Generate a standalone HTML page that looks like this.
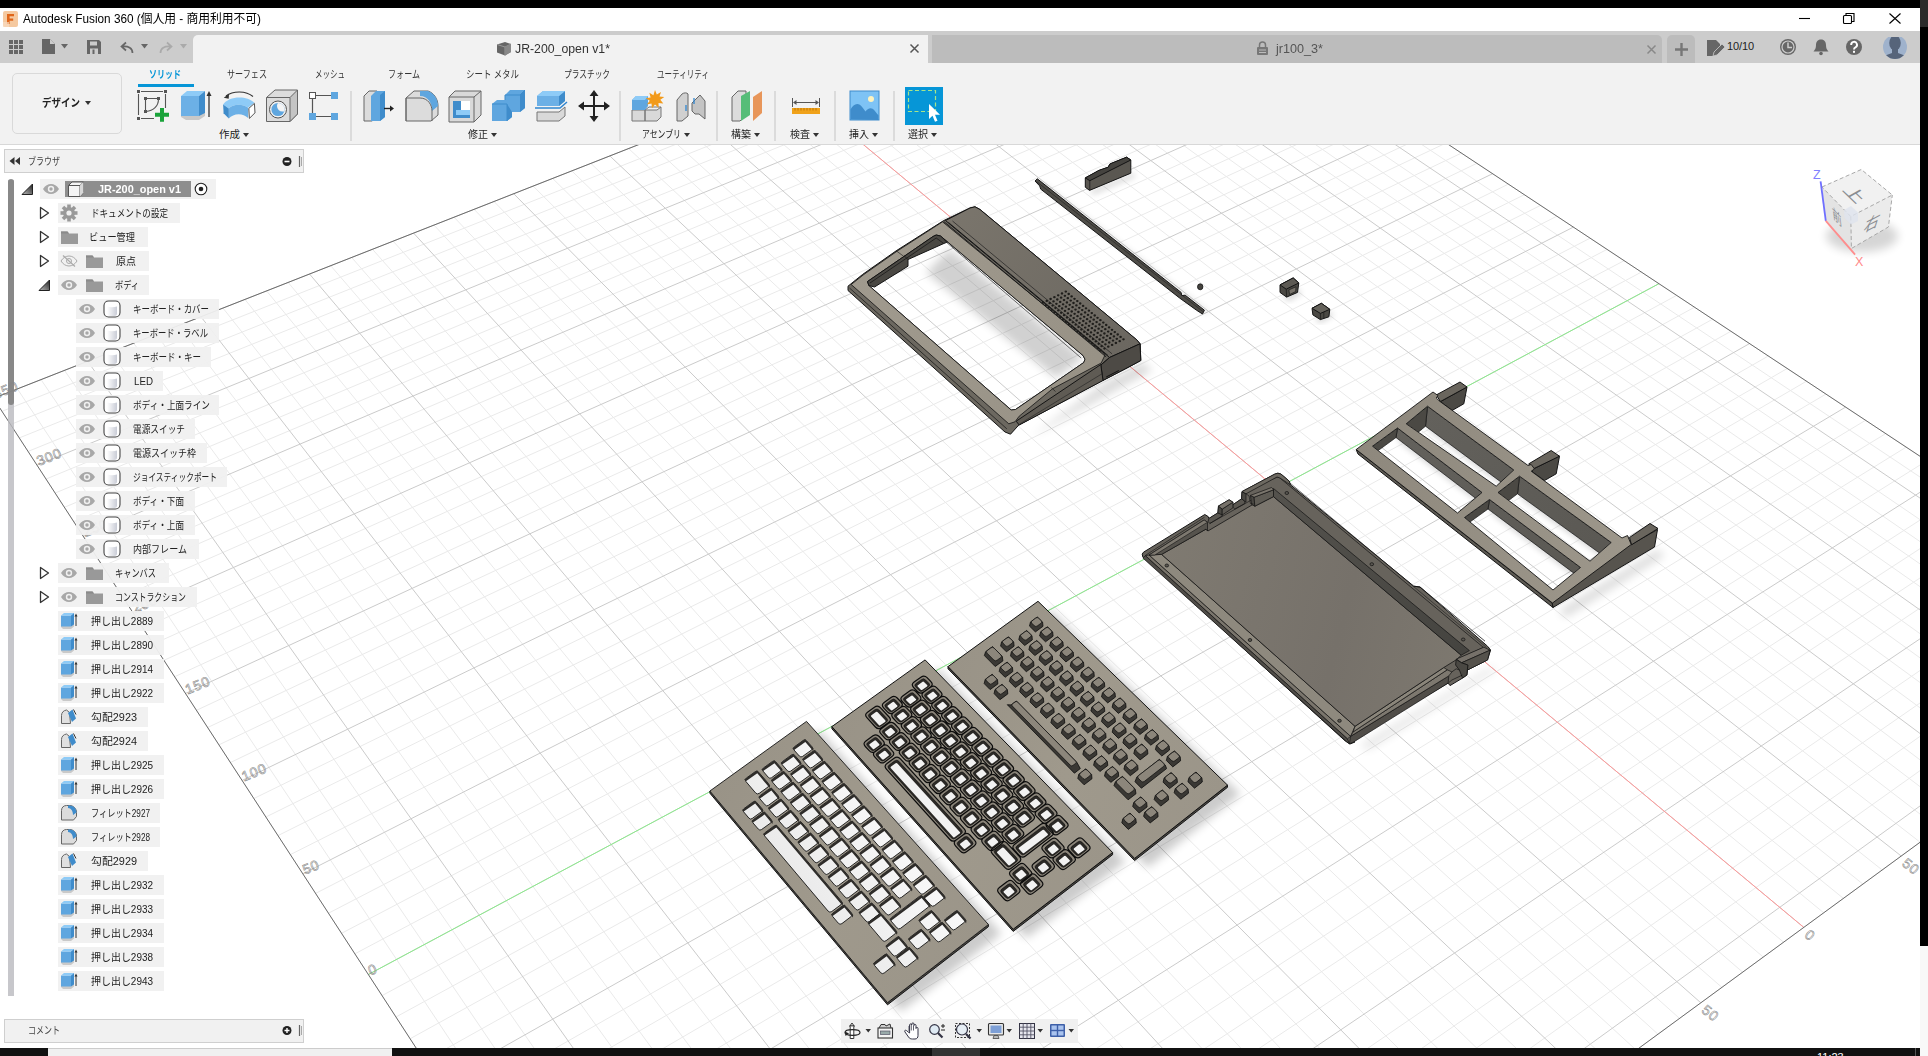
<!DOCTYPE html>
<html lang="ja"><head><meta charset="utf-8"><title>Autodesk Fusion 360</title>
<style>
*{box-sizing:border-box;margin:0;padding:0}
html,body{width:1928px;height:1056px;overflow:hidden;background:#000}
body{font-family:"Liberation Sans","Noto Sans CJK JP",sans-serif;font-size:12px;color:#222;position:relative}
.abs{position:absolute}
#win{position:absolute;left:0;top:8px;width:1920px;height:1040px;background:#fff}
#title{position:absolute;left:0;top:8px;width:1920px;height:23px;background:#fff}
#title .t{position:absolute;left:23px;top:4px;font-size:12.5px;color:#000;white-space:nowrap;letter-spacing:-0.1px}
#tabbar{position:absolute;left:0;top:31px;width:1920px;height:32px;background:#cccccc}
#toolbar{position:absolute;left:0;top:63px;width:1920px;height:82px;background:#f2f2f2;border-bottom:1px solid #d8d8d8}
.tab1{position:absolute;left:193px;top:4px;width:735px;height:28px;background:#f2f2f2;border-radius:5px 0 0 0}
.tab2{position:absolute;left:932px;top:4px;width:730px;height:28px;background:#bcbcbc;border-radius:0}
.tablabel{position:absolute;top:7px;font-size:12.5px;white-space:nowrap}
.rt{position:absolute;top:65px;font-size:10.5px;color:#333;white-space:nowrap;transform-origin:0 0}
.grp{position:absolute;top:128px;font-size:10.5px;color:#222;white-space:nowrap}
.row{position:absolute;height:20px;background:rgba(240,240,240,.93);font-size:10.5px;color:#222;white-space:nowrap}
.row span{position:absolute;top:3px}
</style></head><body>
<div id="win"></div>
<svg class="abs" style="left:0;top:145px" width="1920" height="903" viewBox="0 145 1920 903">
<defs>
<filter id="blur3" x="-20%" y="-20%" width="140%" height="140%"><feGaussianBlur stdDeviation="3"/></filter>
<filter id="blur5" x="-20%" y="-20%" width="140%" height="140%"><feGaussianBlur stdDeviation="5"/></filter>
</defs>
<path d="M810.8 1654.7L2197 639.4M769.1 1590.5L2148.9 607.6M748.8 1559.3L2125.4 592.1M728.8 1528.7L2102.2 576.7M709.3 1498.6L2079.3 561.6M671.2 1440.1L2034.3 531.9M652.7 1411.6L2012.3 517.3M634.5 1383.7L1990.5 502.9M616.7 1356.2L1969 488.7M581.9 1302.7L1926.8 460.8M564.9 1276.7L1906.2 447.1M548.3 1251.1L1885.7 433.6M531.9 1225.9L1865.5 420.3M499.9 1176.8L1825.9 394.1M484.4 1152.8L1806.5 381.2M469 1129.3L1787.2 368.5M454 1106.1L1768.3 356M424.5 1060.8L1730.9 331.3M410.2 1038.7L1712.6 319.2M396 1017L1694.5 307.2M382.1 995.6L1676.6 295.4M354.9 953.8L1641.4 272.1M341.6 933.3L1624.1 260.7M328.5 913.2L1607 249.4M315.6 893.4L1590.1 238.2M290.4 854.6L1556.9 216.2M278 835.6L1540.5 205.4M265.9 817L1524.4 194.7M253.9 798.5L1508.4 184.1M230.5 762.5L1476.9 163.3M219 744.8L1461.4 153.1M207.7 727.5L1446.1 143M196.5 710.3L1431 133M174.7 676.7L1401.2 113.3M164 660.3L1386.5 103.6M153.4 644L1372 94M143 628L1357.6 84.5M122.6 596.6L1329.3 65.8M112.6 581.2L1315.4 56.6M102.7 566.1L1301.6 47.4M92.9 551.1L1288 38.4M73.8 521.7L1261.1 20.6M64.4 507.3L1247.8 11.9M55.2 493L1234.7 3.2M46.1 479L1221.8 -5.4M28.1 451.4L1196.2 -22.3M19.3 437.9L1183.6 -30.6M10.6 424.5L1171.1 -38.9M2 411.3L1158.7 -47M810.8 1654.7L-6.5 398.3M843 1631.2L17.4 388.9M874.7 1607.9L41 379.6M906 1585L64.5 370.4M967.2 1540.1L110.7 352.2M997.3 1518.2L133.6 343.2M1026.9 1496.4L156.2 334.3M1056.1 1475L178.7 325.5M1113.5 1433L223 308.1M1141.6 1412.4L244.9 299.4M1169.3 1392.1L266.6 290.9M1196.7 1372.1L288.1 282.4M1250.5 1332.7L330.7 265.7M1276.9 1313.4L351.7 257.5M1302.9 1294.3L372.5 249.3M1328.6 1275.4L393.1 241.1M1379.1 1238.4L434 225.1M1403.9 1220.3L454.1 217.2M1428.4 1202.3L474.1 209.3M1452.6 1184.6L494 201.5M1500.2 1149.8L533.2 186.1M1523.5 1132.7L552.6 178.4M1546.6 1115.8L571.8 170.9M1569.4 1099.1L590.9 163.4M1614.2 1066.3L628.6 148.5M1636.2 1050.1L647.2 141.2M1658 1034.2L665.7 133.9M1679.5 1018.4L684.1 126.7M1721.9 987.4L720.4 112.5M1742.7 972.2L738.3 105.4M1763.3 957.1L756.1 98.4M1783.6 942.2L773.8 91.4M1823.7 912.8L808.7 77.7M1843.4 898.4L826 70.9M1862.9 884.1L843.2 64.2M1882.2 870L860.2 57.5M1920.1 842.2L893.9 44.2M1938.8 828.5L910.5 37.7M1957.3 815L927 31.2M1975.5 801.6L943.5 24.7M2011.5 775.2L975.9 12M2029.3 762.2L992 5.6M2046.8 749.4L1007.9 -0.6M2064.2 736.7L1023.8 -6.9M2098.4 711.6L1055.1 -19.2M2115.2 699.3L1070.6 -25.3M2131.9 687.1L1086 -31.3M2148.4 675L1101.3 -37.3M2180.9 651.1L1131.5 -49.2M2197 639.4L1146.5 -55.1" stroke="#eaeaea" stroke-width="1" fill="none"/>
<path d="M789.8 1622.3L2172.8 623.4M690.1 1469.1L2056.6 546.6M599.1 1329.3L1947.8 474.7M515.8 1201.1L1845.6 407.1M439.1 1083.3L1749.5 343.6M368.4 974.5L1658.9 283.7M302.9 873.8L1573.4 227.1M242.1 780.4L1492.6 173.7M185.5 693.4L1416 123.1M132.7 612.2L1343.4 75.1M83.3 536.3L1274.5 29.5M37 465.1L1208.9 -13.9M-6.5 398.3L1146.5 -55.1M936.8 1562.4L87.7 361.3M1085 1453.9L200.9 316.7M1223.8 1352.2L309.5 274M1354 1256.8L413.6 233.1M1476.5 1167.1L513.7 193.7M1591.9 1082.6L609.8 155.9M1700.8 1002.8L702.3 119.6M1803.8 927.4L791.3 84.6M1901.2 856L877.1 50.8M1993.6 788.3L959.8 18.3M2081.4 724.1L1039.5 -13M2164.8 663L1116.4 -43.3" stroke="#cbcbcb" stroke-width="1" fill="none"/>
<path d="M1803.8 927.4L791.3 84.6" stroke="#f99" stroke-width="1"/>
<path d="M368.4 974.5L1658.9 283.7" stroke="#8cec8c" stroke-width="1"/>
<polygon points="810.8,1654.7 -6.5,398.3 1146.5,-55.1 2197,639.4" fill="none" stroke="#6c6c6c" stroke-width="1"/>
<text x="370.4" y="975.5" font-size="14" fill="none" stroke="#858585" stroke-width=".55" letter-spacing=".8" font-family="Liberation Sans,sans-serif" transform="rotate(-22 370.4 975.5)">0</text>
<text x="304.9" y="874.8" font-size="14" fill="none" stroke="#858585" stroke-width=".55" letter-spacing=".8" font-family="Liberation Sans,sans-serif" transform="rotate(-22 304.9 874.8)">50</text>
<text x="244.1" y="781.4" font-size="14" fill="none" stroke="#858585" stroke-width=".55" letter-spacing=".8" font-family="Liberation Sans,sans-serif" transform="rotate(-22 244.1 781.4)">100</text>
<text x="187.5" y="694.4" font-size="14" fill="none" stroke="#858585" stroke-width=".55" letter-spacing=".8" font-family="Liberation Sans,sans-serif" transform="rotate(-22 187.5 694.4)">150</text>
<text x="134.7" y="613.2" font-size="14" fill="none" stroke="#858585" stroke-width=".55" letter-spacing=".8" font-family="Liberation Sans,sans-serif" transform="rotate(-22 134.7 613.2)">200</text>
<text x="85.3" y="537.3" font-size="14" fill="none" stroke="#858585" stroke-width=".55" letter-spacing=".8" font-family="Liberation Sans,sans-serif" transform="rotate(-22 85.3 537.3)">250</text>
<text x="39" y="466.1" font-size="14" fill="none" stroke="#858585" stroke-width=".55" letter-spacing=".8" font-family="Liberation Sans,sans-serif" transform="rotate(-22 39 466.1)">300</text>
<text x="-4.5" y="399.3" font-size="14" fill="none" stroke="#858585" stroke-width=".55" letter-spacing=".8" font-family="Liberation Sans,sans-serif" transform="rotate(-22 -4.5 399.3)">350</text>
<text x="1700.8" y="1011.8" font-size="14" fill="none" stroke="#858585" stroke-width=".55" letter-spacing=".8" font-family="Liberation Sans,sans-serif" transform="rotate(38 1700.8 1011.8)">50</text>
<text x="1803.8" y="936.4" font-size="14" fill="none" stroke="#858585" stroke-width=".55" letter-spacing=".8" font-family="Liberation Sans,sans-serif" transform="rotate(38 1803.8 936.4)">0</text>
<text x="1901.2" y="865" font-size="14" fill="none" stroke="#858585" stroke-width=".55" letter-spacing=".8" font-family="Liberation Sans,sans-serif" transform="rotate(38 1901.2 865)">50</text>
<defs>
<linearGradient id="gFrame" gradientUnits="userSpaceOnUse" x1="850" y1="290" x2="1100" y2="350"><stop offset="0" stop-color="#a09a8e"/><stop offset="1" stop-color="#989286"/></linearGradient>
<linearGradient id="gBack" gradientUnits="userSpaceOnUse" x1="950" y1="215" x2="1135" y2="350"><stop offset="0" stop-color="#7a756c"/><stop offset="1" stop-color="#6b6760"/></linearGradient>
<linearGradient id="gIF" gradientUnits="userSpaceOnUse" x1="1360" y1="450" x2="1640" y2="520"><stop offset="0" stop-color="#8e887d"/><stop offset="1" stop-color="#9d978b"/></linearGradient>
<linearGradient id="gWall" gradientUnits="userSpaceOnUse" x1="1400" y1="400" x2="1620" y2="560"><stop offset="0" stop-color="#64625d"/><stop offset="1" stop-color="#5a5853"/></linearGradient>
<linearGradient id="gBWall" gradientUnits="userSpaceOnUse" x1="1275" y1="490" x2="1465" y2="650"><stop offset="0" stop-color="#54524d"/><stop offset="1" stop-color="#454440"/></linearGradient>
<linearGradient id="gFloor" gradientUnits="userSpaceOnUse" x1="1160" y1="560" x2="1470" y2="640"><stop offset="0" stop-color="#7f7a71"/><stop offset=".6" stop-color="#76716a"/><stop offset="1" stop-color="#7d786f"/></linearGradient>
</defs><polygon points="949.5,248.8 1083.8,358 1056.2,378 926.2,272.5" fill="#000" opacity=".18" filter="url(#blur5)" clip-path="url(#cpWin)"/>
<polygon points="1105,382.5 1142.5,362.5 1152.5,370 1030,437.5" fill="#000" opacity=".15" filter="url(#blur5)"/>
<clipPath id="cpWin"><polygon points="867.5,281.5 933,236.5 936.2,235 940.5,236 1083,355.5 1085,359.2 1083.8,362.5 1015.5,409.5 1011.2,410 868.8,285.5"/></clipPath>
<path d="M848 286.2L862.5 274.5L896.2 250.8L943.8 220.5L970 208L975 206.8L980 209.5L1136.2 339.5L1140.2 343.8L1140.8 360.5L1128.8 367L1102.5 380.5L1018.8 425L1010.5 434.2L1005 432L848 290.5ZM867.5 281.5L933 236.5L936.2 235L940.5 236L1083 355.5L1085 359.2L1083.8 362.5L1015.5 409.5L1011.2 410L868.8 285.5Z" fill="#6c6860" fill-rule="evenodd" stroke="#141414" stroke-width="1" stroke-linejoin="round"/>
<path d="M851.2 284.5L863.8 274.5L897 251.2L942.5 221.8L1105 355L1101.2 363L1052.5 388.8L1019.2 416.2L1015 421.8L1008.8 423.8ZM867.5 281.5L933 236.5L936.2 235L940.5 236L1083 355.5L1085 359.2L1083.8 362.5L1015.5 409.5L1011.2 410L868.8 285.5Z" fill="url(#gFrame)" fill-rule="evenodd" stroke="#141414" stroke-width="0.8" stroke-linejoin="round"/>
<polygon points="867.5,281.5 933,236.5 936.2,235 940.5,236 947.5,242 943.8,243.5 908,259.5 908,266.2 874.5,287 868.8,285.5" fill="#4a4843" stroke="#141414" stroke-width="1.0" stroke-linejoin="round" />
<polyline points="870,283 936.2,238 943.8,243.5" fill="none" stroke="#141414" stroke-width="0.7" stroke-linejoin="round" />
<polyline points="903.8,255.5 908,259.5" fill="none" stroke="#141414" stroke-width="0.7" stroke-linejoin="round" />
<polyline points="896.2,250.8 903,255.8" fill="none" stroke="#141414" stroke-width="0.6" stroke-linejoin="round" />
<polyline points="1051.2,387.5 1055.5,391.5" fill="none" stroke="#141414" stroke-width="0.6" stroke-linejoin="round" />
<polyline points="943.8,240 1081.2,358" fill="none" stroke="#2a2a2a" stroke-width="0.7" stroke-linejoin="round" />
<polyline points="849.5,288 1006.8,428.8" fill="none" stroke="#141414" stroke-width="0.7" stroke-linejoin="round" />
<polygon points="945.5,220.5 970,208 975,206.8 980,209.5 1137,340 1140,343.8 1109.5,357.5" fill="url(#gBack)" stroke="#141414" stroke-width="1.0" stroke-linejoin="round" />
<polyline points="948.5,222.5 1108,355.5" fill="none" stroke="#1a1a1a" stroke-width="0.9" stroke-linejoin="round" />
<polyline points="952.5,221 1112,353.8" fill="none" stroke="#2c2b29" stroke-width="0.8" stroke-linejoin="round" />
<polyline points="943.8,221.5 1106.2,357" fill="none" stroke="#1a1a1a" stroke-width="0.9" stroke-linejoin="round" />
<polygon points="1109.5,357.5 1140,343.8 1140.8,360.5 1128.8,367 1103,380.5 1100.8,365" fill="#4d4a45" stroke="#141414" stroke-width="1.0" stroke-linejoin="round" />
<polyline points="1100.8,365 1109.5,357.5" fill="none" stroke="#141414" stroke-width="0.7" stroke-linejoin="round" />
<polygon points="1016.2,421.2 1100.8,364.5 1103,380.5 1019.2,425" fill="#5f5b54" stroke="#141414" stroke-width="1.0" stroke-linejoin="round" />
<polyline points="1020,423.8 1102,373.8" fill="none" stroke="#222" stroke-width="0.6" stroke-linejoin="round" />
<polyline points="1106.2,377 1118.8,370.5" fill="none" stroke="#111" stroke-width="1.0" stroke-linejoin="round" />
<path d="M1064.5 291.6a1.3 1.15 0 1 0 2.6 0a1.3 1.15 0 1 0 -2.6 0M1060.7 293.5a1.3 1.15 0 1 0 2.6 0a1.3 1.15 0 1 0 -2.6 0M1056.9 295.3a1.3 1.15 0 1 0 2.6 0a1.3 1.15 0 1 0 -2.6 0M1053.1 297.2a1.3 1.15 0 1 0 2.6 0a1.3 1.15 0 1 0 -2.6 0M1049.3 299a1.3 1.15 0 1 0 2.6 0a1.3 1.15 0 1 0 -2.6 0M1045.5 300.9a1.3 1.15 0 1 0 2.6 0a1.3 1.15 0 1 0 -2.6 0M1041.7 302.7a1.3 1.15 0 1 0 2.6 0a1.3 1.15 0 1 0 -2.6 0M1067.4 294a1.3 1.15 0 1 0 2.6 0a1.3 1.15 0 1 0 -2.6 0M1063.6 295.8a1.3 1.15 0 1 0 2.6 0a1.3 1.15 0 1 0 -2.6 0M1059.8 297.7a1.3 1.15 0 1 0 2.6 0a1.3 1.15 0 1 0 -2.6 0M1056 299.5a1.3 1.15 0 1 0 2.6 0a1.3 1.15 0 1 0 -2.6 0M1052.2 301.4a1.3 1.15 0 1 0 2.6 0a1.3 1.15 0 1 0 -2.6 0M1048.4 303.2a1.3 1.15 0 1 0 2.6 0a1.3 1.15 0 1 0 -2.6 0M1044.6 305.1a1.3 1.15 0 1 0 2.6 0a1.3 1.15 0 1 0 -2.6 0M1070.3 296.4a1.3 1.15 0 1 0 2.6 0a1.3 1.15 0 1 0 -2.6 0M1066.5 298.2a1.3 1.15 0 1 0 2.6 0a1.3 1.15 0 1 0 -2.6 0M1062.7 300.1a1.3 1.15 0 1 0 2.6 0a1.3 1.15 0 1 0 -2.6 0M1058.9 301.9a1.3 1.15 0 1 0 2.6 0a1.3 1.15 0 1 0 -2.6 0M1055.1 303.8a1.3 1.15 0 1 0 2.6 0a1.3 1.15 0 1 0 -2.6 0M1051.3 305.6a1.3 1.15 0 1 0 2.6 0a1.3 1.15 0 1 0 -2.6 0M1047.5 307.5a1.3 1.15 0 1 0 2.6 0a1.3 1.15 0 1 0 -2.6 0M1073.2 298.8a1.3 1.15 0 1 0 2.6 0a1.3 1.15 0 1 0 -2.6 0M1069.4 300.6a1.3 1.15 0 1 0 2.6 0a1.3 1.15 0 1 0 -2.6 0M1065.6 302.5a1.3 1.15 0 1 0 2.6 0a1.3 1.15 0 1 0 -2.6 0M1061.8 304.3a1.3 1.15 0 1 0 2.6 0a1.3 1.15 0 1 0 -2.6 0M1058 306.2a1.3 1.15 0 1 0 2.6 0a1.3 1.15 0 1 0 -2.6 0M1054.2 308a1.3 1.15 0 1 0 2.6 0a1.3 1.15 0 1 0 -2.6 0M1050.4 309.9a1.3 1.15 0 1 0 2.6 0a1.3 1.15 0 1 0 -2.6 0M1076 301.1a1.3 1.15 0 1 0 2.6 0a1.3 1.15 0 1 0 -2.6 0M1072.2 303a1.3 1.15 0 1 0 2.6 0a1.3 1.15 0 1 0 -2.6 0M1068.4 304.8a1.3 1.15 0 1 0 2.6 0a1.3 1.15 0 1 0 -2.6 0M1064.6 306.7a1.3 1.15 0 1 0 2.6 0a1.3 1.15 0 1 0 -2.6 0M1060.8 308.5a1.3 1.15 0 1 0 2.6 0a1.3 1.15 0 1 0 -2.6 0M1057 310.4a1.3 1.15 0 1 0 2.6 0a1.3 1.15 0 1 0 -2.6 0M1053.2 312.2a1.3 1.15 0 1 0 2.6 0a1.3 1.15 0 1 0 -2.6 0M1078.9 303.5a1.3 1.15 0 1 0 2.6 0a1.3 1.15 0 1 0 -2.6 0M1075.1 305.4a1.3 1.15 0 1 0 2.6 0a1.3 1.15 0 1 0 -2.6 0M1071.3 307.2a1.3 1.15 0 1 0 2.6 0a1.3 1.15 0 1 0 -2.6 0M1067.5 309.1a1.3 1.15 0 1 0 2.6 0a1.3 1.15 0 1 0 -2.6 0M1063.7 310.9a1.3 1.15 0 1 0 2.6 0a1.3 1.15 0 1 0 -2.6 0M1059.9 312.8a1.3 1.15 0 1 0 2.6 0a1.3 1.15 0 1 0 -2.6 0M1056.1 314.6a1.3 1.15 0 1 0 2.6 0a1.3 1.15 0 1 0 -2.6 0M1081.8 305.9a1.3 1.15 0 1 0 2.6 0a1.3 1.15 0 1 0 -2.6 0M1078 307.8a1.3 1.15 0 1 0 2.6 0a1.3 1.15 0 1 0 -2.6 0M1074.2 309.6a1.3 1.15 0 1 0 2.6 0a1.3 1.15 0 1 0 -2.6 0M1070.4 311.5a1.3 1.15 0 1 0 2.6 0a1.3 1.15 0 1 0 -2.6 0M1066.6 313.3a1.3 1.15 0 1 0 2.6 0a1.3 1.15 0 1 0 -2.6 0M1062.8 315.2a1.3 1.15 0 1 0 2.6 0a1.3 1.15 0 1 0 -2.6 0M1059 317a1.3 1.15 0 1 0 2.6 0a1.3 1.15 0 1 0 -2.6 0M1084.7 308.3a1.3 1.15 0 1 0 2.6 0a1.3 1.15 0 1 0 -2.6 0M1080.9 310.1a1.3 1.15 0 1 0 2.6 0a1.3 1.15 0 1 0 -2.6 0M1077.1 312a1.3 1.15 0 1 0 2.6 0a1.3 1.15 0 1 0 -2.6 0M1073.3 313.8a1.3 1.15 0 1 0 2.6 0a1.3 1.15 0 1 0 -2.6 0M1069.5 315.7a1.3 1.15 0 1 0 2.6 0a1.3 1.15 0 1 0 -2.6 0M1065.7 317.5a1.3 1.15 0 1 0 2.6 0a1.3 1.15 0 1 0 -2.6 0M1061.9 319.4a1.3 1.15 0 1 0 2.6 0a1.3 1.15 0 1 0 -2.6 0M1087.6 310.7a1.3 1.15 0 1 0 2.6 0a1.3 1.15 0 1 0 -2.6 0M1083.8 312.5a1.3 1.15 0 1 0 2.6 0a1.3 1.15 0 1 0 -2.6 0M1080 314.4a1.3 1.15 0 1 0 2.6 0a1.3 1.15 0 1 0 -2.6 0M1076.2 316.2a1.3 1.15 0 1 0 2.6 0a1.3 1.15 0 1 0 -2.6 0M1072.4 318.1a1.3 1.15 0 1 0 2.6 0a1.3 1.15 0 1 0 -2.6 0M1068.6 319.9a1.3 1.15 0 1 0 2.6 0a1.3 1.15 0 1 0 -2.6 0M1064.8 321.8a1.3 1.15 0 1 0 2.6 0a1.3 1.15 0 1 0 -2.6 0M1090.5 313.1a1.3 1.15 0 1 0 2.6 0a1.3 1.15 0 1 0 -2.6 0M1086.7 314.9a1.3 1.15 0 1 0 2.6 0a1.3 1.15 0 1 0 -2.6 0M1082.9 316.8a1.3 1.15 0 1 0 2.6 0a1.3 1.15 0 1 0 -2.6 0M1079.1 318.6a1.3 1.15 0 1 0 2.6 0a1.3 1.15 0 1 0 -2.6 0M1075.3 320.5a1.3 1.15 0 1 0 2.6 0a1.3 1.15 0 1 0 -2.6 0M1071.5 322.3a1.3 1.15 0 1 0 2.6 0a1.3 1.15 0 1 0 -2.6 0M1067.7 324.2a1.3 1.15 0 1 0 2.6 0a1.3 1.15 0 1 0 -2.6 0M1093.4 315.5a1.3 1.15 0 1 0 2.6 0a1.3 1.15 0 1 0 -2.6 0M1089.6 317.3a1.3 1.15 0 1 0 2.6 0a1.3 1.15 0 1 0 -2.6 0M1085.8 319.2a1.3 1.15 0 1 0 2.6 0a1.3 1.15 0 1 0 -2.6 0M1082 321a1.3 1.15 0 1 0 2.6 0a1.3 1.15 0 1 0 -2.6 0M1078.2 322.9a1.3 1.15 0 1 0 2.6 0a1.3 1.15 0 1 0 -2.6 0M1074.4 324.7a1.3 1.15 0 1 0 2.6 0a1.3 1.15 0 1 0 -2.6 0M1070.6 326.6a1.3 1.15 0 1 0 2.6 0a1.3 1.15 0 1 0 -2.6 0M1096.2 317.8a1.3 1.15 0 1 0 2.6 0a1.3 1.15 0 1 0 -2.6 0M1092.4 319.7a1.3 1.15 0 1 0 2.6 0a1.3 1.15 0 1 0 -2.6 0M1088.6 321.5a1.3 1.15 0 1 0 2.6 0a1.3 1.15 0 1 0 -2.6 0M1084.8 323.4a1.3 1.15 0 1 0 2.6 0a1.3 1.15 0 1 0 -2.6 0M1081 325.2a1.3 1.15 0 1 0 2.6 0a1.3 1.15 0 1 0 -2.6 0M1077.2 327.1a1.3 1.15 0 1 0 2.6 0a1.3 1.15 0 1 0 -2.6 0M1073.4 328.9a1.3 1.15 0 1 0 2.6 0a1.3 1.15 0 1 0 -2.6 0M1099.1 320.2a1.3 1.15 0 1 0 2.6 0a1.3 1.15 0 1 0 -2.6 0M1095.3 322.1a1.3 1.15 0 1 0 2.6 0a1.3 1.15 0 1 0 -2.6 0M1091.5 323.9a1.3 1.15 0 1 0 2.6 0a1.3 1.15 0 1 0 -2.6 0M1087.7 325.8a1.3 1.15 0 1 0 2.6 0a1.3 1.15 0 1 0 -2.6 0M1083.9 327.6a1.3 1.15 0 1 0 2.6 0a1.3 1.15 0 1 0 -2.6 0M1080.1 329.5a1.3 1.15 0 1 0 2.6 0a1.3 1.15 0 1 0 -2.6 0M1076.3 331.3a1.3 1.15 0 1 0 2.6 0a1.3 1.15 0 1 0 -2.6 0M1102 322.6a1.3 1.15 0 1 0 2.6 0a1.3 1.15 0 1 0 -2.6 0M1098.2 324.5a1.3 1.15 0 1 0 2.6 0a1.3 1.15 0 1 0 -2.6 0M1094.4 326.3a1.3 1.15 0 1 0 2.6 0a1.3 1.15 0 1 0 -2.6 0M1090.6 328.2a1.3 1.15 0 1 0 2.6 0a1.3 1.15 0 1 0 -2.6 0M1086.8 330a1.3 1.15 0 1 0 2.6 0a1.3 1.15 0 1 0 -2.6 0M1083 331.9a1.3 1.15 0 1 0 2.6 0a1.3 1.15 0 1 0 -2.6 0M1079.2 333.7a1.3 1.15 0 1 0 2.6 0a1.3 1.15 0 1 0 -2.6 0M1104.9 325a1.3 1.15 0 1 0 2.6 0a1.3 1.15 0 1 0 -2.6 0M1101.1 326.8a1.3 1.15 0 1 0 2.6 0a1.3 1.15 0 1 0 -2.6 0M1097.3 328.7a1.3 1.15 0 1 0 2.6 0a1.3 1.15 0 1 0 -2.6 0M1093.5 330.5a1.3 1.15 0 1 0 2.6 0a1.3 1.15 0 1 0 -2.6 0M1089.7 332.4a1.3 1.15 0 1 0 2.6 0a1.3 1.15 0 1 0 -2.6 0M1085.9 334.2a1.3 1.15 0 1 0 2.6 0a1.3 1.15 0 1 0 -2.6 0M1082.1 336.1a1.3 1.15 0 1 0 2.6 0a1.3 1.15 0 1 0 -2.6 0M1107.8 327.4a1.3 1.15 0 1 0 2.6 0a1.3 1.15 0 1 0 -2.6 0M1104 329.2a1.3 1.15 0 1 0 2.6 0a1.3 1.15 0 1 0 -2.6 0M1100.2 331.1a1.3 1.15 0 1 0 2.6 0a1.3 1.15 0 1 0 -2.6 0M1096.4 332.9a1.3 1.15 0 1 0 2.6 0a1.3 1.15 0 1 0 -2.6 0M1092.6 334.8a1.3 1.15 0 1 0 2.6 0a1.3 1.15 0 1 0 -2.6 0M1088.8 336.6a1.3 1.15 0 1 0 2.6 0a1.3 1.15 0 1 0 -2.6 0M1085 338.5a1.3 1.15 0 1 0 2.6 0a1.3 1.15 0 1 0 -2.6 0M1110.7 329.8a1.3 1.15 0 1 0 2.6 0a1.3 1.15 0 1 0 -2.6 0M1106.9 331.6a1.3 1.15 0 1 0 2.6 0a1.3 1.15 0 1 0 -2.6 0M1103.1 333.5a1.3 1.15 0 1 0 2.6 0a1.3 1.15 0 1 0 -2.6 0M1099.3 335.3a1.3 1.15 0 1 0 2.6 0a1.3 1.15 0 1 0 -2.6 0M1095.5 337.2a1.3 1.15 0 1 0 2.6 0a1.3 1.15 0 1 0 -2.6 0M1091.7 339a1.3 1.15 0 1 0 2.6 0a1.3 1.15 0 1 0 -2.6 0M1087.9 340.9a1.3 1.15 0 1 0 2.6 0a1.3 1.15 0 1 0 -2.6 0M1113.5 332.1a1.3 1.15 0 1 0 2.6 0a1.3 1.15 0 1 0 -2.6 0M1109.7 334a1.3 1.15 0 1 0 2.6 0a1.3 1.15 0 1 0 -2.6 0M1105.9 335.8a1.3 1.15 0 1 0 2.6 0a1.3 1.15 0 1 0 -2.6 0M1102.1 337.7a1.3 1.15 0 1 0 2.6 0a1.3 1.15 0 1 0 -2.6 0M1098.3 339.5a1.3 1.15 0 1 0 2.6 0a1.3 1.15 0 1 0 -2.6 0M1094.5 341.4a1.3 1.15 0 1 0 2.6 0a1.3 1.15 0 1 0 -2.6 0M1090.7 343.2a1.3 1.15 0 1 0 2.6 0a1.3 1.15 0 1 0 -2.6 0M1116.4 334.5a1.3 1.15 0 1 0 2.6 0a1.3 1.15 0 1 0 -2.6 0M1112.6 336.4a1.3 1.15 0 1 0 2.6 0a1.3 1.15 0 1 0 -2.6 0M1108.8 338.2a1.3 1.15 0 1 0 2.6 0a1.3 1.15 0 1 0 -2.6 0M1105 340.1a1.3 1.15 0 1 0 2.6 0a1.3 1.15 0 1 0 -2.6 0M1101.2 341.9a1.3 1.15 0 1 0 2.6 0a1.3 1.15 0 1 0 -2.6 0M1097.4 343.8a1.3 1.15 0 1 0 2.6 0a1.3 1.15 0 1 0 -2.6 0M1093.6 345.6a1.3 1.15 0 1 0 2.6 0a1.3 1.15 0 1 0 -2.6 0M1119.3 336.9a1.3 1.15 0 1 0 2.6 0a1.3 1.15 0 1 0 -2.6 0M1115.5 338.8a1.3 1.15 0 1 0 2.6 0a1.3 1.15 0 1 0 -2.6 0M1111.7 340.6a1.3 1.15 0 1 0 2.6 0a1.3 1.15 0 1 0 -2.6 0M1107.9 342.5a1.3 1.15 0 1 0 2.6 0a1.3 1.15 0 1 0 -2.6 0M1104.1 344.3a1.3 1.15 0 1 0 2.6 0a1.3 1.15 0 1 0 -2.6 0M1100.3 346.2a1.3 1.15 0 1 0 2.6 0a1.3 1.15 0 1 0 -2.6 0M1096.5 348a1.3 1.15 0 1 0 2.6 0a1.3 1.15 0 1 0 -2.6 0M1122.2 339.3a1.3 1.15 0 1 0 2.6 0a1.3 1.15 0 1 0 -2.6 0M1118.4 341.2a1.3 1.15 0 1 0 2.6 0a1.3 1.15 0 1 0 -2.6 0M1114.6 343a1.3 1.15 0 1 0 2.6 0a1.3 1.15 0 1 0 -2.6 0M1110.8 344.9a1.3 1.15 0 1 0 2.6 0a1.3 1.15 0 1 0 -2.6 0M1107 346.7a1.3 1.15 0 1 0 2.6 0a1.3 1.15 0 1 0 -2.6 0M1103.2 348.6a1.3 1.15 0 1 0 2.6 0a1.3 1.15 0 1 0 -2.6 0M1099.4 350.4a1.3 1.15 0 1 0 2.6 0a1.3 1.15 0 1 0 -2.6 0" fill="#1f1e1b"/><polygon points="1038.8,185.4 1205.9,314 1209.6,312.1 1042.5,182.6" fill="#000" opacity=".12" filter="url(#blur3)"/>
<polygon points="1035,181 1037.3,178.8 1181.1,292.4 1181.8,295.6 1185.2,295.2 1204.4,310.2 1202.5,314 1196.5,310.2 1179.6,298 1040.7,189.1 1039.7,185.9" fill="#4f4d48" stroke="#141414" stroke-width="1.0" stroke-linejoin="round" />
<polyline points="1036.5,181.6 1203.1,311.7" fill="none" stroke="#222" stroke-width="0.6" stroke-linejoin="round" />
<polygon points="1089.5,191 1132.7,173.2 1136.4,176 1093.2,194.2" fill="#000" opacity=".18" filter="url(#blur3)"/>
<polygon points="1085.3,177.9 1098.9,170.7 1108.2,167.2 1109.7,164.2 1126.6,157.2 1130.8,160 1130.8,173.2 1089.5,190.4 1085.3,187.2" fill="#5a5751" stroke="#141414" stroke-width="1.0" stroke-linejoin="round" />
<polygon points="1085.3,177.9 1098.9,170.3 1108.2,167.2 1110.1,163.8 1126.6,157.2 1130.8,160 1089.8,180.7" fill="#45433f" stroke="#141414" stroke-width="1.0" stroke-linejoin="round" />
<polyline points="1089.8,180.7 1089.8,190.1" fill="none" stroke="#141414" stroke-width="0.7" stroke-linejoin="round" />
<ellipse cx="1200.2" cy="286.8" rx="2.7" ry="3" fill="#45433f" stroke="#141414" stroke-width=".8"/>
<polygon points="1282.9,297.1 1297.9,289.6 1301.6,293.3 1288.5,300.8" fill="#000" opacity=".2" filter="url(#blur3)"/>
<polygon points="1280,284.9 1293.2,277.9 1298.8,283 1297.5,292.4 1286.6,297.1 1280,292.4" fill="#4a4843" stroke="#141414" stroke-width="1.0" stroke-linejoin="round" />
<polygon points="1280,284.9 1293.2,277.9 1298.8,283 1286.2,289.2" fill="#5d5a54" stroke="#141414" stroke-width="1.0" stroke-linejoin="round" />
<polygon points="1288.9,289.9 1296,286.8 1295.6,291.5 1289.6,294.5" fill="#77726a" stroke="#111" stroke-width="0.6" stroke-linejoin="round" />
<polyline points="1286.2,289.2 1286.6,297.1" fill="none" stroke="#141414" stroke-width="0.7" stroke-linejoin="round" />
<polygon points="1314.8,318.7 1329.8,312.1 1333.6,314.9 1320.4,322.4" fill="#000" opacity=".2" filter="url(#blur3)"/>
<polygon points="1312,308.3 1321.4,303.3 1329.8,309.3 1328.9,316.8 1320.4,319.6 1312.9,314.9" fill="#4a4843" stroke="#141414" stroke-width="1.0" stroke-linejoin="round" />
<polygon points="1312,308.3 1321.4,303.3 1329.8,309.3 1320.4,313.4" fill="#65625b" stroke="#141414" stroke-width="1.0" stroke-linejoin="round" />
<polyline points="1320.4,313.4 1320.4,319.6" fill="none" stroke="#141414" stroke-width="0.7" stroke-linejoin="round" />
<polyline points="1323.8,312.1 1323.8,318.1" fill="none" stroke="#141414" stroke-width="0.6" stroke-linejoin="round" /><polygon points="1560,610 1657.5,550 1665,555 1565,617.5" fill="#000" opacity=".15" filter="url(#blur5)"/>
<polygon points="1440.5,401.5 1467,387 1463.8,403.8 1452,410.5 1439,400.5" fill="#4b4944" stroke="#141414" stroke-width="1.0" stroke-linejoin="round" />
<polygon points="1436.2,395 1460,382 1467,387 1440.5,401.5" fill="#6a665e" stroke="#141414" stroke-width="1.0" stroke-linejoin="round" />
<polygon points="1532,469.5 1559.5,456.2 1556.2,473.8 1544.5,480.5 1532.5,472" fill="#4b4944" stroke="#141414" stroke-width="1.0" stroke-linejoin="round" />
<polygon points="1528.8,463.8 1551.2,450.5 1559.5,456.2 1532,469.5" fill="#6a665e" stroke="#141414" stroke-width="1.0" stroke-linejoin="round" />
<polygon points="1552,603 1627.5,537 1631.2,544.5 1657.5,529.5 1654.5,547 1553,607.5" fill="#57544e" stroke="#141414" stroke-width="1.0" stroke-linejoin="round" />
<polygon points="1629.5,537.5 1650,523.5 1658,528.5 1631.5,544.8" fill="#6a665e" stroke="#141414" stroke-width="1.0" stroke-linejoin="round" />
<polygon points="1356.2,449.5 1552,603 1553,607.5 1358,454" fill="#5d5a53" stroke="#141414" stroke-width="1.0" stroke-linejoin="round" />
<clipPath id="cpH0"><polygon points="1406.2,423.8 1427.5,406.2 1513.8,470 1496.2,486.2"/></clipPath>
<g clip-path="url(#cpH0)">
<polygon points="1427.5,406.2 1513.8,470 1515.8,495 1429.5,431.2" fill="#000" opacity=".18" filter="url(#blur3)"/>
<polygon points="1427.5,406.2 1513.8,470 1511.8,490 1425.5,426.2" fill="url(#gWall)" stroke="#141414" stroke-width=".7"/>
<polygon points="1406.2,423.8 1427.5,406.2 1425.5,426.2 1404.2,443.8" fill="#4b4944" stroke="#141414" stroke-width=".7"/>
</g>
<clipPath id="cpH1"><polygon points="1372.5,446.2 1397.5,428 1482,492.5 1457.5,513"/></clipPath>
<g clip-path="url(#cpH1)">
<polygon points="1397.5,428 1482,492.5 1484.5,507 1400,442.5" fill="#000" opacity=".18" filter="url(#blur3)"/>
<polygon points="1397.5,428 1482,492.5 1480.5,502 1396,437.5" fill="url(#gWall)" stroke="#141414" stroke-width=".7"/>
<polygon points="1372.5,446.2 1397.5,428 1396,437.5 1371,455.8" fill="#4b4944" stroke="#141414" stroke-width=".7"/>
</g>
<clipPath id="cpH2"><polygon points="1498,492.5 1519.5,476.2 1611.2,542.5 1590,561.2"/></clipPath>
<g clip-path="url(#cpH2)">
<polygon points="1519.5,476.2 1611.2,542.5 1613.2,565 1521.5,498.8" fill="#000" opacity=".18" filter="url(#blur3)"/>
<polygon points="1519.5,476.2 1611.2,542.5 1609.2,560 1517.5,493.8" fill="url(#gWall)" stroke="#141414" stroke-width=".7"/>
<polygon points="1498,492.5 1519.5,476.2 1517.5,493.8 1496,510" fill="#4b4944" stroke="#141414" stroke-width=".7"/>
</g>
<clipPath id="cpH3"><polygon points="1464.5,517.5 1489.5,499.5 1580.5,567.5 1553,590"/></clipPath>
<g clip-path="url(#cpH3)">
<polygon points="1489.5,499.5 1580.5,567.5 1583,582 1492,514" fill="#000" opacity=".18" filter="url(#blur3)"/>
<polygon points="1489.5,499.5 1580.5,567.5 1579,577 1488,509" fill="url(#gWall)" stroke="#141414" stroke-width=".7"/>
<polygon points="1464.5,517.5 1489.5,499.5 1488,509 1463,527" fill="#4b4944" stroke="#141414" stroke-width=".7"/>
</g>
<path d="M1356.2 449.5L1433 392L1438 395.5L1436.2 398L1440 401.5L1528 465.5L1531.2 464.5L1534.5 469L1531.2 471.2L1622 538L1627.5 535.5L1631.2 544.5L1552.5 603ZM1406.2 423.8L1427.5 406.2L1513.8 470L1496.2 486.2ZM1372.5 446.2L1397.5 428L1482 492.5L1457.5 513ZM1498 492.5L1519.5 476.2L1611.2 542.5L1590 561.2ZM1464.5 517.5L1489.5 499.5L1580.5 567.5L1553 590Z" fill="url(#gIF)" fill-rule="evenodd" stroke="#141414" stroke-width=".9" stroke-linejoin="round"/><polygon points="1360,745 1490,667.5 1497.5,668.8 1367.5,750" fill="#000" opacity=".1" filter="url(#blur5)"/>
<polygon points="1142.2,554.1 1143.5,552.2 1204.8,514.5 1208.2,516.6 1208.8,518.5 1217.9,512.9 1218.5,506 1229.1,499.8 1232.9,502.2 1232.9,504.8 1241.6,498.8 1242,491.6 1274.8,474.1 1277.9,473.2 1281,474.1 1289.1,481 1290.4,484.8 1413.8,586.2 1420,587 1487.5,646.2 1490.6,650 1487.5,660 1467.5,670 1466.9,675 1462.5,678.1 1450,685.6 1448.1,683.1 1352.5,740 1355,742 1350,744 1345.5,741.2 1142.9,557.2" fill="#67635c" stroke="#141414" stroke-width="1" stroke-linejoin="round" />
<polygon points="1142.9,558.1 1145.4,555.6 1347.5,738.8 1349.4,743.8 1346.5,741.5" fill="#504d48" stroke="#141414" stroke-width="0.7" stroke-linejoin="round" />
<polygon points="1145.4,555.6 1149.1,555 1350.6,736.3 1347.5,738.8" fill="#7a756c" stroke="#141414" stroke-width="0.7" stroke-linejoin="round" />
<polygon points="1149.1,555 1161.6,554.4 1355,726.3 1350.6,736.3" fill="#8e897e" stroke="#141414" stroke-width="0.7" stroke-linejoin="round" />
<polygon points="1350.6,736.3 1448.8,675.9 1448.1,683.1 1353.8,741.9 1349.4,743.8" fill="#504d48" stroke="#141414" stroke-width="0.7" stroke-linejoin="round" />
<polygon points="1353.1,731.9 1447.2,669.8 1451.9,671.9 1448.8,675.9 1350.6,736.3" fill="#7d786f" stroke="#141414" stroke-width="0.7" stroke-linejoin="round" />
<polygon points="1355,726.3 1443.8,667.5 1447.2,669.8 1353.1,731.9" fill="#8a857a" stroke="#141414" stroke-width="0.7" stroke-linejoin="round" />
<polygon points="1161.6,554.4 1206,529.1 1207.9,531 1253.5,504.1 1254.8,506.2 1273.5,496.6 1461.2,655.2 1456.9,659.4 1443.8,667.5 1355,726.3" fill="url(#gFloor)" stroke="#141414" stroke-width="0.8" stroke-linejoin="round" />
<polygon points="1273.5,488.5 1273.5,496.6 1461.2,655.2 1469.4,650.6" fill="url(#gBWall)" stroke="#141414" stroke-width="0.7" stroke-linejoin="round" />
<polyline points="1242,492.9 1277,477 1279.8,477.9 1483.5,647.5 1457.5,659" fill="none" stroke="#141414" stroke-width="0.7" stroke-linejoin="round" />
<polyline points="1281.6,476 1486.5,647.5" fill="none" stroke="#222" stroke-width="0.6" stroke-linejoin="round" />
<polygon points="1456.5,659 1483.8,647.2 1490,650.2 1461.5,662.8" fill="#76716a" stroke="#141414" stroke-width="0.7" stroke-linejoin="round" />
<polygon points="1461.5,662.8 1490,650.2 1487.5,660 1467.5,670 1467.8,665" fill="#55524c" stroke="#141414" stroke-width="0.7" stroke-linejoin="round" />
<polygon points="1456.2,659.4 1461.5,662.8 1467.8,665 1466.9,675 1462.5,678.1 1459.4,670 1455.6,665" fill="#4a4843" stroke="#141414" stroke-width="0.8" stroke-linejoin="round" />
<polyline points="1451.9,671.9 1456.2,668.8 1459.4,670" fill="none" stroke="#141414" stroke-width="0.7" stroke-linejoin="round" />
<polyline points="1448.8,682.5 1451.9,680 1462.5,675" fill="none" stroke="#141414" stroke-width="0.7" stroke-linejoin="round" />
<polygon points="1149.1,555 1204.1,520 1207.5,522.2 1207.5,531 1206,529.1 1161.6,554.4" fill="#56534d" stroke="#141414" stroke-width="0.7" stroke-linejoin="round" />
<polygon points="1149.1,555 1204.1,520 1207.5,522.2 1154.8,555" fill="#7d786f" stroke="#141414" stroke-width="0.6" stroke-linejoin="round" />
<polyline points="1145.4,555.4 1204.5,517.2" fill="none" stroke="#141414" stroke-width="0.6" stroke-linejoin="round" />
<polygon points="1208.8,518.5 1217.9,512.9 1222.2,514.1 1222.2,516 1209.8,523.5 1208.2,521.6" fill="#5a5751" stroke="#141414" stroke-width="0.7" stroke-linejoin="round" />
<polygon points="1232.9,504.8 1241.6,498.8 1244.8,501 1244.8,503.5 1234.8,509.1 1232.9,507.2" fill="#5a5751" stroke="#141414" stroke-width="0.7" stroke-linejoin="round" />
<polyline points="1209.8,523.5 1253.5,498.8" fill="none" stroke="#141414" stroke-width="0.6" stroke-linejoin="round" />
<polygon points="1217.9,512.9 1218.5,506 1222.2,509.1 1222.2,515" fill="#4a4843" stroke="#141414" stroke-width="0.7" stroke-linejoin="round" />
<polygon points="1222.2,509.1 1232.9,502.2 1232.9,507.9 1222.2,515" fill="#5d5a54" stroke="#141414" stroke-width="0.7" stroke-linejoin="round" />
<polygon points="1218.5,506 1229.1,499.8 1232.9,502.2 1222.2,509.1" fill="#77726a" stroke="#141414" stroke-width="0.7" stroke-linejoin="round" />
<polygon points="1241.6,498.8 1242,491.6 1246,493.8 1246,502.2" fill="#4a4843" stroke="#141414" stroke-width="0.7" stroke-linejoin="round" />
<polygon points="1242,491.6 1274.8,474.1 1277.9,473.2 1281,474.1 1289.1,481 1290.4,484.8 1279.8,477.9 1277,477 1246,493.8" fill="#6d6961" stroke="#141414" stroke-width="0.7" stroke-linejoin="round" />
<polygon points="1250.4,495.4 1254.1,497.2 1254.8,506.2 1251.6,504.5" fill="#4a4843" stroke="#141414" stroke-width="0.7" stroke-linejoin="round" />
<polygon points="1254.1,497.2 1273.5,489.8 1273.5,496.6 1254.8,506.2" fill="#5f5c55" stroke="#141414" stroke-width="0.7" stroke-linejoin="round" />
<polygon points="1250.4,495.4 1271.6,487.5 1273.5,489.8 1254.1,497.2" fill="#7a756c" stroke="#141414" stroke-width="0.7" stroke-linejoin="round" />
<polyline points="1246,493.8 1249.1,496 1250.4,503.5 1253.5,504.1" fill="none" stroke="#141414" stroke-width="0.6" stroke-linejoin="round" />
<polyline points="1413.8,586.2 1420,587 1485,641.2" fill="none" stroke="#141414" stroke-width="0.8" stroke-linejoin="round" />
<ellipse cx="1166.8" cy="565.5" rx="1.8" ry="1.5" fill="#5a5751" stroke="#111" stroke-width=".7"/>
<ellipse cx="1250" cy="640" rx="1.8" ry="1.5" fill="#5a5751" stroke="#111" stroke-width=".7"/>
<ellipse cx="1371.8" cy="564.2" rx="1.8" ry="1.5" fill="#5a5751" stroke="#111" stroke-width=".7"/>
<ellipse cx="1463.2" cy="639.5" rx="1.8" ry="1.5" fill="#5a5751" stroke="#111" stroke-width=".7"/>
<ellipse cx="1286.8" cy="493" rx="1.8" ry="1.5" fill="#5a5751" stroke="#111" stroke-width=".7"/>
<ellipse cx="1339.5" cy="720.8" rx="1.8" ry="1.5" fill="#5a5751" stroke="#111" stroke-width=".7"/><defs><linearGradient id="gPlate0" gradientUnits="userSpaceOnUse" x1="709.9" y1="791" x2="988.4" y2="924.5"><stop offset="0" stop-color="#999387"/><stop offset=".5" stop-color="#9f998c"/><stop offset="1" stop-color="#9b9589"/></linearGradient><linearGradient id="gPlate1" gradientUnits="userSpaceOnUse" x1="831.9" y1="726.6" x2="1112.6" y2="852.5"><stop offset="0" stop-color="#999387"/><stop offset=".5" stop-color="#9f998c"/><stop offset="1" stop-color="#9b9589"/></linearGradient><linearGradient id="gPlate2" gradientUnits="userSpaceOnUse" x1="948" y1="666.6" x2="1227.5" y2="785.1"><stop offset="0" stop-color="#999387"/><stop offset=".5" stop-color="#9f998c"/><stop offset="1" stop-color="#9b9589"/></linearGradient><linearGradient id="gHole" gradientUnits="userSpaceOnUse" x1="760" y1="900" x2="900" y2="800"><stop offset="0" stop-color="#e6e6e6"/><stop offset="1" stop-color="#fafafa"/></linearGradient></defs><polygon points="1051,610.3 1240.5,794.1 1147.6,867.4 961,675.6" fill="#000" opacity=".2" filter="url(#blur5)"/>
<polygon points="948,666.6 1134.6,858.4 1227.5,785.1 1227.5,787.3 1134.6,860.6 948,668.8" fill="#4b4843" stroke="#141414" stroke-width="1.0" stroke-linejoin="round" />
<polygon points="1038,601.3 1227.5,785.1 1134.6,858.4 948,666.6" fill="url(#gPlate2)" stroke="#141414" stroke-width="1.0" stroke-linejoin="round" />
<path d="M1037.3 617L1042.6 622.1L1043 626.3L1035.4 631.9L1029.5 626.1L1030.5 621.9ZM1047.4 626.8L1052.7 632L1053.1 636.2L1045.5 641.8L1039.6 636L1040.6 631.8ZM1057.6 636.7L1062.9 642L1063.3 646.2L1055.7 651.8L1049.7 646L1050.7 641.8ZM1067.8 646.7L1073.2 652L1073.6 656.2L1065.9 661.9L1059.9 656L1060.9 651.8ZM1026.7 630.5L1032 635.7L1032.3 639.9L1024.7 645.5L1018.8 639.7L1019.8 635.5ZM1078.1 656.8L1083.5 662.1L1083.9 666.3L1076.2 672L1070.2 666.1L1071.2 661.9ZM1036.8 640.5L1042.1 645.7L1042.5 649.9L1034.8 655.6L1028.9 649.7L1029.9 645.5ZM1088.5 666.9L1093.9 672.3L1094.3 676.5L1086.7 682.2L1080.6 676.3L1081.6 672.1ZM1046.9 650.5L1052.3 655.8L1052.6 660L1045 665.6L1039 659.8L1040 655.6ZM1008.5 636.8L1013.7 642L1014.1 646.2L1006.4 651.8L1000.6 646L1001.6 641.8ZM1098.9 677.2L1104.4 682.6L1104.8 686.8L1097.1 692.5L1091 686.5L1092 682.3ZM1057.1 660.6L1062.5 665.9L1062.9 670.1L1055.2 675.8L1049.2 669.9L1050.2 665.7ZM1018.4 646.6L1023.6 651.9L1024 656.1L1016.3 661.7L1010.5 655.9L1011.4 651.7ZM1109.5 687.5L1115 692.9L1115.4 697.1L1107.7 702.9L1101.5 696.9L1102.5 692.7ZM1067.4 670.7L1072.9 676.1L1073.3 680.3L1065.6 686L1059.5 680.1L1060.5 675.9ZM1028.3 656.5L1033.6 661.8L1034 666L1026.3 671.7L1020.4 665.8L1021.4 661.6ZM1120.1 697.8L1125.7 703.3L1126.1 707.5L1118.4 713.4L1112.1 707.3L1113.1 703.1ZM1077.8 681L1083.3 686.4L1083.7 690.6L1076 696.4L1069.9 690.3L1070.9 686.2ZM1038.3 666.5L1043.7 671.8L1044.1 676L1036.4 681.7L1030.4 675.8L1031.4 671.6ZM992.6 646.6L1002.3 656.4L1002.9 660.9L995.2 666.5L984.4 655.6L985.6 651.7ZM1130.8 708.3L1136.4 713.8L1136.8 718L1129.1 723.9L1122.8 717.8L1123.8 713.6ZM1088.3 691.3L1093.8 696.7L1094.2 700.9L1086.5 706.8L1080.3 700.7L1081.3 696.5ZM1048.4 676.5L1053.8 681.9L1054.2 686.1L1046.5 691.9L1040.5 685.9L1041.5 681.7ZM1007.2 662.1L1012.5 667.4L1012.8 671.6L1005.1 677.3L999.2 671.4L1000.2 667.2ZM1141.5 718.8L1147.2 724.4L1147.6 728.6L1139.9 734.5L1133.6 728.3L1134.6 724.1ZM1098.8 701.7L1104.4 707.2L1104.8 711.4L1097 717.2L1090.9 711.1L1091.9 706.9ZM1058.6 686.7L1064.1 692.1L1064.4 696.3L1056.7 702.1L1050.7 696L1051.6 691.9ZM1017.4 672.2L1022.7 677.5L1023.1 681.7L1015.3 687.5L1009.4 681.5L1010.4 677.3ZM1152.4 729.5L1158.1 735L1158.5 739.3L1150.8 745.2L1144.4 739L1145.4 734.8ZM1109.4 712.2L1115 717.7L1115.4 721.9L1107.7 727.8L1101.5 721.6L1102.5 717.4ZM1068.9 696.9L1074.3 702.3L1074.7 706.5L1067 712.4L1060.9 706.3L1061.9 702.1ZM1027.6 682.3L1033 687.7L1033.4 691.9L1025.6 697.7L1019.7 691.7L1020.6 687.5ZM1163.3 740.1L1169.1 745.8L1169.5 750L1161.8 756L1155.4 749.7L1156.4 745.5ZM1120.1 722.7L1125.8 728.3L1126.2 732.5L1118.4 738.4L1112.2 732.2L1113.2 728ZM1079.2 707.1L1084.7 712.6L1085.1 716.8L1077.3 722.7L1071.2 716.6L1072.2 712.4ZM1038 692.6L1043.4 698L1043.8 702.2L1036 708L1030 701.9L1031 697.8ZM1174.4 750.9L1180.2 756.6L1180.6 760.8L1172.8 766.9L1166.4 760.5L1167.4 756.3ZM992.2 674.3L997.5 679.6L997.9 683.9L990.1 689.6L984.2 683.6L985.2 679.4ZM1130.9 733.3L1136.6 738.9L1137 743.2L1129.2 749.1L1122.9 742.9L1123.9 738.7ZM1089.6 717.5L1095.1 723L1095.5 727.2L1087.8 733.1L1081.6 727L1082.6 722.8ZM1048.4 702.9L1053.8 708.3L1054.2 712.5L1046.4 718.4L1040.4 712.3L1041.4 708.1ZM1002.1 684.3L1007.4 689.7L1007.8 693.9L999.9 699.7L994.1 693.6L995 689.5ZM1141.8 744L1147.5 749.7L1147.9 753.9L1140.1 759.9L1133.8 753.6L1134.8 749.4ZM1100.1 727.9L1105.7 733.5L1106.1 737.7L1098.3 743.6L1092 737.4L1093 733.2ZM1058.9 713.3L1064.4 718.8L1064.8 723L1057 728.9L1050.9 722.7L1051.9 718.5ZM1196 772L1201.9 777.8L1202.3 782L1194.5 788.2L1187.9 781.7L1189 777.5ZM1110.6 738.4L1116.3 744L1116.7 748.3L1108.9 754.2L1102.6 748L1103.6 743.8ZM1069.5 723.7L1075 729.3L1075.4 733.5L1067.6 739.4L1061.4 733.2L1062.4 729ZM1121.3 749L1127 754.7L1127.4 758.9L1119.5 764.9L1113.2 758.6L1114.2 754.4ZM1171.1 772.5L1177 778.3L1177.4 782.5L1169.6 788.6L1163.1 782.2L1164.1 778ZM1080.1 734.3L1085.7 739.9L1086.1 744.1L1078.3 750L1072.1 743.8L1073.1 739.6ZM1159.5 759.3L1165.3 765.1L1166.6 768.6L1141.4 788.2L1135 781.7L1136.9 776.9ZM1132 759.7L1137.7 765.4L1138.1 769.6L1130.3 775.7L1123.9 769.3L1124.9 765.1ZM1182.2 783.1L1188.1 789L1188.5 793.2L1180.7 799.3L1174.2 792.8L1175.2 788.7ZM1090.9 744.9L1096.5 750.5L1096.9 754.7L1089 760.7L1082.8 754.5L1083.8 750.3ZM1016.4 701L1076.9 762.4L1080.3 768.6L1074.4 773.2L1007.3 704.7L1011.1 704.9ZM1101.7 755.6L1107.3 761.3L1107.8 765.5L1099.9 771.5L1093.6 765.2L1094.6 761ZM1112.6 766.4L1118.3 772.1L1118.7 776.3L1110.8 782.4L1104.5 776L1105.5 771.8ZM1162.3 789.9L1168.2 795.7L1168.6 799.9L1160.7 806.1L1154.2 799.6L1155.3 795.4ZM1122.5 776.3L1135.2 789.1L1136 793.7L1128.1 799.8L1114 785.6L1115.4 781.8ZM1085.9 768.8L1091.6 774.5L1092 778.7L1084.1 784.8L1077.8 778.4L1078.8 774.2ZM1140.9 796.8L1146.7 802.6L1147.1 806.9L1139.2 813L1132.7 806.5L1133.8 802.3ZM1151.8 806.6L1157.7 812.5L1158.1 816.7L1150.2 822.9L1143.6 816.4L1144.7 812.2ZM1130 813L1135.8 818.9L1136.3 823.1L1128.3 829.4L1121.8 822.8L1122.9 818.6Z" fill="#3a3834" stroke="#0c0c0c" stroke-width="0.8" stroke-linejoin="round"/>
<path d="M1035.8 618Q1037.3 617 1038.6 618.2L1041.3 620.8Q1042.6 622.1 1041.1 623.2L1037.2 626Q1035.8 627.1 1034.4 625.8L1031.8 623.2Q1030.5 621.9 1032 620.9ZM1045.9 627.9Q1047.4 626.8 1048.7 628.1L1051.4 630.7Q1052.7 632 1051.2 633.1L1047.4 635.9Q1045.9 637 1044.5 635.7L1041.9 633.1Q1040.6 631.8 1042.1 630.7ZM1056 637.8Q1057.6 636.7 1058.9 638L1061.6 640.7Q1062.9 642 1061.4 643.1L1057.5 645.9Q1056 647 1054.7 645.7L1052 643.1Q1050.7 641.8 1052.2 640.7ZM1066.3 647.8Q1067.8 646.7 1069.1 648L1071.8 650.7Q1073.2 652 1071.7 653.1L1067.8 656Q1066.3 657.1 1064.9 655.8L1062.3 653.1Q1060.9 651.8 1062.4 650.7ZM1025.2 631.6Q1026.7 630.5 1028 631.8L1030.6 634.4Q1032 635.7 1030.5 636.8L1026.6 639.7Q1025.1 640.8 1023.8 639.5L1021.1 636.9Q1019.8 635.5 1021.3 634.5ZM1076.6 657.9Q1078.1 656.8 1079.4 658.1L1082.2 660.8Q1083.5 662.1 1082 663.2L1078.2 666.1Q1076.6 667.2 1075.3 665.9L1072.6 663.2Q1071.2 661.9 1072.7 660.8ZM1035.3 641.6Q1036.8 640.5 1038.1 641.8L1040.7 644.4Q1042.1 645.7 1040.6 646.8L1036.7 649.7Q1035.2 650.8 1033.8 649.5L1031.2 646.8Q1029.9 645.5 1031.4 644.4ZM1086.9 668.1Q1088.5 666.9 1089.8 668.3L1092.6 671Q1093.9 672.3 1092.4 673.4L1088.6 676.3Q1087 677.5 1085.7 676.1L1082.9 673.4Q1081.6 672.1 1083.1 670.9ZM1045.4 651.6Q1046.9 650.5 1048.2 651.8L1050.9 654.4Q1052.3 655.8 1050.8 656.9L1046.9 659.7Q1045.4 660.9 1044 659.5L1041.3 656.9Q1040 655.6 1041.5 654.4ZM1007 637.9Q1008.5 636.8 1009.8 638.1L1012.4 640.7Q1013.7 642 1012.2 643.1L1008.3 645.9Q1006.8 647 1005.5 645.7L1002.9 643.1Q1001.6 641.8 1003.1 640.7ZM1097.4 678.3Q1098.9 677.2 1100.3 678.5L1103.1 681.2Q1104.4 682.6 1102.9 683.7L1099.1 686.6Q1097.5 687.8 1096.1 686.4L1093.4 683.7Q1092 682.3 1093.6 681.2ZM1055.6 661.7Q1057.1 660.6 1058.5 661.9L1061.2 664.6Q1062.5 665.9 1061 667L1057.1 669.9Q1055.6 671 1054.3 669.7L1051.6 667Q1050.2 665.7 1051.7 664.6ZM1016.9 647.7Q1018.4 646.6 1019.7 647.9L1022.3 650.5Q1023.6 651.9 1022.1 653L1018.2 655.8Q1016.7 656.9 1015.4 655.6L1012.8 653Q1011.4 651.7 1012.9 650.6ZM1107.9 688.6Q1109.5 687.5 1110.8 688.8L1113.6 691.5Q1115 692.9 1113.5 694.1L1109.6 697Q1108.1 698.1 1106.7 696.8L1103.9 694Q1102.5 692.7 1104.1 691.5ZM1065.9 671.9Q1067.4 670.7 1068.8 672.1L1071.5 674.7Q1072.9 676.1 1071.3 677.2L1067.5 680.1Q1065.9 681.3 1064.6 679.9L1061.9 677.2Q1060.5 675.9 1062.1 674.7ZM1026.8 657.6Q1028.3 656.5 1029.6 657.8L1032.3 660.5Q1033.6 661.8 1032.1 662.9L1028.2 665.8Q1026.7 666.9 1025.4 665.6L1022.7 662.9Q1021.4 661.6 1022.9 660.5ZM1118.5 699Q1120.1 697.8 1121.5 699.2L1124.3 702Q1125.7 703.3 1124.1 704.5L1120.3 707.4Q1118.7 708.6 1117.3 707.2L1114.5 704.5Q1113.1 703.1 1114.7 701.9ZM1076.3 682.1Q1077.8 681 1079.2 682.3L1081.9 685Q1083.3 686.4 1081.8 687.5L1077.9 690.4Q1076.4 691.6 1075 690.2L1072.3 687.5Q1070.9 686.2 1072.4 685ZM1036.8 667.6Q1038.3 666.5 1039.7 667.8L1042.4 670.5Q1043.7 671.8 1042.2 672.9L1038.3 675.8Q1036.7 677 1035.4 675.6L1032.7 672.9Q1031.4 671.6 1032.9 670.5ZM990.8 647.9Q992.6 646.6 994.1 648.1L1000.8 654.9Q1002.3 656.4 1000.6 657.7L997.1 660.2Q995.3 661.5 993.8 660L987.1 653.2Q985.6 651.7 987.4 650.4ZM1129.2 709.5Q1130.8 708.3 1132.2 709.7L1135 712.4Q1136.4 713.8 1134.8 715L1131 717.9Q1129.5 719.1 1128 717.7L1125.2 715Q1123.8 713.6 1125.4 712.4ZM1086.7 692.4Q1088.3 691.3 1089.7 692.6L1092.4 695.4Q1093.8 696.7 1092.3 697.9L1088.4 700.8Q1086.8 702 1085.5 700.6L1082.7 697.9Q1081.3 696.5 1082.9 695.3ZM1046.9 677.7Q1048.4 676.5 1049.8 677.9L1052.5 680.6Q1053.8 681.9 1052.3 683L1048.4 685.9Q1046.9 687.1 1045.5 685.7L1042.8 683Q1041.5 681.7 1043 680.6ZM1005.7 663.2Q1007.2 662.1 1008.5 663.4L1011.1 666.1Q1012.5 667.4 1010.9 668.5L1007 671.4Q1005.5 672.5 1004.2 671.2L1001.5 668.5Q1000.2 667.2 1001.7 666.1ZM1140 720Q1141.5 718.8 1143 720.2L1145.8 723Q1147.2 724.4 1145.6 725.6L1141.8 728.5Q1140.3 729.7 1138.8 728.3L1136 725.5Q1134.6 724.1 1136.2 722.9ZM1097.3 702.9Q1098.8 701.7 1100.2 703.1L1103 705.8Q1104.4 707.2 1102.8 708.3L1099 711.3Q1097.4 712.4 1096 711.1L1093.2 708.3Q1091.9 706.9 1093.4 705.8ZM1057.1 687.8Q1058.6 686.7 1060 688L1062.7 690.7Q1064.1 692.1 1062.5 693.2L1058.6 696.1Q1057.1 697.3 1055.7 695.9L1053 693.2Q1051.6 691.9 1053.2 690.7ZM1015.8 673.3Q1017.4 672.2 1018.7 673.5L1021.4 676.2Q1022.7 677.5 1021.2 678.6L1017.2 681.5Q1015.7 682.7 1014.4 681.3L1011.7 678.6Q1010.4 677.3 1011.9 676.2ZM1150.8 730.7Q1152.4 729.5 1153.8 730.9L1156.7 733.7Q1158.1 735 1156.5 736.3L1152.7 739.2Q1151.2 740.4 1149.7 739L1146.9 736.2Q1145.4 734.8 1147 733.6ZM1107.9 713.3Q1109.4 712.2 1110.8 713.5L1113.6 716.3Q1115 717.7 1113.5 718.9L1109.6 721.8Q1108.1 723 1106.7 721.6L1103.9 718.8Q1102.5 717.4 1104 716.2ZM1067.3 698Q1068.9 696.9 1070.2 698.2L1073 700.9Q1074.3 702.3 1072.8 703.5L1068.9 706.4Q1067.4 707.6 1066 706.2L1063.2 703.5Q1061.9 702.1 1063.4 700.9ZM1026.1 683.4Q1027.6 682.3 1029 683.7L1031.7 686.4Q1033 687.7 1031.5 688.8L1027.5 691.8Q1026 692.9 1024.7 691.6L1022 688.8Q1020.6 687.5 1022.2 686.4ZM1161.7 741.4Q1163.3 740.1 1164.8 741.6L1167.7 744.4Q1169.1 745.8 1167.5 747L1163.7 750Q1162.1 751.2 1160.7 749.8L1157.8 746.9Q1156.4 745.5 1158 744.3ZM1118.6 723.9Q1120.1 722.7 1121.5 724.1L1124.4 726.9Q1125.8 728.3 1124.2 729.5L1120.4 732.4Q1118.8 733.6 1117.4 732.2L1114.6 729.4Q1113.2 728 1114.7 726.8ZM1077.6 708.3Q1079.2 707.1 1080.6 708.5L1083.3 711.3Q1084.7 712.6 1083.2 713.8L1079.3 716.7Q1077.7 717.9 1076.3 716.5L1073.6 713.8Q1072.2 712.4 1073.7 711.2ZM1036.4 693.7Q1038 692.6 1039.3 693.9L1042 696.6Q1043.4 698 1041.8 699.1L1037.9 702.1Q1036.4 703.2 1035 701.8L1032.3 699.1Q1031 697.8 1032.5 696.6ZM1172.8 752.2Q1174.4 750.9 1175.8 752.3L1178.7 755.2Q1180.2 756.6 1178.6 757.9L1174.8 760.8Q1173.2 762 1171.7 760.6L1168.8 757.8Q1167.4 756.3 1169 755.1ZM990.7 675.4Q992.2 674.3 993.5 675.6L996.2 678.3Q997.5 679.6 996 680.8L992 683.7Q990.5 684.8 989.2 683.5L986.5 680.8Q985.2 679.4 986.7 678.3ZM1129.3 734.5Q1130.9 733.3 1132.3 734.7L1135.2 737.5Q1136.6 738.9 1135 740.2L1131.2 743.1Q1129.6 744.3 1128.2 742.9L1125.3 740.1Q1123.9 738.7 1125.5 737.5ZM1088 718.7Q1089.6 717.5 1091 718.9L1093.8 721.6Q1095.1 723 1093.6 724.2L1089.7 727.1Q1088.1 728.3 1086.7 726.9L1084 724.2Q1082.6 722.8 1084.1 721.6ZM1046.8 704Q1048.4 702.9 1049.8 704.2L1052.5 707Q1053.8 708.3 1052.3 709.5L1048.4 712.4Q1046.8 713.6 1045.5 712.2L1042.7 709.5Q1041.4 708.1 1042.9 706.9ZM1000.5 685.4Q1002.1 684.3 1003.4 685.6L1006 688.3Q1007.4 689.7 1005.8 690.8L1001.9 693.7Q1000.3 694.9 999 693.5L996.4 690.8Q995 689.5 996.6 688.3ZM1140.2 745.3Q1141.8 744 1143.2 745.5L1146.1 748.3Q1147.5 749.7 1145.9 750.9L1142.1 753.9Q1140.5 755.1 1139.1 753.7L1136.2 750.9Q1134.8 749.4 1136.4 748.2ZM1098.5 729.1Q1100.1 727.9 1101.5 729.3L1104.3 732.1Q1105.7 733.5 1104.1 734.7L1100.2 737.6Q1098.6 738.8 1097.2 737.4L1094.4 734.6Q1093 733.2 1094.6 732ZM1057.3 714.4Q1058.9 713.3 1060.3 714.6L1063 717.4Q1064.4 718.8 1062.8 719.9L1058.9 722.9Q1057.3 724.1 1056 722.7L1053.2 719.9Q1051.9 718.5 1053.4 717.4ZM1194.3 773.3Q1196 772 1197.4 773.5L1200.4 776.4Q1201.9 777.8 1200.3 779.1L1196.5 782Q1194.9 783.3 1193.4 781.9L1190.4 779Q1189 777.5 1190.6 776.3ZM1109 739.6Q1110.6 738.4 1112 739.8L1114.9 742.6Q1116.3 744 1114.7 745.3L1110.8 748.2Q1109.2 749.4 1107.8 748L1105 745.2Q1103.6 743.8 1105.2 742.6ZM1067.9 724.9Q1069.5 723.7 1070.9 725.1L1073.6 727.9Q1075 729.3 1073.4 730.5L1069.5 733.4Q1068 734.6 1066.6 733.2L1063.8 730.4Q1062.4 729 1064 727.8ZM1119.7 750.2Q1121.3 749 1122.7 750.4L1125.5 753.3Q1127 754.7 1125.4 755.9L1121.5 758.9Q1119.9 760.1 1118.5 758.7L1115.6 755.8Q1114.2 754.4 1115.8 753.2ZM1169.5 773.8Q1171.1 772.5 1172.6 774L1175.5 776.9Q1177 778.3 1175.4 779.6L1171.6 782.5Q1169.9 783.8 1168.5 782.3L1165.6 779.5Q1164.1 778 1165.7 776.7ZM1078.6 735.5Q1080.1 734.3 1081.5 735.7L1084.3 738.5Q1085.7 739.9 1084.1 741.1L1080.2 744Q1078.6 745.2 1077.2 743.8L1074.5 741Q1073.1 739.6 1074.6 738.4ZM1157.9 760.6Q1159.5 759.3 1161 760.8L1163.9 763.6Q1165.3 765.1 1163.7 766.3L1144.3 781.4Q1142.7 782.6 1141.2 781.2L1138.3 778.3Q1136.9 776.9 1138.5 775.6ZM1130.4 760.9Q1132 759.7 1133.4 761.1L1136.3 764Q1137.7 765.4 1136.1 766.6L1132.3 769.6Q1130.7 770.8 1129.2 769.4L1126.4 766.5Q1124.9 765.1 1126.5 763.9ZM1180.6 784.4Q1182.2 783.1 1183.7 784.6L1186.7 787.5Q1188.1 789 1186.5 790.2L1182.7 793.2Q1181.1 794.5 1179.6 793L1176.7 790.1Q1175.2 788.7 1176.8 787.4ZM1089.3 746.1Q1090.9 744.9 1092.3 746.3L1095.1 749.1Q1096.5 750.5 1094.9 751.7L1091 754.7Q1089.4 755.9 1088 754.5L1085.2 751.7Q1083.8 750.3 1085.4 749.1ZM1015.1 701.9Q1016.4 701 1017.6 702.1L1075.7 761.2Q1076.9 762.4 1075.6 763.4L1072.9 765.4Q1071.6 766.4 1070.4 765.3L1012.3 706Q1011.1 704.9 1012.4 703.9ZM1100.1 756.8Q1101.7 755.6 1103.1 757L1105.9 759.9Q1107.3 761.3 1105.8 762.5L1101.9 765.5Q1100.3 766.7 1098.8 765.3L1096 762.4Q1094.6 761 1096.2 759.8ZM1111 767.6Q1112.6 766.4 1114 767.8L1116.9 770.7Q1118.3 772.1 1116.7 773.3L1112.8 776.3Q1111.2 777.6 1109.8 776.1L1106.9 773.3Q1105.5 771.8 1107.1 770.6ZM1160.7 791.2Q1162.3 789.9 1163.8 791.4L1166.7 794.3Q1168.2 795.7 1166.6 797L1162.7 800Q1161.1 801.3 1159.6 799.8L1156.7 796.9Q1155.3 795.4 1156.9 794.2ZM1120.7 777.7Q1122.5 776.3 1124.1 777.9L1133.6 787.5Q1135.2 789.1 1133.4 790.5L1129.8 793.2Q1128.1 794.6 1126.5 793L1117 783.4Q1115.4 781.8 1117.2 780.5ZM1084.3 770Q1085.9 768.8 1087.3 770.2L1090.2 773.1Q1091.6 774.5 1090 775.7L1086 778.7Q1084.5 780 1083 778.5L1080.2 775.7Q1078.8 774.2 1080.4 773ZM1139.3 798.1Q1140.9 796.8 1142.3 798.3L1145.2 801.2Q1146.7 802.6 1145.1 803.9L1141.2 806.9Q1139.6 808.2 1138.1 806.7L1135.2 803.8Q1133.8 802.3 1135.4 801.1ZM1150.2 807.9Q1151.8 806.6 1153.3 808.1L1156.2 811Q1157.7 812.5 1156 813.8L1152.2 816.8Q1150.5 818.1 1149.1 816.6L1146.1 813.7Q1144.7 812.2 1146.3 810.9ZM1128.4 814.3Q1130 813 1131.5 814.5L1134.4 817.4Q1135.8 818.9 1134.2 820.2L1130.3 823.3Q1128.7 824.5 1127.2 823L1124.3 820.1Q1122.9 818.6 1124.5 817.3Z" fill="#8c867b" stroke="#0c0c0c" stroke-width="0.7"/><polygon points="938.1,668.9 1125.6,861.5 1026.2,938.2 844.9,735.6" fill="#000" opacity=".2" filter="url(#blur5)"/>
<polygon points="831.9,726.6 1013.2,929.2 1112.6,852.5 1112.6,854.7 1013.2,931.4 831.9,728.8" fill="#4b4843" stroke="#141414" stroke-width="1.0" stroke-linejoin="round" />
<polygon points="925.1,659.9 1112.6,852.5 1013.2,929.2 831.9,726.6" fill="url(#gPlate1)" stroke="#141414" stroke-width="1.0" stroke-linejoin="round" />
<path d="M920.9 677.2Q924.2 674.8 927.1 677.7L930.9 681.7Q933.8 684.7 930.4 687.1L923.6 692Q920.2 694.5 917.4 691.5L913.6 687.5Q910.7 684.5 914.1 682ZM930.5 687.3Q933.9 684.8 936.8 687.8L940.7 691.8Q943.6 694.8 940.2 697.3L933.4 702.2Q930 704.7 927.1 701.7L923.3 697.6Q920.4 694.6 923.8 692.1ZM940.3 697.4Q943.7 695 946.7 698L950.6 702.1Q953.5 705.1 950.1 707.6L943.3 712.6Q939.9 715 937 712L933 707.9Q930.1 704.8 933.5 702.4ZM950.2 707.7Q953.6 705.2 956.6 708.3L960.6 712.5Q963.5 715.5 960.1 718L953.2 723Q949.8 725.5 946.9 722.5L942.9 718.2Q940 715.2 943.4 712.7ZM960.3 718.1Q963.7 715.6 966.6 718.6L970.7 722.9Q973.7 726 970.3 728.5L963.3 733.6Q959.9 736.1 957 733L952.8 728.7Q950 725.6 953.3 723.1ZM970.4 728.6Q973.8 726.1 976.7 729.1L981 733.5Q983.9 736.6 980.5 739L973.5 744.2Q970.1 746.7 967.2 743.7L962.9 739.2Q960 736.2 963.4 733.7ZM980.6 739.2Q984 736.7 986.9 739.7L991.3 744.2Q994.2 747.3 990.8 749.8L983.7 755Q980.4 757.5 977.5 754.5L973.1 749.9Q970.2 746.9 973.6 744.4ZM991 749.9Q994.3 747.4 997.3 750.4L1001.7 755.1Q1004.6 758.1 1001.3 760.6L994.1 765.9Q990.7 768.4 987.8 765.4L983.4 760.7Q980.5 757.6 983.9 755.1ZM1001.4 760.7Q1004.8 758.2 1007.7 761.2L1012.3 766Q1015.2 769 1011.8 771.5L1004.6 776.9Q1001.2 779.4 998.3 776.4L993.8 771.6Q990.9 768.5 994.2 766ZM1012 771.7Q1015.3 769.2 1018.3 772.2L1023 777Q1025.9 780.1 1022.5 782.6L1015.2 788Q1011.9 790.6 1009 787.5L1004.3 782.6Q1001.4 779.6 1004.7 777ZM1022.6 782.7Q1026 780.2 1028.9 783.2L1033.7 788.2Q1036.7 791.2 1033.3 793.8L1026 799.3Q1022.6 801.8 1019.7 798.8L1014.9 793.7Q1012 790.7 1015.4 788.2ZM1033.4 793.9Q1036.8 791.4 1039.7 794.4L1044.6 799.5Q1047.6 802.5 1044.2 805.1L1036.8 810.7Q1033.4 813.2 1030.5 810.1L1025.6 805Q1022.7 801.9 1026.1 799.4ZM1044.3 805.2Q1047.7 802.7 1050.6 805.7L1055.7 810.9Q1058.6 813.9 1055.2 816.5L1047.8 822.1Q1044.4 824.7 1041.5 821.6L1036.5 816.4Q1033.6 813.3 1036.9 810.8ZM1055.4 816.6Q1058.7 814.1 1061.6 817.1L1066.8 822.5Q1069.7 825.5 1066.4 828L1058.8 833.8Q1055.5 836.3 1052.6 833.3L1047.4 827.9Q1044.5 824.8 1047.9 822.3ZM1077.1 839.1Q1080.4 836.6 1083.3 839.6L1088.7 845.2Q1091.7 848.2 1088.3 850.8L1080.7 856.7Q1077.3 859.2 1074.4 856.2L1069.1 850.5Q1066.2 847.5 1069.5 844.9ZM909.6 691Q912.9 688.6 915.8 691.6L919.6 695.6Q922.5 698.7 919.1 701.1L912.2 706.1Q908.9 708.5 906 705.5L902.2 701.4Q899.3 698.4 902.7 696ZM919.2 701.2Q922.6 698.8 925.5 701.8L929.4 705.9Q932.3 708.9 928.9 711.4L922 716.4Q918.6 718.9 915.7 715.8L911.9 711.7Q909 708.6 912.4 706.2ZM929 711.5Q932.4 709.1 935.3 712.1L939.3 716.3Q942.2 719.3 938.8 721.8L931.8 726.8Q928.4 729.3 925.6 726.3L921.6 722.1Q918.7 719 922.1 716.5ZM938.9 721.9Q942.3 719.4 945.2 722.5L949.3 726.8Q952.2 729.8 948.8 732.3L941.8 737.4Q938.4 739.9 935.5 736.8L931.4 732.5Q928.6 729.5 932 727ZM948.9 732.4Q952.3 729.9 955.2 733L959.4 737.4Q962.3 740.4 958.9 742.9L951.8 748.1Q948.4 750.6 945.6 747.5L941.4 743.1Q938.5 740 941.9 737.5ZM959 743Q962.4 740.5 965.3 743.6L969.6 748.1Q972.5 751.1 969.1 753.6L962 758.9Q958.6 761.4 955.7 758.3L951.4 753.8Q948.6 750.7 951.9 748.2ZM969.2 753.7Q972.6 751.3 975.5 754.3L979.9 758.9Q982.8 761.9 979.4 764.4L972.2 769.8Q968.9 772.3 966 769.2L961.6 764.6Q958.7 761.5 962.1 759ZM979.6 764.6Q982.9 762.1 985.8 765.1L990.3 769.8Q993.2 772.9 989.9 775.4L982.6 780.8Q979.2 783.3 976.4 780.2L971.9 775.5Q969 772.4 972.4 769.9ZM990 775.5Q993.4 773 996.3 776.1L1000.9 780.9Q1003.8 783.9 1000.4 786.5L993.1 791.9Q989.7 794.4 986.8 791.4L982.2 786.5Q979.4 783.4 982.7 780.9ZM1000.5 786.6Q1003.9 784.1 1006.8 787.1L1011.5 792.1Q1014.4 795.1 1011.1 797.6L1003.7 803.2Q1000.3 805.7 997.4 802.6L992.7 797.6Q989.9 794.6 993.2 792.1ZM1011.2 797.8Q1014.5 795.3 1017.4 798.3L1022.3 803.4Q1025.2 806.4 1021.8 809L1014.4 814.6Q1011 817.1 1008.2 814L1003.3 808.9Q1000.5 805.8 1003.8 803.3ZM1022 809.1Q1025.3 806.6 1028.2 809.6L1033.2 814.8Q1036.1 817.9 1032.7 820.4L1025.2 826.1Q1021.9 828.6 1019 825.5L1014 820.3Q1011.2 817.2 1014.5 814.7ZM1051.3 839.3Q1054.6 836.8 1057.5 839.8L1062.8 845.4Q1065.7 848.4 1062.4 851L1054.7 856.8Q1051.4 859.4 1048.5 856.3L1043.2 850.7Q1040.3 847.7 1043.7 845.1ZM1062.4 850.7Q1065.8 848.1 1068.7 851.2L1074.1 856.8Q1077 859.9 1073.6 862.4L1065.9 868.4Q1062.6 870.9 1059.7 867.9L1054.3 862.2Q1051.4 859.1 1054.8 856.6ZM891 697.4Q894.4 695 897.2 698L901 702Q903.9 705.1 900.5 707.5L893.6 712.5Q890.2 714.9 887.4 711.9L883.6 707.8Q880.8 704.8 884.1 702.4ZM900.5 707.5Q903.9 705 906.7 708.1L910.6 712.2Q913.4 715.2 910 717.7L903.1 722.7Q899.7 725.2 896.8 722.1L893 718Q890.2 714.9 893.6 712.5ZM910 717.7Q913.4 715.2 916.3 718.3L920.2 722.4Q923.1 725.5 919.7 728L912.7 733Q909.3 735.5 906.4 732.4L902.5 728.2Q899.7 725.2 903.1 722.7ZM919.7 727.9Q923.1 725.5 926 728.5L930 732.8Q932.8 735.9 929.5 738.3L922.4 743.5Q919 746 916.2 742.9L912.1 738.6Q909.3 735.5 912.7 733ZM929.4 738.3Q932.8 735.8 935.7 738.9L939.8 743.3Q942.7 746.3 939.3 748.8L932.2 754Q928.8 756.5 926 753.4L921.9 749Q919 745.9 922.4 743.5ZM939.3 748.8Q942.7 746.3 945.6 749.4L949.8 753.9Q952.7 756.9 949.3 759.4L942.1 764.7Q938.7 767.2 935.9 764.1L931.7 759.6Q928.8 756.5 932.2 754ZM949.3 759.4Q952.6 756.9 955.5 760L959.8 764.6Q962.7 767.6 959.3 770.1L952.1 775.5Q948.7 778 945.9 774.9L941.6 770.2Q938.7 767.2 942.1 764.7ZM959.3 770.1Q962.7 767.6 965.6 770.7L970 775.4Q972.9 778.5 969.5 781L962.2 786.4Q958.9 788.9 956 785.8L951.6 781Q948.7 778 952.1 775.5ZM969.5 780.9Q972.9 778.4 975.8 781.5L980.3 786.3Q983.2 789.4 979.8 791.9L972.5 797.4Q969.1 799.9 966.2 796.8L961.7 791.9Q958.8 788.8 962.2 786.3ZM979.8 791.9Q983.2 789.4 986 792.4L990.7 797.4Q993.6 800.4 990.2 802.9L982.8 808.5Q979.4 811 976.6 807.9L971.9 802.9Q969.1 799.9 972.4 797.3ZM990.2 802.9Q993.5 800.4 996.4 803.5L1001.2 808.5Q1004.1 811.6 1000.7 814.1L993.2 819.7Q989.9 822.3 987 819.2L982.3 814.1Q979.4 811 982.8 808.5ZM1000.7 814.1Q1004 811.6 1006.9 814.6L1011.8 819.8Q1014.7 822.9 1011.3 825.4L1003.8 831.1Q1000.4 833.6 997.6 830.5L992.7 825.3Q989.8 822.2 993.2 819.7ZM1011.3 825.4Q1014.6 822.9 1017.5 825.9L1022.5 831.2Q1025.4 834.3 1022 836.8L1014.4 842.6Q1011.1 845.1 1008.2 842L1003.3 836.7Q1000.4 833.6 1003.8 831.1ZM1041.6 857.6Q1044.9 855 1047.8 858.1L1053.1 863.7Q1056 866.8 1052.6 869.4L1044.9 875.3Q1041.5 877.9 1038.7 874.8L1033.4 869.1Q1030.5 866 1033.8 863.5ZM874.4 707.2Q877.8 704.8 880.6 707.9L889.1 717Q892 720.1 888.6 722.6L881.6 727.6Q878.2 730.1 875.4 727L866.9 717.7Q864.1 714.6 867.5 712.2ZM888.5 723.3Q891.9 720.9 894.8 724L898.6 728.1Q901.5 731.2 898.1 733.6L891.1 738.7Q887.7 741.2 884.8 738.1L881 733.9Q878.1 730.8 881.6 728.4ZM898.3 733.7Q901.7 731.2 904.6 734.3L908.5 738.6Q911.4 741.7 908 744.1L900.9 749.3Q897.5 751.8 894.6 748.7L890.7 744.4Q887.9 741.3 891.3 738.8ZM908.2 744.2Q911.6 741.7 914.4 744.8L918.5 749.2Q921.3 752.3 917.9 754.7L910.8 760Q907.4 762.4 904.6 759.3L900.5 754.9Q897.7 751.8 901.1 749.4ZM918.2 754.8Q921.6 752.3 924.4 755.4L928.6 759.9Q931.4 763 928 765.4L920.8 770.7Q917.4 773.2 914.6 770.1L910.5 765.6Q907.6 762.5 911 760ZM928.3 765.5Q931.6 763 934.5 766.1L938.8 770.7Q941.6 773.8 938.2 776.3L931 781.6Q927.6 784.1 924.7 781L920.5 776.4Q917.7 773.3 921 770.8ZM938.5 776.3Q941.8 773.8 944.7 776.9L949.1 781.6Q951.9 784.7 948.5 787.2L941.2 792.6Q937.8 795.1 935 792L930.6 787.3Q927.8 784.2 931.2 781.7ZM948.8 787.3Q952.1 784.8 955 787.9L959.5 792.7Q962.3 795.8 959 798.3L951.6 803.8Q948.2 806.3 945.4 803.2L940.9 798.3Q938.1 795.2 941.4 792.7ZM959.2 798.3Q962.5 795.8 965.4 798.9L970 803.8Q972.8 806.9 969.5 809.4L962 815Q958.7 817.5 955.8 814.4L951.2 809.4Q948.4 806.3 951.8 803.8ZM969.7 809.5Q973.1 807 975.9 810.1L980.6 815.1Q983.5 818.2 980.1 820.7L972.6 826.4Q969.2 828.9 966.4 825.8L961.7 820.7Q958.9 817.6 962.2 815.1ZM980.3 820.8Q983.7 818.3 986.6 821.4L991.4 826.5Q994.2 829.6 990.9 832.2L983.3 837.9Q979.9 840.4 977.1 837.3L972.3 832.1Q969.5 829 972.8 826.4ZM991.1 832.2Q994.5 829.7 997.3 832.8L1002.2 838.1Q1005.1 841.2 1001.7 843.7L994.1 849.5Q990.8 852 987.9 848.9L983 843.6Q980.2 840.5 983.5 837.9ZM1000.5 842.4Q1003.9 839.9 1006.7 842.9L1019.5 856.6Q1022.3 859.7 1019 862.3L1011.2 868.2Q1007.9 870.7 1005 867.6L992.4 853.8Q989.5 850.7 992.9 848.2ZM1019.1 864.6Q1022.4 862 1025.3 865.1L1030.5 870.8Q1033.4 873.8 1030.1 876.4L1022.2 882.4Q1018.9 884.9 1016.1 881.8L1010.8 876.1Q1008 873 1011.3 870.5ZM1030 875.1Q1033.4 872.6 1036.2 875.6L1041.6 881.4Q1044.4 884.5 1041.1 887L1033.2 893.1Q1029.9 895.7 1027.1 892.6L1021.7 886.7Q1018.9 883.6 1022.2 881.1ZM873 735.8Q876.4 733.4 879.2 736.5L883 740.7Q885.9 743.8 882.5 746.2L875.4 751.4Q872 753.8 869.2 750.7L865.3 746.5Q862.5 743.4 865.9 740.9ZM882.4 746.1Q885.8 743.6 888.6 746.7L892.5 751.1Q895.4 754.2 892 756.6L884.8 761.9Q881.4 764.3 878.6 761.2L874.7 756.9Q871.9 753.7 875.3 751.3ZM894.1 758.3Q897.5 755.8 900.4 758.9L964.2 828.8Q967 831.9 963.7 834.4L956.1 840.1Q952.7 842.6 949.9 839.5L886.4 769.1Q883.6 766 887 763.5ZM963.7 834.4Q967.1 831.9 969.9 835L974.7 840.3Q977.5 843.4 974.2 845.9L966.5 851.7Q963.1 854.2 960.3 851.1L955.5 845.8Q952.7 842.6 956.1 840.1ZM1007.3 881.6Q1010.6 879 1013.4 882.1L1018.7 887.9Q1021.5 891 1018.2 893.5L1010.3 899.6Q1007 902.2 1004.1 899L998.9 893.2Q996.1 890.1 999.4 887.6ZM1040.6 824.6Q1044 822.1 1046.9 825.1L1052 830.5Q1054.9 833.6 1051.6 836.1L1025.5 856Q1022.2 858.5 1019.3 855.4L1014.2 849.9Q1011.3 846.8 1014.7 844.3Z" fill="#8a8479" stroke="#0c0c0c" stroke-width="1.2"/>
<path d="M921.7 679.4Q923.7 678 925.4 679.8L928.9 683.3Q930.6 685.1 928.6 686.6L922.8 690.8Q920.8 692.2 919 690.4L915.6 686.8Q913.9 685 915.9 683.6ZM931.4 689.5Q933.4 688.1 935.2 689.9L938.6 693.5Q940.4 695.3 938.4 696.8L932.5 701Q930.5 702.4 928.8 700.6L925.3 697Q923.6 695.2 925.6 693.7ZM941.2 699.7Q943.2 698.2 945 700.1L948.5 703.7Q950.3 705.5 948.2 707L942.4 711.3Q940.4 712.7 938.6 710.9L935.1 707.2Q933.4 705.4 935.4 703.9ZM951.1 710Q953.2 708.5 954.9 710.4L958.5 714.1Q960.3 715.9 958.2 717.4L952.4 721.7Q950.3 723.2 948.5 721.3L945 717.6Q943.2 715.8 945.3 714.2ZM961.1 720.5Q963.2 718.9 965 720.8L968.6 724.5Q970.4 726.4 968.3 727.9L962.5 732.2Q960.4 733.7 958.6 731.8L955 728.1Q953.2 726.2 955.3 724.7ZM971.2 731Q973.3 729.4 975.1 731.3L978.8 735.1Q980.6 737 978.5 738.5L972.7 742.8Q970.5 744.3 968.7 742.5L965.1 738.7Q963.3 736.8 965.4 735.2ZM981.4 741.6Q983.5 740.1 985.4 742L989 745.8Q990.9 747.7 988.7 749.2L982.9 753.5Q980.8 755.1 979 753.2L975.3 749.4Q973.5 747.4 975.6 745.9ZM991.7 752.4Q993.9 750.8 995.7 752.7L999.4 756.6Q1001.3 758.5 999.2 760.1L993.4 764.4Q991.2 766 989.4 764L985.7 760.2Q983.8 758.2 986 756.6ZM1002.2 763.2Q1004.3 761.6 1006.2 763.6L1010 767.5Q1011.8 769.4 1009.7 771L1003.9 775.3Q1001.7 777 999.8 775L996.1 771.1Q994.2 769.1 996.4 767.5ZM1012.7 774.2Q1014.9 772.6 1016.8 774.6L1020.6 778.5Q1022.5 780.5 1020.3 782.1L1014.5 786.4Q1012.3 788.1 1010.4 786.1L1006.6 782.1Q1004.8 780.2 1006.9 778.5ZM1023.4 785.3Q1025.6 783.7 1027.5 785.7L1031.3 789.6Q1033.2 791.6 1031 793.3L1025.2 797.6Q1023 799.3 1021.1 797.3L1017.3 793.3Q1015.4 791.3 1017.6 789.6ZM1034.1 796.6Q1036.4 794.9 1038.3 796.9L1042.2 800.9Q1044.1 802.9 1041.9 804.6L1036.1 809Q1033.9 810.6 1031.9 808.6L1028.1 804.6Q1026.2 802.6 1028.4 800.9ZM1045 807.9Q1047.3 806.2 1049.2 808.2L1053.1 812.3Q1055.1 814.3 1052.9 816L1047.1 820.4Q1044.8 822.1 1042.9 820.1L1039 816Q1037 813.9 1039.3 812.2ZM1056 819.4Q1058.3 817.7 1060.3 819.7L1064.2 823.8Q1066.2 825.9 1064 827.6L1058.2 832Q1055.9 833.7 1053.9 831.6L1050 827.5Q1048 825.5 1050.3 823.7ZM1077.7 842Q1080 840.2 1082.1 842.3L1086.1 846.5Q1088.1 848.6 1085.8 850.4L1080 854.8Q1077.7 856.6 1075.7 854.4L1071.7 850.2Q1069.7 848.1 1072 846.3ZM910.4 693.3Q912.4 691.9 914.1 693.7L917.6 697.3Q919.3 699.1 917.3 700.5L911.4 704.8Q909.4 706.2 907.7 704.4L904.2 700.8Q902.5 699 904.6 697.5ZM920.1 703.5Q922.1 702 923.8 703.9L927.3 707.5Q929.1 709.4 927 710.8L921.2 715.1Q919.1 716.6 917.4 714.7L913.9 711.1Q912.2 709.2 914.2 707.7ZM929.8 713.8Q931.9 712.4 933.7 714.2L937.2 717.9Q938.9 719.7 936.9 721.2L931 725.5Q929 727 927.2 725.1L923.7 721.4Q922 719.6 924 718.1ZM939.7 724.3Q941.8 722.8 943.6 724.6L947.1 728.4Q948.9 730.2 946.8 731.7L941 736Q938.9 737.5 937.1 735.7L933.6 731.9Q931.8 730 933.9 728.5ZM949.7 734.8Q951.8 733.3 953.6 735.2L957.2 738.9Q959 740.8 956.9 742.4L951 746.6Q948.9 748.2 947.1 746.3L943.6 742.5Q941.8 740.6 943.9 739.1ZM959.8 745.5Q961.9 743.9 963.7 745.8L967.4 749.6Q969.2 751.5 967 753.1L961.2 757.4Q959.1 759 957.3 757L953.7 753.2Q951.9 751.3 954 749.7ZM970 756.2Q972.1 754.6 974 756.6L977.6 760.4Q979.5 762.3 977.3 763.9L971.5 768.2Q969.3 769.8 967.5 767.9L963.9 764Q962 762.1 964.2 760.5ZM980.3 767.1Q982.5 765.5 984.3 767.4L988 771.3Q989.9 773.3 987.7 774.9L981.9 779.2Q979.7 780.8 977.9 778.9L974.2 775Q972.3 773 974.5 771.4ZM990.7 778.1Q992.9 776.5 994.8 778.4L998.5 782.4Q1000.4 784.3 998.2 786L992.4 790.3Q990.2 791.9 988.3 790L984.6 786Q982.7 784 984.9 782.4ZM1001.2 789.2Q1003.4 787.6 1005.3 789.6L1009.1 793.5Q1011 795.5 1008.8 797.2L1003 801.5Q1000.8 803.2 998.9 801.2L995.1 797.2Q993.2 795.2 995.4 793.5ZM1011.9 800.4Q1014.1 798.8 1016 800.8L1019.8 804.8Q1021.7 806.8 1019.5 808.5L1013.7 812.9Q1011.5 814.5 1009.6 812.5L1005.8 808.5Q1003.9 806.5 1006.1 804.8ZM1022.6 811.8Q1024.9 810.1 1026.8 812.1L1030.7 816.2Q1032.6 818.2 1030.4 819.9L1024.5 824.3Q1022.3 826 1020.4 824L1016.5 819.9Q1014.6 817.8 1016.8 816.2ZM1051.9 842.2Q1054.2 840.4 1056.2 842.5L1060.2 846.7Q1062.2 848.8 1059.9 850.5L1054.1 855Q1051.8 856.7 1049.8 854.6L1045.8 850.4Q1043.8 848.3 1046.1 846.6ZM1063 853.6Q1065.4 851.8 1067.4 853.9L1071.4 858.1Q1073.4 860.2 1071.1 862L1065.3 866.5Q1063 868.2 1061 866.1L1057 861.9Q1055 859.7 1057.3 858ZM891.8 699.7Q893.9 698.2 895.6 700L899 703.7Q900.7 705.5 898.7 706.9L892.8 711.2Q890.7 712.6 889 710.8L885.6 707.2Q884 705.4 886 703.9ZM901.3 709.8Q903.3 708.3 905 710.1L908.5 713.8Q910.2 715.6 908.2 717.1L902.3 721.4Q900.2 722.9 898.5 721L895.1 717.3Q893.4 715.5 895.4 714ZM910.8 720Q912.9 718.5 914.6 720.4L918.1 724.1Q919.8 725.9 917.8 727.4L911.9 731.7Q909.8 733.2 908.1 731.3L904.6 727.6Q902.9 725.7 905 724.2ZM920.5 730.3Q922.6 728.8 924.3 730.7L927.8 734.4Q929.6 736.3 927.5 737.8L921.6 742.1Q919.5 743.6 917.8 741.7L914.3 738Q912.5 736.1 914.6 734.6ZM930.2 740.7Q932.3 739.2 934.1 741.1L937.6 744.9Q939.4 746.8 937.3 748.3L931.4 752.6Q929.3 754.1 927.6 752.2L924 748.4Q922.3 746.5 924.4 745ZM940.1 751.3Q942.2 749.7 944 751.6L947.6 755.4Q949.4 757.3 947.2 758.9L941.4 763.2Q939.2 764.8 937.5 762.9L933.9 759Q932.1 757.1 934.2 755.5ZM950 761.9Q952.1 760.3 954 762.3L957.6 766.1Q959.4 768 957.3 769.6L951.4 774Q949.2 775.5 947.4 773.6L943.8 769.7Q942 767.8 944.2 766.2ZM960.1 772.6Q962.2 771 964 773L967.7 776.9Q969.5 778.9 967.4 780.4L961.5 784.8Q959.4 786.4 957.5 784.4L953.9 780.5Q952.1 778.6 954.2 777ZM970.2 783.5Q972.4 781.9 974.2 783.9L977.9 787.8Q979.8 789.8 977.6 791.4L971.7 795.8Q969.6 797.4 967.7 795.4L964 791.4Q962.2 789.5 964.4 787.8ZM980.5 794.5Q982.7 792.8 984.5 794.8L988.3 798.8Q990.2 800.8 988 802.5L982.1 806.8Q979.9 808.5 978 806.5L974.3 802.5Q972.4 800.5 974.6 798.8ZM990.9 805.6Q993.1 803.9 995 805.9L998.7 810Q1000.6 812 998.4 813.6L992.5 818Q990.3 819.7 988.5 817.7L984.7 813.6Q982.8 811.6 985 809.9ZM1001.3 816.8Q1003.6 815.1 1005.5 817.1L1009.3 821.2Q1011.2 823.3 1009 824.9L1003.1 829.4Q1000.9 831 999 829L995.2 824.9Q993.3 822.9 995.5 821.2ZM1011.9 828.1Q1014.2 826.4 1016.1 828.5L1020 832.6Q1021.9 834.7 1019.7 836.4L1013.8 840.8Q1011.6 842.5 1009.6 840.4L1005.8 836.3Q1003.9 834.2 1006.1 832.5ZM1042.2 860.4Q1044.5 858.7 1046.5 860.8L1050.4 865Q1052.4 867.2 1050.1 868.9L1044.3 873.4Q1042 875.2 1040 873.1L1036 868.8Q1034 866.7 1036.3 864.9ZM874.7 709.8Q877.2 708 879.3 710.3L886.7 718.3Q888.8 720.5 886.3 722.3L881.3 725.9Q878.8 727.7 876.7 725.5L869.3 717.5Q867.3 715.2 869.8 713.4ZM889.3 725.7Q891.4 724.2 893.1 726L896.5 729.7Q898.2 731.6 896.2 733.1L890.3 737.4Q888.2 738.9 886.5 737L883.1 733.3Q881.4 731.4 883.4 729.9ZM899.1 736.1Q901.2 734.6 902.9 736.4L906.4 740.2Q908.1 742.1 906 743.6L900.1 747.9Q898 749.4 896.3 747.5L892.8 743.8Q891.1 741.9 893.2 740.4ZM909 746.6Q911 745.1 912.8 747L916.3 750.8Q918.1 752.7 916 754.2L910 758.5Q908 760.1 906.2 758.1L902.7 754.3Q901 752.4 903.1 750.9ZM918.9 757.2Q921 755.7 922.8 757.6L926.3 761.4Q928.1 763.4 926 764.9L920.1 769.3Q918 770.8 916.2 768.9L912.7 765Q910.9 763.1 913 761.6ZM929 768Q931.1 766.4 932.9 768.4L936.5 772.2Q938.3 774.2 936.2 775.7L930.2 780.1Q928.1 781.7 926.3 779.7L922.8 775.8Q921 773.9 923.1 772.3ZM939.2 778.9Q941.3 777.3 943.1 779.2L946.8 783.1Q948.6 785.1 946.4 786.7L940.5 791.1Q938.3 792.7 936.5 790.7L932.9 786.8Q931.1 784.8 933.3 783.2ZM949.5 789.8Q951.6 788.2 953.5 790.2L957.1 794.2Q959 796.1 956.8 797.8L950.9 802.2Q948.7 803.8 946.9 801.8L943.2 797.8Q941.4 795.8 943.6 794.2ZM959.9 800.9Q962.1 799.3 963.9 801.3L967.6 805.3Q969.5 807.3 967.3 808.9L961.3 813.4Q959.2 815 957.3 813L953.6 809Q951.8 806.9 954 805.3ZM970.4 812.2Q972.6 810.5 974.5 812.5L978.2 816.6Q980.1 818.6 977.9 820.2L971.9 824.7Q969.7 826.3 967.9 824.3L964.1 820.2Q962.3 818.2 964.5 816.6ZM981 823.5Q983.2 821.8 985.1 823.9L988.9 828Q990.8 830 988.6 831.7L982.7 836.1Q980.4 837.8 978.5 835.7L974.8 831.6Q972.9 829.6 975.1 827.9ZM991.7 835Q994 833.3 995.9 835.3L999.7 839.5Q1001.6 841.5 999.4 843.2L993.5 847.7Q991.2 849.4 989.3 847.3L985.5 843.2Q983.6 841.1 985.9 839.4ZM1000.8 845.4Q1003.4 843.5 1005.6 845.9L1016.6 857.7Q1018.8 860.1 1016.2 862.1L1011 866Q1008.3 868 1006.1 865.6L995.2 853.7Q993 851.3 995.6 849.4ZM1019.7 867.4Q1022 865.7 1024 867.8L1027.9 872.1Q1029.9 874.2 1027.6 876L1021.7 880.5Q1019.4 882.2 1017.4 880.1L1013.5 875.8Q1011.5 873.7 1013.8 871.9ZM1030.6 878Q1032.9 876.2 1034.9 878.4L1038.9 882.7Q1040.9 884.8 1038.6 886.6L1032.7 891.1Q1030.3 892.9 1028.4 890.8L1024.4 886.4Q1022.4 884.3 1024.7 882.5ZM873.7 738.2Q875.8 736.7 877.5 738.5L880.9 742.3Q882.6 744.2 880.6 745.7L874.6 750Q872.5 751.5 870.8 749.6L867.4 745.8Q865.7 744 867.8 742.5ZM883.1 748.5Q885.2 747 886.9 748.9L890.4 752.7Q892.1 754.6 890 756.1L884.1 760.4Q882 761.9 880.3 760L876.8 756.2Q875.1 754.3 877.2 752.8ZM894.4 761.1Q897 759.2 899.1 761.5L961.4 829.8Q963.6 832.2 961 834.2L955.8 838.1Q953.2 840 951 837.6L888.9 768.9Q886.8 766.6 889.4 764.8ZM964.3 837.1Q966.6 835.5 968.4 837.5L972.2 841.7Q974.1 843.7 971.9 845.4L965.9 849.9Q963.6 851.6 961.8 849.5L958 845.4Q956.2 843.3 958.4 841.6ZM1007.8 884.5Q1010.1 882.7 1012.1 884.9L1016 889.2Q1018 891.3 1015.7 893.1L1009.7 897.7Q1007.4 899.4 1005.5 897.3L1001.5 892.9Q999.6 890.8 1001.9 889ZM1041.3 827.4Q1043.6 825.7 1045.5 827.7L1049.5 831.9Q1051.4 833.9 1049.2 835.7L1024.9 854.1Q1022.6 855.9 1020.7 853.8L1016.8 849.6Q1014.8 847.5 1017.1 845.8Z" fill="#2b2926" stroke="#0c0c0c" stroke-width="0.6"/>
<path d="M922.6 681.8Q923.4 681.2 924 681.9L927.1 685.1Q927.8 685.8 927 686.4L922.3 689.8Q921.5 690.4 920.8 689.7L917.7 686.4Q917.1 685.8 917.9 685.2ZM932.3 691.9Q933.1 691.3 933.8 692L936.9 695.3Q937.6 696 936.8 696.5L932 700Q931.2 700.5 930.6 699.8L927.5 696.6Q926.8 695.9 927.6 695.3ZM942.1 702.1Q942.9 701.5 943.6 702.2L946.8 705.5Q947.4 706.2 946.6 706.8L941.9 710.3Q941.1 710.8 940.4 710.1L937.3 706.8Q936.6 706.1 937.4 705.6ZM952.1 712.4Q952.9 711.8 953.5 712.6L956.7 715.9Q957.4 716.6 956.6 717.2L951.8 720.6Q951 721.2 950.3 720.5L947.2 717.2Q946.5 716.5 947.3 715.9ZM962.1 722.9Q962.9 722.3 963.6 723L966.8 726.3Q967.5 727 966.7 727.6L961.9 731.1Q961.1 731.7 960.4 731L957.2 727.7Q956.5 726.9 957.3 726.4ZM972.2 733.4Q973 732.8 973.7 733.5L977 736.9Q977.7 737.6 976.9 738.2L972 741.8Q971.2 742.4 970.5 741.6L967.3 738.2Q966.6 737.5 967.4 736.9ZM982.4 744.1Q983.3 743.4 984 744.2L987.2 747.6Q988 748.3 987.1 748.9L982.3 752.5Q981.5 753.1 980.8 752.4L977.5 748.9Q976.8 748.2 977.6 747.6ZM992.8 754.8Q993.6 754.2 994.3 754.9L997.6 758.4Q998.4 759.1 997.5 759.7L992.7 763.3Q991.9 763.9 991.2 763.2L987.9 759.7Q987.1 759 988 758.4ZM1003.2 765.7Q1004.1 765.1 1004.8 765.8L1008.1 769.3Q1008.9 770.1 1008 770.7L1003.2 774.3Q1002.4 774.9 1001.7 774.1L998.3 770.6Q997.6 769.9 998.4 769.3ZM1013.8 776.7Q1014.6 776.1 1015.4 776.8L1018.8 780.3Q1019.5 781.1 1018.6 781.7L1013.8 785.3Q1013 786 1012.2 785.2L1008.9 781.7Q1008.1 780.9 1009 780.3ZM1024.5 787.8Q1025.3 787.2 1026.1 787.9L1029.5 791.5Q1030.2 792.3 1029.4 792.9L1024.5 796.5Q1023.7 797.2 1022.9 796.4L1019.5 792.8Q1018.8 792.1 1019.6 791.4ZM1035.3 799Q1036.1 798.4 1036.9 799.2L1040.3 802.8Q1041.1 803.5 1040.2 804.2L1035.4 807.8Q1034.5 808.5 1033.8 807.7L1030.3 804.1Q1029.6 803.3 1030.4 802.7ZM1046.2 810.4Q1047 809.7 1047.8 810.5L1051.3 814.2Q1052.1 815 1051.2 815.6L1046.3 819.3Q1045.5 819.9 1044.7 819.2L1041.2 815.5Q1040.5 814.7 1041.3 814.1ZM1057.2 821.9Q1058.1 821.2 1058.8 822L1062.4 825.7Q1063.1 826.5 1062.3 827.1L1057.4 830.8Q1056.5 831.5 1055.8 830.7L1052.2 827Q1051.5 826.2 1052.4 825.6ZM1078.9 844.5Q1079.8 843.8 1080.6 844.6L1084.2 848.4Q1085 849.2 1084.1 849.9L1079.2 853.6Q1078.3 854.3 1077.6 853.5L1074 849.7Q1073.2 848.9 1074.1 848.2ZM911.3 695.7Q912.1 695.1 912.7 695.8L915.8 699.1Q916.5 699.8 915.7 700.3L910.9 703.8Q910.1 704.3 909.5 703.6L906.4 700.4Q905.7 699.7 906.5 699.1ZM921 705.9Q921.8 705.3 922.4 706L925.6 709.3Q926.2 710 925.4 710.6L920.6 714.1Q919.9 714.6 919.2 713.9L916.1 710.7Q915.4 709.9 916.2 709.4ZM930.8 716.2Q931.6 715.7 932.3 716.4L935.4 719.7Q936.1 720.4 935.3 721L930.5 724.5Q929.7 725.1 929 724.3L925.9 721Q925.2 720.3 926 719.7ZM940.7 726.7Q941.5 726.1 942.2 726.8L945.3 730.2Q946 730.9 945.2 731.5L940.4 735Q939.6 735.6 938.9 734.8L935.8 731.5Q935.1 730.8 935.9 730.2ZM950.7 737.2Q951.5 736.6 952.2 737.4L955.4 740.7Q956.1 741.5 955.3 742.1L950.5 745.6Q949.6 746.2 949 745.5L945.8 742.1Q945.1 741.4 945.9 740.8ZM960.8 747.9Q961.6 747.3 962.3 748L965.6 751.4Q966.3 752.2 965.4 752.8L960.6 756.3Q959.8 756.9 959.1 756.2L955.9 752.8Q955.2 752 956 751.4ZM971 758.7Q971.8 758.1 972.5 758.8L975.8 762.3Q976.5 763 975.7 763.6L970.9 767.2Q970 767.8 969.3 767L966.1 763.6Q965.4 762.8 966.2 762.2ZM981.3 769.6Q982.2 768.9 982.9 769.7L986.2 773.2Q986.9 773.9 986.1 774.5L981.2 778.1Q980.4 778.8 979.7 778L976.4 774.5Q975.7 773.8 976.5 773.1ZM991.8 780.6Q992.6 779.9 993.3 780.7L996.7 784.2Q997.4 785 996.6 785.6L991.7 789.2Q990.9 789.9 990.2 789.1L986.8 785.6Q986.1 784.8 986.9 784.2ZM1002.3 791.7Q1003.2 791.1 1003.9 791.8L1007.3 795.4Q1008 796.2 1007.2 796.8L1002.3 800.4Q1001.5 801.1 1000.7 800.3L997.3 796.7Q996.6 795.9 997.5 795.3ZM1013 802.9Q1013.8 802.3 1014.6 803.1L1018 806.7Q1018.7 807.4 1017.9 808.1L1013 811.7Q1012.2 812.4 1011.4 811.6L1008 808Q1007.3 807.2 1008.1 806.6ZM1023.8 814.3Q1024.6 813.7 1025.4 814.4L1028.8 818.1Q1029.6 818.9 1028.7 819.5L1023.8 823.2Q1023 823.8 1022.2 823.1L1018.8 819.4Q1018 818.6 1018.9 818ZM1053.1 844.7Q1054 844 1054.7 844.8L1058.3 848.6Q1059.1 849.4 1058.2 850.1L1053.3 853.8Q1052.4 854.5 1051.6 853.7L1048.1 849.9Q1047.3 849.1 1048.2 848.4ZM1064.3 856.1Q1065.1 855.4 1065.9 856.2L1069.5 860Q1070.3 860.8 1069.4 861.5L1064.5 865.3Q1063.6 866 1062.8 865.2L1059.2 861.4Q1058.5 860.5 1059.4 859.9ZM892.7 702.1Q893.5 701.5 894.2 702.2L897.2 705.5Q897.9 706.2 897.1 706.7L892.3 710.2Q891.5 710.7 890.8 710L887.8 706.8Q887.1 706.1 887.9 705.5ZM902.2 712.2Q903 711.6 903.6 712.3L906.7 715.6Q907.4 716.3 906.6 716.9L901.8 720.4Q901 720.9 900.3 720.2L897.3 716.9Q896.6 716.2 897.4 715.7ZM911.8 722.4Q912.6 721.8 913.2 722.5L916.3 725.9Q917 726.6 916.2 727.1L911.4 730.7Q910.6 731.2 909.9 730.5L906.8 727.2Q906.1 726.5 906.9 725.9ZM921.4 732.7Q922.2 732.1 922.9 732.9L926 736.2Q926.7 736.9 925.9 737.5L921.1 741.1Q920.3 741.6 919.6 740.9L916.5 737.5Q915.8 736.8 916.6 736.2ZM931.2 743.2Q932 742.6 932.7 743.3L935.8 746.7Q936.5 747.4 935.7 748L930.9 751.6Q930.1 752.1 929.4 751.4L926.2 748Q925.5 747.3 926.3 746.7ZM941 753.7Q941.9 753.1 942.5 753.8L945.8 757.3Q946.4 758 945.6 758.6L940.8 762.2Q940 762.8 939.3 762L936.1 758.6Q935.4 757.8 936.2 757.3ZM951 764.3Q951.8 763.7 952.5 764.5L955.8 767.9Q956.5 768.7 955.6 769.3L950.8 772.9Q950 773.5 949.3 772.7L946 769.3Q945.3 768.5 946.2 767.9ZM961.1 775.1Q961.9 774.5 962.6 775.2L965.9 778.7Q966.6 779.5 965.8 780.1L960.9 783.7Q960.1 784.3 959.4 783.6L956.1 780.1Q955.4 779.3 956.2 778.7ZM971.3 786Q972.1 785.4 972.8 786.1L976.1 789.7Q976.8 790.4 976 791L971.1 794.7Q970.3 795.3 969.6 794.5L966.3 791Q965.6 790.2 966.4 789.6ZM981.5 797Q982.4 796.3 983.1 797.1L986.5 800.7Q987.2 801.4 986.3 802.1L981.4 805.7Q980.6 806.4 979.9 805.6L976.5 802Q975.8 801.2 976.7 800.6ZM991.9 808.1Q992.8 807.4 993.5 808.2L996.9 811.8Q997.6 812.6 996.8 813.2L991.9 816.9Q991 817.6 990.3 816.8L986.9 813.2Q986.2 812.4 987 811.7ZM1002.4 819.3Q1003.3 818.7 1004 819.4L1007.5 823.1Q1008.2 823.9 1007.3 824.5L1002.4 828.2Q1001.6 828.9 1000.8 828.1L997.4 824.4Q996.7 823.6 997.5 823ZM1013.1 830.7Q1013.9 830 1014.7 830.8L1018.1 834.5Q1018.9 835.3 1018 835.9L1013.1 839.6Q1012.2 840.3 1011.5 839.5L1008 835.8Q1007.3 835 1008.2 834.4ZM1043.3 863Q1044.2 862.3 1045 863.1L1048.6 866.9Q1049.3 867.8 1048.4 868.4L1043.5 872.2Q1042.6 872.9 1041.8 872.1L1038.3 868.3Q1037.5 867.5 1038.4 866.8ZM875.9 712Q876.9 711.3 877.7 712.2L885.2 720.3Q886 721.2 885 721.9L880.5 725.1Q879.6 725.8 878.8 724.9L871.3 716.8Q870.5 715.9 871.4 715.2ZM890.2 728.1Q891 727.5 891.7 728.2L894.8 731.5Q895.4 732.3 894.6 732.8L889.8 736.4Q889 736.9 888.3 736.2L885.3 732.9Q884.6 732.2 885.4 731.6ZM900 738.5Q900.8 737.9 901.5 738.6L904.6 742Q905.2 742.7 904.5 743.3L899.6 746.9Q898.8 747.4 898.1 746.7L895 743.3Q894.4 742.6 895.2 742ZM909.9 749Q910.7 748.5 911.4 749.2L914.5 752.6Q915.2 753.3 914.4 753.9L909.5 757.5Q908.7 758 908 757.3L904.9 753.9Q904.2 753.2 905 752.6ZM919.9 759.7Q920.7 759.1 921.4 759.8L924.5 763.3Q925.2 764 924.4 764.6L919.5 768.2Q918.7 768.8 918 768L914.9 764.6Q914.2 763.9 915 763.3ZM930 770.5Q930.8 769.9 931.5 770.6L934.7 774.1Q935.4 774.8 934.6 775.4L929.7 779Q928.8 779.6 928.2 778.9L925 775.4Q924.3 774.6 925.1 774ZM940.2 781.3Q941 780.7 941.7 781.5L944.9 785Q945.6 785.7 944.8 786.3L939.9 790Q939.1 790.6 938.4 789.8L935.1 786.3Q934.5 785.6 935.3 784.9ZM950.5 792.3Q951.3 791.7 952 792.5L955.3 796Q956 796.8 955.2 797.4L950.3 801Q949.4 801.7 948.7 800.9L945.4 797.3Q944.7 796.6 945.6 796ZM960.9 803.4Q961.7 802.8 962.5 803.6L965.8 807.2Q966.5 807.9 965.6 808.6L960.7 812.2Q959.9 812.9 959.2 812.1L955.9 808.5Q955.2 807.7 956 807.1ZM971.4 814.7Q972.3 814 973 814.8L976.3 818.4Q977.1 819.2 976.2 819.8L971.3 823.5Q970.4 824.2 969.7 823.4L966.4 819.8Q965.7 819 966.5 818.3ZM982.1 826Q982.9 825.4 983.7 826.2L987 829.8Q987.8 830.6 986.9 831.3L982 835Q981.1 835.6 980.4 834.8L977 831.2Q976.3 830.4 977.2 829.7ZM992.8 837.5Q993.7 836.9 994.4 837.6L997.9 841.3Q998.6 842.1 997.7 842.8L992.8 846.5Q991.9 847.2 991.2 846.4L987.8 842.7Q987 841.9 987.9 841.2ZM1002.1 847.8Q1003.1 847.1 1004 848L1014.9 859.7Q1015.7 860.7 1014.7 861.4L1010 865Q1009 865.8 1008.2 864.9L997.3 853Q996.5 852.1 997.5 851.4ZM1020.8 870Q1021.7 869.3 1022.5 870.2L1026 874Q1026.8 874.8 1025.9 875.5L1020.9 879.3Q1020 880 1019.3 879.1L1015.7 875.3Q1015 874.5 1015.9 873.8ZM1031.8 880.6Q1032.7 879.9 1033.4 880.7L1037 884.6Q1037.8 885.4 1036.9 886.1L1031.9 889.9Q1031 890.6 1030.2 889.8L1026.7 885.9Q1025.9 885.1 1026.8 884.4ZM874.6 740.6Q875.4 740 876.1 740.7L879.1 744.1Q879.8 744.8 879 745.4L874.1 748.9Q873.3 749.5 872.7 748.8L869.6 745.4Q869 744.7 869.8 744.1ZM884 750.9Q884.8 750.4 885.5 751.1L888.6 754.5Q889.3 755.2 888.5 755.8L883.6 759.4Q882.8 759.9 882.1 759.2L879 755.8Q878.4 755.1 879.2 754.5ZM895.6 763.3Q896.6 762.6 897.4 763.5L959.8 831.9Q960.6 832.8 959.6 833.6L954.9 837.1Q953.9 837.8 953.1 836.9L890.9 768.3Q890.1 767.4 891.1 766.6ZM965.4 839.7Q966.2 839.1 967 839.8L970.3 843.5Q971.1 844.3 970.2 845L965.2 848.7Q964.4 849.4 963.6 848.6L960.3 844.9Q959.6 844.1 960.4 843.4ZM1009 887.1Q1009.9 886.4 1010.6 887.2L1014.1 891.1Q1014.9 891.9 1014 892.6L1009 896.4Q1008.1 897.1 1007.4 896.3L1003.8 892.4Q1003.1 891.6 1004 890.9ZM1042.5 829.9Q1043.3 829.3 1044.1 830.1L1047.6 833.8Q1048.4 834.5 1047.5 835.2L1024.1 853Q1023.3 853.6 1022.5 852.8L1019 849.1Q1018.3 848.3 1019.2 847.6Z" fill="#f2f2f2"/><polygon points="819.5,730.4 1001.4,933.5 900.5,1011.6 722.9,800" fill="#000" opacity=".2" filter="url(#blur5)"/>
<polygon points="709.9,791 887.5,1002.6 988.4,924.5 988.4,926.7 887.5,1004.8 709.9,793.2" fill="#4b4843" stroke="#141414" stroke-width="1.0" stroke-linejoin="round" />
<polygon points="806.5,721.4 988.4,924.5 887.5,1002.6 709.9,791" fill="url(#gHole)"/>
<path d="M806.5 721.4L988.4 924.5L887.5 1002.6L709.9 791ZM803.3 740.4Q805.1 739.1 806.6 740.8L812 746.8Q813.5 748.5 811.7 749.9L802.6 756.4Q800.8 757.7 799.3 756L794 750Q792.5 748.3 794.3 746.9ZM812.9 751.3Q814.7 749.9 816.3 751.6L821.7 757.7Q823.2 759.4 821.3 760.8L812.3 767.3Q810.5 768.7 808.9 767L803.6 760.9Q802.1 759.2 803.9 757.8ZM822.6 762.2Q824.4 760.8 826 762.6L831.4 768.7Q832.9 770.4 831.1 771.8L822 778.4Q820.2 779.7 818.7 778L813.2 771.8Q811.7 770.1 813.6 768.8ZM832.3 773.2Q834.2 771.8 835.7 773.6L841.2 779.7Q842.8 781.5 840.9 782.8L831.9 789.5Q830 790.8 828.5 789.1L823 782.9Q821.5 781.2 823.3 779.8ZM842.2 784.3Q844 782.9 845.6 784.7L851.1 790.9Q852.7 792.6 850.8 794L841.8 800.7Q839.9 802.1 838.3 800.3L832.8 794.1Q831.3 792.3 833.2 790.9ZM852.1 795.5Q854 794.1 855.5 795.8L861.1 802.1Q862.7 803.9 860.8 805.3L851.7 812Q849.8 813.4 848.3 811.6L842.7 805.3Q841.2 803.5 843.1 802.1ZM862.1 806.7Q864 805.3 865.5 807.1L871.2 813.4Q872.7 815.2 870.8 816.6L861.8 823.3Q859.9 824.8 858.3 823L852.7 816.6Q851.1 814.8 853 813.4ZM872.1 818.1Q874.1 816.7 875.6 818.5L881.3 824.8Q882.9 826.6 881 828L871.9 834.8Q870 836.2 868.4 834.4L862.8 828Q861.2 826.2 863.1 824.8ZM882.3 829.5Q884.2 828.1 885.8 829.9L891.5 836.3Q893.1 838.1 891.2 839.6L882.1 846.4Q880.2 847.8 878.6 846L872.9 839.5Q871.3 837.7 873.3 836.3ZM892.5 841.1Q894.5 839.6 896.1 841.4L901.8 847.9Q903.4 849.7 901.5 851.2L892.4 858Q890.5 859.5 888.9 857.7L883.1 851.2Q881.5 849.3 883.5 847.9ZM902.8 852.7Q904.8 851.2 906.4 853.1L912.2 859.6Q913.8 861.4 911.9 862.9L902.8 869.8Q900.9 871.2 899.2 869.4L893.5 862.8Q891.8 861 893.8 859.5ZM913.2 864.5Q915.2 863 916.8 864.8L922.7 871.4Q924.3 873.2 922.4 874.7L913.3 881.6Q911.3 883.1 909.7 881.2L903.8 874.6Q902.2 872.8 904.2 871.3ZM923.7 876.3Q925.7 874.8 927.4 876.6L933.2 883.3Q934.9 885.1 932.9 886.6L923.8 893.6Q921.8 895.1 920.2 893.2L914.3 886.5Q912.7 884.7 914.7 883.1ZM934.3 888.2Q936.3 886.7 937.9 888.6L943.9 895.2Q945.6 897.1 943.6 898.6L934.5 905.6Q932.5 907.1 930.8 905.2L924.9 898.5Q923.2 896.6 925.2 895.1ZM955 911.6Q957 910 958.7 911.9L964.8 918.7Q966.5 920.6 964.5 922.2L955.3 929.2Q953.3 930.8 951.7 928.9L945.6 922Q943.9 920.1 945.9 918.6ZM791.4 755Q793.3 753.7 794.8 755.4L800.1 761.5Q801.6 763.2 799.8 764.5L790.7 771.1Q788.9 772.4 787.4 770.7L782.1 764.6Q780.6 762.9 782.4 761.6ZM801 765.9Q802.9 764.6 804.4 766.3L809.8 772.4Q811.3 774.2 809.5 775.5L800.4 782.1Q798.5 783.5 797 781.8L791.7 775.6Q790.1 773.9 792 772.5ZM810.7 777Q812.6 775.6 814.1 777.3L819.5 783.5Q821.1 785.2 819.2 786.6L810.1 793.3Q808.3 794.6 806.7 792.9L801.3 786.7Q799.8 784.9 801.7 783.6ZM820.5 788.1Q822.3 786.7 823.9 788.4L829.4 794.7Q830.9 796.4 829 797.8L819.9 804.5Q818 805.8 816.5 804.1L811.1 797.8Q809.5 796.1 811.4 794.7ZM830.3 799.3Q832.2 797.9 833.7 799.6L839.2 805.9Q840.8 807.7 838.9 809.1L829.8 815.8Q827.9 817.2 826.4 815.4L820.9 809.1Q819.3 807.3 821.2 805.9ZM840.2 810.5Q842.1 809.1 843.6 810.9L849.2 817.2Q850.8 819 848.9 820.4L839.8 827.2Q837.9 828.6 836.3 826.8L830.8 820.4Q829.2 818.6 831.1 817.2ZM850.2 821.9Q852.1 820.5 853.7 822.3L859.3 828.6Q860.8 830.4 858.9 831.9L849.8 838.6Q847.9 840.1 846.3 838.3L840.7 831.9Q839.2 830.1 841.1 828.6ZM860.2 833.4Q862.1 831.9 863.7 833.7L869.4 840.2Q871 842 869.1 843.4L859.9 850.2Q858 851.7 856.4 849.8L850.8 843.4Q849.2 841.6 851.1 840.1ZM870.4 844.9Q872.3 843.5 873.9 845.3L879.6 851.8Q881.2 853.6 879.3 855L870.2 861.9Q868.2 863.3 866.6 861.5L860.9 855Q859.3 853.2 861.3 851.7ZM880.6 856.6Q882.5 855.1 884.2 856.9L889.9 863.5Q891.5 865.3 889.6 866.8L880.4 873.6Q878.5 875.1 876.9 873.3L871.1 866.7Q869.5 864.9 871.5 863.4ZM890.9 868.3Q892.9 866.8 894.5 868.7L900.3 875.3Q901.9 877.1 899.9 878.6L890.8 885.5Q888.8 887 887.2 885.1L881.4 878.5Q879.8 876.6 881.8 875.2ZM901.3 880.1Q903.3 878.6 904.9 880.5L910.7 887.1Q912.4 889 910.4 890.5L901.3 897.5Q899.3 899 897.7 897.1L891.8 890.4Q890.2 888.5 892.2 887ZM929.4 911.6Q931.4 910.1 933.1 912L939.1 918.8Q940.8 920.7 938.8 922.2L929.6 929.3Q927.6 930.8 925.9 928.9L920 922.1Q918.3 920.2 920.3 918.6ZM940.1 923.4Q942.1 921.8 943.8 923.7L949.8 930.6Q951.5 932.5 949.5 934.1L940.3 941.2Q938.3 942.7 936.7 940.8L930.6 933.9Q928.9 932 930.9 930.4ZM772.4 761.5Q774.3 760.2 775.8 761.9L781.1 768Q782.6 769.7 780.7 771L771.6 777.7Q769.8 779 768.3 777.3L763 771.1Q761.5 769.4 763.3 768.1ZM781.8 772.3Q783.7 771 785.2 772.7L790.5 778.8Q792 780.6 790.2 781.9L781.1 788.6Q779.2 789.9 777.7 788.2L772.4 782Q770.9 780.3 772.7 778.9ZM791.3 783.2Q793.1 781.8 794.7 783.6L800.1 789.8Q801.6 791.5 799.7 792.9L790.6 799.6Q788.7 800.9 787.2 799.2L781.8 792.9Q780.3 791.2 782.2 789.8ZM800.8 794.2Q802.7 792.8 804.2 794.6L809.7 800.8Q811.2 802.6 809.3 803.9L800.2 810.6Q798.3 812 796.8 810.3L791.3 804Q789.8 802.2 791.7 800.8ZM810.4 805.2Q812.3 803.9 813.9 805.6L819.3 811.9Q820.9 813.7 819 815.1L809.8 821.8Q808 823.2 806.4 821.4L801 815.1Q799.4 813.3 801.3 811.9ZM820.1 816.4Q822 815 823.6 816.8L829.1 823.1Q830.6 824.9 828.7 826.3L819.6 833.1Q817.7 834.5 816.1 832.7L810.6 826.3Q809.1 824.5 811 823.1ZM829.9 827.6Q831.8 826.2 833.4 828L838.9 834.4Q840.5 836.2 838.6 837.6L829.4 844.4Q827.5 845.8 825.9 844L820.4 837.6Q818.8 835.8 820.8 834.4ZM839.7 839Q841.6 837.5 843.2 839.3L848.8 845.8Q850.4 847.6 848.5 849L839.3 855.9Q837.4 857.3 835.8 855.5L830.2 849Q828.7 847.2 830.6 845.7ZM849.6 850.4Q851.6 848.9 853.2 850.8L858.8 857.2Q860.4 859.1 858.5 860.5L849.3 867.4Q847.4 868.8 845.8 867L840.1 860.5Q838.6 858.6 840.5 857.2ZM859.6 861.9Q861.6 860.4 863.2 862.3L868.9 868.8Q870.5 870.6 868.5 872.1L859.4 879Q857.4 880.5 855.8 878.6L850.1 872Q848.5 870.2 850.5 868.7ZM869.7 873.5Q871.7 872 873.3 873.9L879 880.5Q880.7 882.3 878.7 883.8L869.5 890.7Q867.5 892.2 865.9 890.3L860.2 883.7Q858.6 881.8 860.6 880.4ZM879.9 885.2Q881.8 883.7 883.5 885.5L889.3 892.2Q890.9 894.1 888.9 895.6L879.7 902.5Q877.8 904 876.1 902.1L870.4 895.5Q868.7 893.6 870.7 892.1ZM890.1 897Q892.1 895.4 893.7 897.3L899.6 904Q901.2 905.9 899.2 907.4L890 914.4Q888.1 915.9 886.4 914L880.6 907.3Q879 905.4 881 903.9ZM919.2 930.4Q921.2 928.8 922.8 930.7L928.9 937.6Q930.5 939.5 928.5 941.1L919.2 948.2Q917.3 949.7 915.6 947.8L909.6 940.9Q907.9 939 909.9 937.4ZM755.1 771.8Q757.1 770.3 758.7 772.3L768.5 783.6Q770.1 785.5 768.1 786.9L759.3 793.3Q757.2 794.8 755.6 792.9L745.9 781.5Q744.3 779.6 746.3 778.1ZM769.3 788.9Q771.2 787.6 772.7 789.3L778 795.5Q779.5 797.3 777.6 798.6L768.5 805.3Q766.6 806.7 765.1 804.9L759.8 798.7Q758.3 796.9 760.1 795.6ZM779 800Q780.9 798.6 782.4 800.4L787.8 806.7Q789.3 808.4 787.4 809.8L778.2 816.5Q776.3 817.9 774.8 816.1L769.5 809.8Q767.9 808.1 769.8 806.7ZM788.7 811.2Q790.6 809.8 792.2 811.6L797.6 817.9Q799.1 819.7 797.2 821L788 827.8Q786.1 829.2 784.6 827.4L779.2 821.1Q777.7 819.3 779.6 817.9ZM798.6 822.5Q800.5 821.1 802 822.9L807.5 829.2Q809 831 807.1 832.4L797.9 839.2Q796 840.6 794.5 838.8L789 832.4Q787.5 830.6 789.4 829.2ZM808.5 833.8Q810.4 832.4 812 834.2L817.5 840.6Q819.1 842.4 817.1 843.8L807.9 850.7Q806 852.1 804.5 850.3L799 843.8Q797.4 842 799.3 840.6ZM818.5 845.3Q820.4 843.8 822 845.7L827.6 852.1Q829.1 853.9 827.2 855.4L818 862.2Q816.1 863.6 814.5 861.8L809 855.3Q807.4 853.5 809.3 852.1ZM828.6 856.8Q830.5 855.4 832.1 857.2L837.7 863.7Q839.3 865.5 837.4 867L828.1 873.9Q826.2 875.3 824.6 873.5L819 866.9Q817.5 865.1 819.4 863.6ZM838.8 868.4Q840.7 867 842.3 868.8L848 875.4Q849.5 877.2 847.6 878.7L838.4 885.6Q836.4 887.1 834.8 885.2L829.2 878.6Q827.6 876.8 829.6 875.3ZM849 880.2Q851 878.7 852.6 880.6L858.3 887.2Q859.9 889 857.9 890.5L848.7 897.5Q846.7 898.9 845.1 897.1L839.4 890.4Q837.8 888.5 839.8 887.1ZM859.3 892Q861.3 890.5 862.9 892.4L868.7 899Q870.3 900.9 868.3 902.4L859.1 909.4Q857.1 910.9 855.5 909L849.8 902.3Q848.1 900.4 850.1 898.9ZM869.7 903.9Q871.7 902.4 873.4 904.3L879.2 911Q880.8 912.9 878.8 914.4L869.6 921.4Q867.6 922.9 865.9 921L860.2 914.3Q858.5 912.4 860.5 910.9ZM878.8 914.5Q880.8 913 882.5 914.9L895.7 930.2Q897.4 932.1 895.3 933.6L886.1 940.7Q884.1 942.3 882.4 940.3L869.3 924.9Q867.6 923 869.6 921.5ZM896.6 937.5Q898.6 935.9 900.3 937.8L906.3 944.8Q907.9 946.7 905.9 948.2L896.6 955.4Q894.6 956.9 892.9 955L887 948Q885.4 946.1 887.4 944.6ZM907.2 948.3Q909.2 946.8 910.8 948.7L916.9 955.7Q918.5 957.6 916.5 959.2L907.2 966.4Q905.2 967.9 903.5 966L897.5 958.9Q895.9 957 897.9 955.5ZM753.2 801.9Q755 800.6 756.5 802.3L761.9 808.6Q763.4 810.3 761.5 811.7L752.2 818.5Q750.4 819.8 748.9 818.1L743.6 811.8Q742.1 810 744 808.6ZM762.5 812.9Q764.4 811.5 765.9 813.3L771.3 819.6Q772.8 821.4 770.9 822.8L761.6 829.5Q759.8 830.9 758.3 829.1L752.9 822.8Q751.4 821 753.3 819.7ZM774 826Q776.1 824.5 777.7 826.4L841.4 901.1Q843 903.1 841 904.6L831.8 911.5Q829.8 913 828.1 911.1L764.7 836Q763 834 765.1 832.6ZM842.3 906Q844.2 904.5 845.9 906.4L851.6 913.1Q853.2 915 851.2 916.5L841.9 923.6Q839.9 925.1 838.3 923.2L832.6 916.4Q831 914.5 833 913ZM884.4 954.9Q886.4 953.3 888 955.3L894 962.3Q895.6 964.2 893.6 965.7L884.2 973Q882.2 974.5 880.6 972.6L874.6 965.5Q873 963.6 875 962.1ZM919.4 896.4Q921.4 894.9 923 896.7L928.9 903.5Q930.6 905.3 928.6 906.9L900.6 928.3Q898.6 929.8 897 927.9L891.1 921.1Q889.5 919.2 891.5 917.6Z" fill="url(#gPlate0)" fill-rule="evenodd" stroke="#141414" stroke-width="0.9" stroke-linejoin="round"/>
<polygon points="792.5,748.3 805.1,739.1 813.5,748.5 813.1,751.1 805.3,742.1 794.1,749.9" fill="#2e2c29"/>
<polygon points="802.1,759.2 814.7,749.9 823.2,759.4 822.8,762 814.9,752.9 803.7,760.8" fill="#2e2c29"/>
<polygon points="811.7,770.1 824.4,760.8 832.9,770.4 832.5,773 824.6,763.8 813.3,771.7" fill="#2e2c29"/>
<polygon points="821.5,781.2 834.2,771.8 842.8,781.5 842.4,784.1 834.4,774.8 823.1,782.8" fill="#2e2c29"/>
<polygon points="831.3,792.3 844,782.9 852.7,792.6 852.3,795.2 844.2,785.9 832.9,793.9" fill="#2e2c29"/>
<polygon points="841.2,803.5 854,794.1 862.7,803.9 862.3,806.5 854.2,797.1 842.8,805.1" fill="#2e2c29"/>
<polygon points="851.1,814.8 864,805.3 872.7,815.2 872.3,817.8 864.2,808.3 852.7,816.4" fill="#2e2c29"/>
<polygon points="861.2,826.2 874.1,816.7 882.9,826.6 882.5,829.2 874.3,819.7 862.8,827.8" fill="#2e2c29"/>
<polygon points="871.3,837.7 884.2,828.1 893.1,838.1 892.7,840.7 884.4,831.1 872.9,839.3" fill="#2e2c29"/>
<polygon points="881.5,849.3 894.5,839.6 903.4,849.7 903,852.3 894.7,842.6 883.1,850.9" fill="#2e2c29"/>
<polygon points="891.8,861 904.8,851.2 913.8,861.4 913.4,864 905,854.2 893.4,862.6" fill="#2e2c29"/>
<polygon points="902.2,872.8 915.2,863 924.3,873.2 923.9,875.8 915.4,866 903.8,874.4" fill="#2e2c29"/>
<polygon points="912.7,884.7 925.7,874.8 934.9,885.1 934.5,887.7 925.9,877.8 914.3,886.3" fill="#2e2c29"/>
<polygon points="923.2,896.6 936.3,886.7 945.6,897.1 945.2,899.7 936.5,889.7 924.8,898.2" fill="#2e2c29"/>
<polygon points="943.9,920.1 957,910 966.5,920.6 966.1,923.2 957.2,913 945.5,921.7" fill="#2e2c29"/>
<polygon points="780.6,762.9 793.3,753.7 801.6,763.2 801.2,765.8 793.5,756.7 782.2,764.5" fill="#2e2c29"/>
<polygon points="790.1,773.9 802.9,764.6 811.3,774.2 810.9,776.8 803.1,767.6 791.7,775.5" fill="#2e2c29"/>
<polygon points="799.8,784.9 812.6,775.6 821.1,785.2 820.7,787.8 812.8,778.6 801.4,786.5" fill="#2e2c29"/>
<polygon points="809.5,796.1 822.3,786.7 830.9,796.4 830.5,799 822.5,789.7 811.1,797.7" fill="#2e2c29"/>
<polygon points="819.3,807.3 832.2,797.9 840.8,807.7 840.4,810.3 832.4,800.9 820.9,808.9" fill="#2e2c29"/>
<polygon points="829.2,818.6 842.1,809.1 850.8,819 850.4,821.6 842.3,812.1 830.8,820.2" fill="#2e2c29"/>
<polygon points="839.2,830.1 852.1,820.5 860.8,830.4 860.4,833 852.3,823.5 840.8,831.7" fill="#2e2c29"/>
<polygon points="849.2,841.6 862.1,831.9 871,842 870.6,844.6 862.3,834.9 850.8,843.2" fill="#2e2c29"/>
<polygon points="859.3,853.2 872.3,843.5 881.2,853.6 880.8,856.2 872.5,846.5 860.9,854.8" fill="#2e2c29"/>
<polygon points="869.5,864.9 882.5,855.1 891.5,865.3 891.1,867.9 882.7,858.1 871.1,866.5" fill="#2e2c29"/>
<polygon points="879.8,876.6 892.9,866.8 901.9,877.1 901.5,879.7 893.1,869.8 881.4,878.2" fill="#2e2c29"/>
<polygon points="890.2,888.5 903.3,878.6 912.4,889 912,891.6 903.5,881.6 891.8,890.1" fill="#2e2c29"/>
<polygon points="918.3,920.2 931.4,910.1 940.8,920.7 940.4,923.3 931.6,913.1 919.9,921.8" fill="#2e2c29"/>
<polygon points="928.9,932 942.1,921.8 951.5,932.5 951.1,935.1 942.3,924.8 930.5,933.6" fill="#2e2c29"/>
<polygon points="761.5,769.4 774.3,760.2 782.6,769.7 782.2,772.3 774.5,763.2 763.1,771" fill="#2e2c29"/>
<polygon points="770.9,780.3 783.7,771 792,780.6 791.6,783.2 783.9,774 772.5,781.9" fill="#2e2c29"/>
<polygon points="780.3,791.2 793.1,781.8 801.6,791.5 801.2,794.1 793.3,784.8 781.9,792.8" fill="#2e2c29"/>
<polygon points="789.8,802.2 802.7,792.8 811.2,802.6 810.8,805.2 802.9,795.8 791.4,803.8" fill="#2e2c29"/>
<polygon points="799.4,813.3 812.3,803.9 820.9,813.7 820.5,816.3 812.5,806.9 801,814.9" fill="#2e2c29"/>
<polygon points="809.1,824.5 822,815 830.6,824.9 830.2,827.5 822.2,818 810.7,826.1" fill="#2e2c29"/>
<polygon points="818.8,835.8 831.8,826.2 840.5,836.2 840.1,838.8 832,829.2 820.4,837.4" fill="#2e2c29"/>
<polygon points="828.7,847.2 841.6,837.5 850.4,847.6 850,850.2 841.8,840.5 830.3,848.8" fill="#2e2c29"/>
<polygon points="838.6,858.6 851.6,848.9 860.4,859.1 860,861.7 851.8,851.9 840.2,860.2" fill="#2e2c29"/>
<polygon points="848.5,870.2 861.6,860.4 870.5,870.6 870.1,873.2 861.8,863.4 850.1,871.8" fill="#2e2c29"/>
<polygon points="858.6,881.8 871.7,872 880.7,882.3 880.3,884.9 871.9,875 860.2,883.4" fill="#2e2c29"/>
<polygon points="868.7,893.6 881.8,883.7 890.9,894.1 890.5,896.7 882,886.7 870.3,895.2" fill="#2e2c29"/>
<polygon points="879,905.4 892.1,895.4 901.2,905.9 900.8,908.5 892.3,898.4 880.6,907" fill="#2e2c29"/>
<polygon points="907.9,939 921.2,928.8 930.5,939.5 930.1,942.1 921.4,931.8 909.5,940.6" fill="#2e2c29"/>
<polygon points="744.3,779.6 757.1,770.3 770.1,785.5 769.7,788.1 757.3,773.3 745.9,781.2" fill="#2e2c29"/>
<polygon points="758.3,796.9 771.2,787.6 779.5,797.3 779.1,799.9 771.4,790.6 759.9,798.5" fill="#2e2c29"/>
<polygon points="767.9,808.1 780.9,798.6 789.3,808.4 788.9,811 781.1,801.6 769.5,809.7" fill="#2e2c29"/>
<polygon points="777.7,819.3 790.6,809.8 799.1,819.7 798.7,822.3 790.8,812.8 779.3,820.9" fill="#2e2c29"/>
<polygon points="787.5,830.6 800.5,821.1 809,831 808.6,833.6 800.7,824.1 789.1,832.2" fill="#2e2c29"/>
<polygon points="797.4,842 810.4,832.4 819.1,842.4 818.7,845 810.6,835.4 799,843.6" fill="#2e2c29"/>
<polygon points="807.4,853.5 820.4,843.8 829.1,853.9 828.7,856.5 820.6,846.8 809,855.1" fill="#2e2c29"/>
<polygon points="817.5,865.1 830.5,855.4 839.3,865.5 838.9,868.1 830.7,858.4 819.1,866.7" fill="#2e2c29"/>
<polygon points="827.6,876.8 840.7,867 849.5,877.2 849.1,879.8 840.9,870 829.2,878.4" fill="#2e2c29"/>
<polygon points="837.8,888.5 851,878.7 859.9,889 859.5,891.6 851.2,881.7 839.4,890.1" fill="#2e2c29"/>
<polygon points="848.1,900.4 861.3,890.5 870.3,900.9 869.9,903.5 861.5,893.5 849.7,902" fill="#2e2c29"/>
<polygon points="858.5,912.4 871.7,902.4 880.8,912.9 880.4,915.5 871.9,905.4 860.1,914" fill="#2e2c29"/>
<polygon points="867.6,923 880.8,913 897.4,932.1 897,934.7 881,916 869.2,924.6" fill="#2e2c29"/>
<polygon points="885.4,946.1 898.6,935.9 907.9,946.7 907.5,949.3 898.8,938.9 887,947.7" fill="#2e2c29"/>
<polygon points="895.9,957 909.2,946.8 918.5,957.6 918.1,960.2 909.4,949.8 897.5,958.6" fill="#2e2c29"/>
<polygon points="742.1,810 755,800.6 763.4,810.3 763,812.9 755.2,803.6 743.7,811.6" fill="#2e2c29"/>
<polygon points="751.4,821 764.4,811.5 772.8,821.4 772.4,824 764.6,814.5 753,822.6" fill="#2e2c29"/>
<polygon points="763,834 776.1,824.5 843,903.1 842.6,905.7 776.3,827.5 764.6,835.6" fill="#2e2c29"/>
<polygon points="831,914.5 844.2,904.5 853.2,915 852.8,917.6 844.4,907.5 832.6,916.1" fill="#2e2c29"/>
<polygon points="873,963.6 886.4,953.3 895.6,964.2 895.2,966.8 886.6,956.3 874.6,965.2" fill="#2e2c29"/>
<polygon points="889.5,919.2 921.4,894.9 930.6,905.3 930.2,907.9 921.6,897.9 891.1,920.8" fill="#2e2c29"/>
<g>
<ellipse cx="1862" cy="236" rx="36" ry="16" fill="#000" opacity=".16" filter="url(#blur5)"/>
<polygon points="1821.900,187 1861.300,169.500 1892.300,195 1850.800,216.500" fill="#f1f1f1"/>
<polygon points="1821.900,187 1850.800,216.500 1851.400,248.500 1826.200,221.400" fill="#e3e3e3"/>
<polygon points="1850.800,216.500 1892.300,195 1888.400,227 1851.400,248.500" fill="#ebebeb"/>
<g fill="none" stroke="#a8a8a8" stroke-width="1" stroke-dasharray="4 2.500"><path d="M1821.900 187L1861.300 169.500L1892.300 195L1850.800 216.500ZM1850.800 216.500L1851.400 248.500L1888.400 227L1892.300 195"/></g>
<polygon points="1844,210 1851,206 1858,212.500 1858,221 1851,224.500 1844.500,218" fill="#dfe3ee" opacity=".8"/>
<path d="M1820.600 181.400L1825.800 220.800" stroke="#6f6fff" stroke-width="1.800"/><path d="M1825.800 220.800L1855.100 254.700" stroke="#ff8d8d" stroke-width="1.800"/>
<text x="1813" y="179" font-size="12.500" fill="#8080ff" font-family="Liberation Sans,sans-serif">Z</text>
<text x="1855" y="266" font-size="12.500" fill="#ff8a8a" font-family="Liberation Sans,sans-serif">X</text>
<g font-family="Liberation Sans,Noto Sans CJK JP,sans-serif" fill="#8a8d92" text-anchor="middle">
<text transform="matrix(0.72 0.69 -0.68 0.38 1854 194.500)" font-size="21" y="7">上</text>
<text transform="matrix(0.8 -0.41 -0.28 0.92 1872 223)" font-size="19" y="7">右</text>
<text transform="matrix(0.5 0.51 0.1 0.8 1837 217)" font-size="19" y="7">前</text>
</g>
</g>
</svg>
<div id="title">
 <svg class="abs" style="left:3px;top:3px" width="15" height="16" viewBox="0 0 15 16"><rect x="0" y="0" width="15" height="16" rx="2" fill="#f5c9a0"/><path d="M4 13V3h7v2.3H6.6v2.2h3.6v2.2H6.6V13z" fill="#e0661a"/><rect x="0" y="11" width="6" height="5" fill="#f9dcc0" opacity=".7"/></svg>
 
 <svg class="abs" style="left:1790px;top:0" width="130" height="23" viewBox="0 0 130 23" fill="none" stroke="#000" stroke-width="1.1"><path d="M9 10.5h11"/><rect x="53.5" y="7.5" width="8" height="8" rx="1"/><path d="M56 7.5v-2h8v8h-2.5"/><path d="M99.500 5.500l11 10M110.500 5.500l-11 10"/></svg>
</div>
<div id="tabbar">
 <div class="tab1"></div><div class="tab2" style="border-radius:0 5px 0 0"></div>
 <div class="abs" style="left:1667px;top:4px;width:28px;height:28px;background:#bcbcbc;border-radius:5px 5px 0 0"></div>
 <!-- quick access icons -->
 <svg class="abs" style="left:0;top:0" width="193" height="32" viewBox="0 0 193 32">
  <g fill="#666"><rect x="9" y="9" width="4" height="4"/><rect x="14" y="9" width="4" height="4"/><rect x="19" y="9" width="4" height="4"/><rect x="9" y="14" width="4" height="4"/><rect x="14" y="14" width="4" height="4"/><rect x="19" y="14" width="4" height="4"/><rect x="9" y="19" width="4" height="4"/><rect x="14" y="19" width="4" height="4"/><rect x="19" y="19" width="4" height="4"/>
  <path d="M42 8h8l5 5v10H42z"/><path d="M50 8v5h5z" fill="#ccc"/><path d="M61 13h7l-3.500 4.500z"/>
  <path d="M87 9h12l2 2v12H87z"/><rect x="90" y="10.500" width="7" height="4" fill="#ccc"/><rect x="90" y="17.500" width="8" height="5.500" fill="#ccc"/><rect x="92.500" y="18.500" width="2" height="4.500"/>
  <path d="M141 13h7l-3.500 4.500z"/></g>
  <path d="M132.500 22c0-5-4-7-10-6.500M126 11.500l-4.500 4 4.500 4" fill="none" stroke="#666" stroke-width="1.700"/>
  <path d="M160.500 22c0-5 4-7 10-6.500M167 11.500l4.500 4-4.500 4" fill="none" stroke="#aaa" stroke-width="1.700"/>
  <path d="M180 13h7l-3.500 4.500z" fill="#aaa"/>
 </svg>
 <!-- tab 1 label -->
 <svg class="abs" style="left:496px;top:10px" width="16" height="15" viewBox="0 0 16 15"><path d="M1 3.500l8-2.500 6 2v8l-6 3.500-8-3z" fill="#666"/><path d="M1 3.500l8 2.500 6-3M9 6v8.500" stroke="#999" stroke-width="1" fill="none"/><path d="M9 6l6-3v8l-6 3.500z" fill="#888"/></svg>
 
 <svg class="abs" style="left:909px;top:12px" width="11" height="11" viewBox="0 0 11 11"><path d="M1.500 1.500l8 8M9.500 1.500l-8 8" stroke="#555" stroke-width="1.500"/></svg>
 <svg class="abs" style="left:1256px;top:10px" width="13" height="15" viewBox="0 0 13 15"><rect x="1" y="6" width="11" height="8" rx="1" fill="#777"/><path d="M3.500 6V4a3 3 0 0 1 6 0v2" fill="none" stroke="#777" stroke-width="1.500"/><path d="M3 9h7M3 11.500h7" stroke="#bcbcbc" stroke-width="1"/></svg>
 
 <svg class="abs" style="left:1646px;top:13px" width="11" height="11" viewBox="0 0 11 11"><path d="M1.500 1.500l8 8M9.500 1.500l-8 8" stroke="#888" stroke-width="1.500"/></svg>
 <svg class="abs" style="left:1674px;top:11px" width="15" height="15" viewBox="0 0 15 15"><path d="M7.500 1v13M1 7.500h13" stroke="#777" stroke-width="2.400"/></svg>
 <!-- right icons -->
 <svg class="abs" style="left:1705px;top:6px" width="215" height="26" viewBox="0 0 215 26">
  <path d="M2 3h9l4 4v5l-6 7H2z" fill="#666"/><path d="M8 19l1-4 8-8 3 3-8 8z" fill="#666" stroke="#ccc" stroke-width=".8"/>
  <circle cx="83" cy="10" r="8" fill="#666"/><circle cx="83" cy="10" r="6" fill="none" stroke="#ccc" stroke-width="1.200"/><path d="M83 5.500v5h4" stroke="#ccc" stroke-width="1.500" fill="none"/>
  <path d="M116 2.500c-3.500 0-5 2.500-5 5.500 0 4-1.500 5-2.500 6.500h15c-1-1.500-2.500-2.500-2.500-6.500 0-3-1.500-5.500-5-5.500z" fill="#666"/><circle cx="116" cy="16.500" r="1.800" fill="#666"/>
  <circle cx="149" cy="10" r="8" fill="#666"/><path d="M146.200 8a2.900 2.900 0 1 1 4.300 2.300c-1 .6-1.500 1-1.500 2.200" fill="none" stroke="#fff" stroke-width="1.900"/><rect x="148" y="13.800" width="2" height="2" fill="#fff"/>
  <circle cx="190" cy="10" r="12" fill="#9fb2cc"/><clipPath id="av"><circle cx="190" cy="10" r="12"/></clipPath><g clip-path="url(#av)" fill="#56647a"><ellipse cx="190" cy="6" rx="5.800" ry="7.500"/><path d="M187 11h6v5l8 3v5h-22v-5l8-3z"/></g>
 </svg>
 <div class="abs" style="left:1727px;top:9px;font-size:11px;color:#222;letter-spacing:-.1px">10/10</div>
</div>
<div class="abs" style="left:23px;top:12.2px;font-size:12.5px;line-height:1.16;color:#000;white-space:nowrap;transform-origin:0 0;transform:scaleX(0.941)">Autodesk Fusion 360 (個人用 - 商用利用不可)</div><div class="abs" style="left:515px;top:41.8px;font-size:12.5px;line-height:1.16;color:#333;white-space:nowrap;transform-origin:0 0;transform:scaleX(0.983)">JR-200_open v1*</div><div class="abs" style="left:1276px;top:41.8px;font-size:12.5px;line-height:1.16;color:#555;white-space:nowrap;transform-origin:0 0;transform:scaleX(1.009)">jr100_3*</div><div id="toolbar"></div>
<div class="abs" style="left:12px;top:73px;width:110px;height:61px;border:1px solid #d9d9d9;border-radius:5px;background:#f2f2f2"></div>
<svg class="abs" style="left:0;top:63px" width="1920" height="82" viewBox="0 63 1920 82">
<defs>
<linearGradient id="gb" x1="0" y1="0" x2="0" y2="1"><stop offset="0" stop-color="#7fbef0"/><stop offset="1" stop-color="#4f9ad8"/></linearGradient>
</defs>
<!-- separators -->
<g stroke="#d4d4d4" stroke-width="1.500"><path d="M351 91v50M620 91v50M717 91v50M775 91v50M835 91v50M894 91v50"/></g>
<!-- 1 sketch -->
<g fill="none" stroke="#555" stroke-width="1.100"><path d="M141 91.500h22M138.500 94v21M165.500 94v14M141 118.500h13" /><path d="M146 98.500h12M145.500 99v12M158.500 99c0 7-5 12-12.500 12.500"/></g>
<g fill="#555"><rect x="137" y="90" width="3" height="3"/><rect x="164" y="90" width="3" height="3"/><rect x="137" y="117" width="3" height="3"/><rect x="144" y="97" width="3" height="3"/><rect x="157" y="97" width="3" height="3"/><rect x="144" y="110" width="3" height="3"/></g>
<path d="M160 108h4v4.800h5v4h-5v5h-4v-5h-5v-4h5z" fill="#1aa33a"/>
<!-- 2 extrude -->
<path d="M181 117l5 3h13l6-4v-3h-24z" fill="#c8c8c8"/><path d="M181 96l6-5h18l-6 5z" fill="#8ecbf7"/><rect x="181" y="96" width="18" height="20" fill="#6cb0e6"/><path d="M199 96l6-5v22l-6 3z" fill="#3f8ccb"/>
<path d="M209 93v24" stroke="#333" stroke-width="1.300"/><path d="M206.500 96l2.500-5 2.500 5z" fill="#333"/>
<!-- 3 revolve -->
<path d="M223.100 104.600C228 96.500 246 94.500 254.400 102.800L248.100 107.800C243 103.500 233 103.500 228.800 108.400Z" fill="#8ecbf7"/>
<path d="M228.800 108.400C233 103.500 243 103.500 248.100 107.800L248.100 118C243 112.500 233 113 228.800 118.600Z" fill="#6cb0e6"/>
<path d="M223.100 104.600L228.800 108.400L228.800 118.600L223.600 113.200Z" fill="#3f8ccb"/>
<path d="M248.800 108.400L254.400 103.400L255 112.800L249.400 118.400Z" fill="#fff" stroke="#555" stroke-width="1"/>
<path d="M253 96.500C246 90.500 233 90.500 226 96" fill="none" stroke="#333" stroke-width="1.100"/><path d="M223.800 97.800l5.200-4-.3 5z" fill="#333"/>
<!-- 4 hole -->
<path d="M266.500 97.500l8.500-7.500h22.500v24l-7.500 7.500h-23.500z" fill="#dcdcdc" stroke="#666" stroke-width="1"/><path d="M290 97.500l7.500-7.500v24l-7.500 7.500z" fill="#c4c4c4" stroke="#666" stroke-width="1"/><path d="M266.500 97.500h23.500" fill="none" stroke="#666" stroke-width="1"/>
<circle cx="278" cy="109.500" r="8.500" fill="#f0f0f0" stroke="#555" stroke-width="1"/><clipPath id="hc"><circle cx="278" cy="109.500" r="6.600"/></clipPath><circle cx="278" cy="109.500" r="6.600" fill="#5fa6df"/><circle cx="282.500" cy="106" r="5.500" fill="#f4f4f4" clip-path="url(#hc)"/>
<!-- 5 pattern -->
<g stroke="#555" stroke-width="1.200" fill="none"><path d="M312 95.500h22M312 116.500h22M312.500 95v22"/></g>
<rect x="309.500" y="92.500" width="6" height="6" fill="#fff" stroke="#555"/><g fill="#5fa6df"><rect x="331" y="92" width="7" height="7"/><rect x="309" y="113" width="7" height="7"/><rect x="331" y="113" width="7" height="7"/></g>
<!-- 6 press pull -->
<path d="M364 96l5-5h8v26l-5 4h-8z" fill="#dcdcdc" stroke="#666" stroke-width="1"/><path d="M371 96l5-5h9v26l-5 4h-9z" fill="#5fa6df"/><path d="M380 95l5-4v26l-5 4z" fill="#3f8ccb"/><path d="M384 108.500h7" stroke="#222" stroke-width="1.400"/><path d="M390 105.500l4 3-4 3z" fill="#222"/>
<!-- 7 fillet -->
<path d="M406 98l8-7h14c6 2 10 8 10 15v9l-7 6h-25z" fill="#dcdcdc" stroke="#666" stroke-width="1"/><path d="M420 91h8c6 2 10 8 10 15l-6 5c0-8-4-15-12-15z" fill="#5fa6df"/><path d="M406 121V98h14c8 0 12 7 12 13v10" fill="none" stroke="#666" stroke-width="1"/>
<!-- 8 shell -->
<path d="M449 97l6-6h26v24l-7 7h-25z" fill="#d9d9d9" stroke="#666" stroke-width="1"/><path d="M449 97h25v25M474 97l7-6" fill="none" stroke="#666" stroke-width="1"/><rect x="453" y="101" width="17" height="17" fill="#fff"/><path d="M453 101h8v9h9v8h-17z" fill="#3f8ccb"/><path d="M456 110h5v0l9 0v5h-14z" fill="#8ecbf7"/>
<!-- 9 combine -->
<path d="M492 104l5-4h8v-5l5-5h15v18l-5 4h-8v5l-5 4h-15z" fill="#5fa6df"/><path d="M505 100v-5h15l5-5M492 104h15v17" fill="none" stroke="#3f8ccb" stroke-width="1"/><path d="M520 95v17l5-4V90zM507 104v17l5-4v-5" fill="#3f8ccb"/>
<!-- 10 split -->
<path d="M537 96l6-5h22v10l-6 5h-22z" fill="#6cb0e6"/><path d="M559 96l6-5v10l-6 5z" fill="#3f8ccb"/><path d="M537 96l6-5h22l-6 5z" fill="#8ecbf7"/>
<path d="M537 112h22l6-5v9l-6 5h-22z" fill="#d9d9d9" stroke="#777" stroke-width="1"/><path d="M535 108h25l7-6" fill="none" stroke="#2f86d0" stroke-width="1.500"/>
<!-- 11 move -->
<g stroke="#222" stroke-width="2" fill="none"><path d="M594 94v24M582 106h24"/></g><g fill="#222"><path d="M589.500 96l4.500-6 4.500 6zM589.500 116l4.500 6 4.500-6zM584 101.500l-6 4.500 6 4.500zM604 101.500l6 4.500-6 4.500z"/></g>
<!-- 12 new component -->
<path d="M632 110h13v11h-13zM645 110h12l4-3v10l-4 4h-12z" fill="#d9d9d9" stroke="#777" stroke-width="1"/><path d="M645 110l4-3h12" fill="none" stroke="#777"/><path d="M632 100l4-4h12v10l-3 4h-13z" fill="#5fa6df"/><path d="M632 100l4-4h12l-3 4z" fill="#8ecbf7"/>
<path d="M655 90l1.800 4.500 4.200-2.500-1.500 4.500 4.800.5-4 2.800 3 3.700-4.800-.5.200 4.800-3.700-3.300-3 3.800-.5-4.800-4.700 1 3-3.800-4-2.500 4.800-.8-1.200-4.600 4 2.500z" fill="#f29a1a"/>
<!-- 13 joint -->
<path d="M677 100l5-6c2-1.500 5-1.500 6 0v22l-6 5h-5z" fill="#d0d0d0" stroke="#666" stroke-width="1"/><path d="M692 103l8-8 5 6v18l-6-5h-4l-3-3z" fill="#c4c4c4" stroke="#666" stroke-width="1"/><path d="M686 105v6M694 98v6" stroke="#2f86d0" stroke-width="1.300"/>
<!-- 14 construct -->
<path d="M732 97l6-6h8v24l-6 6h-8z" fill="#dcdcdc" stroke="#666" stroke-width="1"/><path d="M741 96l9-5v24l-9 6z" fill="#56bd78"/><path d="M753 97l9-6v22l-9 8z" fill="#e8965a"/>
<!-- 15 inspect -->
<rect x="792" y="108" width="28" height="6" fill="#f0a21a"/><g stroke="#b36b00" stroke-width=".8"><path d="M795 108v2.500M798 108v2.500M801 108v2.500M804 108v2.500M807 108v2.500M810 108v2.500M813 108v2.500M816 108v2.500"/></g>
<g stroke="#555" stroke-width="1"><path d="M792.500 98v9M819.500 98v9M794 102.500h24"/></g><path d="M796.500 100l-3.500 2.500 3.500 2.500zM815.500 100l3.500 2.500-3.500 2.500z" fill="#555"/>
<!-- 16 insert -->
<rect x="850" y="91" width="29" height="29" fill="#7ec3f5" stroke="#3f8ccb" stroke-width="1"/><path d="M850.500 119.500v-10c3-6 8-8 12-2l3 4c2-3 6-5 9-1l4 5v4.500z" fill="#3f8ccb"/><circle cx="871" cy="99" r="3" fill="#fdf3c0"/>
<!-- 17 select -->
<rect x="905" y="87" width="38" height="38" fill="#0696d7"/><rect x="908.500" y="90.500" width="27" height="21" fill="none" stroke="#a6e58a" stroke-width="1.200" stroke-dasharray="4 2.500"/><path d="M929 104v15l3.500-3.200 2.500 6 2.500-1-2.500-6h5z" fill="#fff"/>
</svg>
<div class="abs" style="left:42px;top:96.6px;font-size:11px;line-height:1.16;color:#222;white-space:nowrap;transform-origin:0 0;transform:scaleX(0.864);font-weight:bold">デザイン</div>
<div class="abs" style="left:85px;top:101px;width:0;height:0;border:3.5px solid transparent;border-top:4.500px solid #333;border-bottom:0"></div>
<div class="abs" style="left:149px;top:67.9px;font-size:10.5px;line-height:1.16;color:#0696d7;white-space:nowrap;transform-origin:0 0;transform:scaleX(0.762);font-weight:bold">ソリッド</div>
<div class="abs" style="left:227px;top:67.9px;font-size:10.5px;line-height:1.16;color:#333;white-space:nowrap;transform-origin:0 0;transform:scaleX(0.771)">サーフェス</div>
<div class="abs" style="left:315px;top:67.9px;font-size:10.5px;line-height:1.16;color:#333;white-space:nowrap;transform-origin:0 0;transform:scaleX(0.714)">メッシュ</div>
<div class="abs" style="left:388px;top:67.9px;font-size:10.5px;line-height:1.16;color:#333;white-space:nowrap;transform-origin:0 0;transform:scaleX(0.768)">フォーム</div>
<div class="abs" style="left:466px;top:67.9px;font-size:10.5px;line-height:1.16;color:#333;white-space:nowrap;transform-origin:0 0;transform:scaleX(0.804)">シート メタル</div>
<div class="abs" style="left:564px;top:67.9px;font-size:10.5px;line-height:1.16;color:#333;white-space:nowrap;transform-origin:0 0;transform:scaleX(0.733)">プラスチック</div>
<div class="abs" style="left:657px;top:67.9px;font-size:10.5px;line-height:1.16;color:#333;white-space:nowrap;transform-origin:0 0;transform:scaleX(0.720)">ユーティリティ</div>
<div class="abs" style="left:138px;top:84px;width:56px;height:2.700px;background:#0696d7"></div>
<div class="abs" style="left:219px;top:128.4px;font-size:10.5px;line-height:1.16;color:#222;white-space:nowrap;transform-origin:0 0;transform:scaleX(1.000)">作成</div>
<div class="abs" style="left:242.5px;top:132.500px;width:0;height:0;border:3.200px solid transparent;border-top:4.500px solid #333;border-bottom:0"></div>
<div class="abs" style="left:468px;top:128.4px;font-size:10.5px;line-height:1.16;color:#222;white-space:nowrap;transform-origin:0 0;transform:scaleX(0.952)">修正</div>
<div class="abs" style="left:490.5px;top:132.500px;width:0;height:0;border:3.200px solid transparent;border-top:4.500px solid #333;border-bottom:0"></div>
<div class="abs" style="left:642px;top:128.4px;font-size:10.5px;line-height:1.16;color:#222;white-space:nowrap;transform-origin:0 0;transform:scaleX(0.750)">アセンブリ</div>
<div class="abs" style="left:683.5px;top:132.500px;width:0;height:0;border:3.200px solid transparent;border-top:4.500px solid #333;border-bottom:0"></div>
<div class="abs" style="left:731px;top:128.4px;font-size:10.5px;line-height:1.16;color:#222;white-space:nowrap;transform-origin:0 0;transform:scaleX(0.952)">構築</div>
<div class="abs" style="left:753.5px;top:132.500px;width:0;height:0;border:3.200px solid transparent;border-top:4.500px solid #333;border-bottom:0"></div>
<div class="abs" style="left:790px;top:128.4px;font-size:10.5px;line-height:1.16;color:#222;white-space:nowrap;transform-origin:0 0;transform:scaleX(0.952)">検査</div>
<div class="abs" style="left:812.5px;top:132.500px;width:0;height:0;border:3.200px solid transparent;border-top:4.500px solid #333;border-bottom:0"></div>
<div class="abs" style="left:849px;top:128.4px;font-size:10.5px;line-height:1.16;color:#222;white-space:nowrap;transform-origin:0 0;transform:scaleX(0.952)">挿入</div>
<div class="abs" style="left:871.5px;top:132.500px;width:0;height:0;border:3.200px solid transparent;border-top:4.500px solid #333;border-bottom:0"></div>
<div class="abs" style="left:908px;top:128.4px;font-size:10.5px;line-height:1.16;color:#222;white-space:nowrap;transform-origin:0 0;transform:scaleX(0.952)">選択</div>
<div class="abs" style="left:930.5px;top:132.500px;width:0;height:0;border:3.200px solid transparent;border-top:4.500px solid #333;border-bottom:0"></div>
<div class="abs" style="left:4px;top:149px;width:300px;height:24px;background:#f1f1f1;border:1px solid #cfcfcf"></div>
<svg class="abs" style="left:9px;top:156px" width="12" height="10" viewBox="0 0 12 10"><path d="M5.500 1v8l-5-4zM11 1v8l-5-4z" fill="#333"/></svg>
<div class="abs" style="left:28px;top:154.9px;font-size:10.5px;line-height:1.16;color:#444;white-space:nowrap;transform-origin:0 0;transform:scaleX(0.762)">ブラウザ</div>
<svg class="abs" style="left:282px;top:156px" width="22" height="11" viewBox="0 0 22 11"><circle cx="5" cy="5.500" r="4.500" fill="#222"/><rect x="2.500" y="4.700" width="5" height="1.600" fill="#fff"/><path d="M17.500 0v11" stroke="#666" stroke-width="1.200"/><path d="M19.500 1v9" stroke="#aaa" stroke-width="1"/></svg>
<div class="abs" style="left:8px;top:180px;width:6px;height:816px;background:rgba(185,185,190,.8)"></div>
<div class="abs" style="left:8px;top:179px;width:6px;height:226px;background:rgba(125,125,125,.85);border-radius:3px"></div>
<div class="abs" style="left:40px;top:179px;width:176px;height:20px;background:rgba(240,240,240,.94)"></div>
<svg class="abs" style="left:20.5px;top:182.5px" width="13" height="13" viewBox="0 0 13 13"><defs><linearGradient id="ad1" x1="1" y1="0" x2="0" y2="1"><stop offset="0" stop-color="#222"/><stop offset="1" stop-color="#bbb"/></linearGradient></defs><path d="M11.500 1v10.500h-10.500z" fill="url(#ad1)" stroke="#222" stroke-width="1" stroke-linejoin="round"/></svg>
<svg class="abs" style="left:42px;top:183px" width="18" height="12" viewBox="0 0 18 12"><path d="M1 6c2-3.300 5-5 8-5s6 1.700 8 5c-2 3.300-5 5-8 5s-6-1.700-8-5z" fill="#a8a8a8"/><circle cx="9" cy="6" r="3.200" fill="#f0f0f0"/><circle cx="9" cy="6" r="1.700" fill="#a8a8a8"/></svg>
<div class="abs" style="left:65px;top:181px;width:126px;height:16px;background:#8e8e8e"></div>
<svg class="abs" style="left:67px;top:180px" width="18" height="18" viewBox="0 0 18 18"><path d="M1.500 5.500l3.500-3.500h11.500v10.500l-3.500 4h-11.500z" fill="#f4f4f4" stroke="#555" stroke-width="1"/><path d="M1.500 5.500h11.500v11M13 5.500l3.500-3.500" fill="none" stroke="#555" stroke-width="1"/><path d="M13 5.500l3.500-3.500v10.500l-3.500 4z" fill="#d8d8d8"/></svg>
<div class="abs" style="left:98px;top:182.9px;font-size:10.5px;line-height:1.16;color:#fff;white-space:nowrap;transform-origin:0 0;transform:scaleX(1.038);font-weight:bold">JR-200_open v1</div>
<svg class="abs" style="left:194px;top:182px" width="14" height="14" viewBox="0 0 14 14"><circle cx="7" cy="7" r="5.800" fill="#fff" stroke="#222" stroke-width="1.100"/><circle cx="7" cy="7" r="2.300" fill="#222"/></svg>
<div class="abs" style="left:58px;top:203px;width:122px;height:20px;background:rgba(240,240,240,.94)"></div>
<svg class="abs" style="left:39px;top:206px" width="11" height="14" viewBox="0 0 11 14"><path d="M1.500 1.500l8 5.500-8 5.500z" fill="#fff" stroke="#333" stroke-width="1.300" stroke-linejoin="round"/></svg>
<svg class="abs" style="left:60px;top:204px" width="18" height="18" viewBox="-9 -9 18 18"><g fill="#999"><circle r="6"/><rect x="-1.800" y="-8.500" width="3.600" height="17" transform="rotate(0)"/><rect x="-1.800" y="-8.500" width="3.600" height="17" transform="rotate(45)"/><rect x="-1.800" y="-8.500" width="3.600" height="17" transform="rotate(90)"/><rect x="-1.800" y="-8.500" width="3.600" height="17" transform="rotate(135)"/></g><circle r="2.600" fill="#f0f0f0"/></svg>
<div class="abs" style="left:91px;top:206.9px;font-size:10.5px;line-height:1.16;color:#222;white-space:nowrap;transform-origin:0 0;transform:scaleX(0.815)">ドキュメントの設定</div>
<div class="abs" style="left:58px;top:227px;width:90px;height:20px;background:rgba(240,240,240,.94)"></div>
<svg class="abs" style="left:39px;top:230px" width="11" height="14" viewBox="0 0 11 14"><path d="M1.500 1.500l8 5.500-8 5.500z" fill="#fff" stroke="#333" stroke-width="1.300" stroke-linejoin="round"/></svg>
<svg class="abs" style="left:60.5px;top:230px" width="17" height="14" viewBox="0 0 17 14"><path d="M0 1.500h6.500l1.500 2h9v10.500h-17z" fill="#999"/><path d="M0 1.500h6.500l1.500 2h-8z" fill="#8a8a8a"/></svg>
<div class="abs" style="left:89px;top:230.9px;font-size:10.5px;line-height:1.16;color:#222;white-space:nowrap;transform-origin:0 0;transform:scaleX(0.876)">ビュー管理</div>
<div class="abs" style="left:58px;top:251px;width:91px;height:20px;background:rgba(240,240,240,.94)"></div>
<svg class="abs" style="left:39px;top:254px" width="11" height="14" viewBox="0 0 11 14"><path d="M1.500 1.500l8 5.500-8 5.500z" fill="#fff" stroke="#333" stroke-width="1.300" stroke-linejoin="round"/></svg>
<svg class="abs" style="left:60px;top:255px" width="18" height="12" viewBox="0 0 18 12"><path d="M1 6c2-3.300 5-5 8-5s6 1.700 8 5c-2 3.300-5 5-8 5s-6-1.700-8-5z" fill="none" stroke="#aaa" stroke-width="1"/><circle cx="9" cy="6" r="2.500" fill="none" stroke="#aaa"/><path d="M3 .500l12 11" stroke="#aaa" stroke-width="1.200"/></svg>
<svg class="abs" style="left:85.5px;top:254px" width="17" height="14" viewBox="0 0 17 14"><path d="M0 1.500h6.500l1.500 2h9v10.500h-17z" fill="#999"/><path d="M0 1.500h6.500l1.500 2h-8z" fill="#8a8a8a"/></svg>
<div class="abs" style="left:116px;top:254.9px;font-size:10.5px;line-height:1.16;color:#222;white-space:nowrap;transform-origin:0 0;transform:scaleX(0.952)">原点</div>
<div class="abs" style="left:58px;top:275px;width:91px;height:20px;background:rgba(240,240,240,.94)"></div>
<svg class="abs" style="left:38px;top:278.5px" width="13" height="13" viewBox="0 0 13 13"><defs><linearGradient id="ad11" x1="1" y1="0" x2="0" y2="1"><stop offset="0" stop-color="#222"/><stop offset="1" stop-color="#bbb"/></linearGradient></defs><path d="M11.500 1v10.500h-10.500z" fill="url(#ad11)" stroke="#222" stroke-width="1" stroke-linejoin="round"/></svg>
<svg class="abs" style="left:60px;top:279px" width="18" height="12" viewBox="0 0 18 12"><path d="M1 6c2-3.300 5-5 8-5s6 1.700 8 5c-2 3.300-5 5-8 5s-6-1.700-8-5z" fill="#a8a8a8"/><circle cx="9" cy="6" r="3.200" fill="#f0f0f0"/><circle cx="9" cy="6" r="1.700" fill="#a8a8a8"/></svg>
<svg class="abs" style="left:85.5px;top:278px" width="17" height="14" viewBox="0 0 17 14"><path d="M0 1.500h6.500l1.500 2h9v10.500h-17z" fill="#999"/><path d="M0 1.500h6.500l1.500 2h-8z" fill="#8a8a8a"/></svg>
<div class="abs" style="left:115px;top:278.9px;font-size:10.5px;line-height:1.16;color:#222;white-space:nowrap;transform-origin:0 0;transform:scaleX(0.780)">ボディ</div>
<div class="abs" style="left:76px;top:299px;width:143px;height:20px;background:rgba(240,240,240,.94)"></div>
<svg class="abs" style="left:78px;top:303px" width="18" height="12" viewBox="0 0 18 12"><path d="M1 6c2-3.300 5-5 8-5s6 1.700 8 5c-2 3.300-5 5-8 5s-6-1.700-8-5z" fill="#a8a8a8"/><circle cx="9" cy="6" r="3.200" fill="#f0f0f0"/><circle cx="9" cy="6" r="1.700" fill="#a8a8a8"/></svg>
<svg class="abs" style="left:103px;top:300px" width="18" height="18" viewBox="0 0 18 18"><defs><linearGradient id="bg15" x1="0" x2="1"><stop offset="0" stop-color="#fff"/><stop offset="1" stop-color="#c9ccd6"/></linearGradient></defs><rect x="1" y="1" width="16" height="16" rx="4.500" fill="#fff" stroke="#444" stroke-width="1.100"/><path d="M4 6.500c3 1 7 1 10 0v7c0 1.500-1 2.500-2.500 2.500h-5c-1.500 0-2.500-1-2.500-2.500z" fill="url(#bg15)"/></svg>
<div class="abs" style="left:133px;top:302.9px;font-size:10.5px;line-height:1.16;color:#222;white-space:nowrap;transform-origin:0 0;transform:scaleX(0.804)">キーボード・カバー</div>
<div class="abs" style="left:76px;top:323px;width:143px;height:20px;background:rgba(240,240,240,.94)"></div>
<svg class="abs" style="left:78px;top:327px" width="18" height="12" viewBox="0 0 18 12"><path d="M1 6c2-3.300 5-5 8-5s6 1.700 8 5c-2 3.300-5 5-8 5s-6-1.700-8-5z" fill="#a8a8a8"/><circle cx="9" cy="6" r="3.200" fill="#f0f0f0"/><circle cx="9" cy="6" r="1.700" fill="#a8a8a8"/></svg>
<svg class="abs" style="left:103px;top:324px" width="18" height="18" viewBox="0 0 18 18"><defs><linearGradient id="bg17" x1="0" x2="1"><stop offset="0" stop-color="#fff"/><stop offset="1" stop-color="#c9ccd6"/></linearGradient></defs><rect x="1" y="1" width="16" height="16" rx="4.500" fill="#fff" stroke="#444" stroke-width="1.100"/><path d="M4 6.500c3 1 7 1 10 0v7c0 1.500-1 2.500-2.500 2.500h-5c-1.500 0-2.500-1-2.500-2.500z" fill="url(#bg17)"/></svg>
<div class="abs" style="left:133px;top:326.9px;font-size:10.5px;line-height:1.16;color:#222;white-space:nowrap;transform-origin:0 0;transform:scaleX(0.794)">キーボード・ラベル</div>
<div class="abs" style="left:76px;top:347px;width:135px;height:20px;background:rgba(240,240,240,.94)"></div>
<svg class="abs" style="left:78px;top:351px" width="18" height="12" viewBox="0 0 18 12"><path d="M1 6c2-3.300 5-5 8-5s6 1.700 8 5c-2 3.300-5 5-8 5s-6-1.700-8-5z" fill="#a8a8a8"/><circle cx="9" cy="6" r="3.200" fill="#f0f0f0"/><circle cx="9" cy="6" r="1.700" fill="#a8a8a8"/></svg>
<svg class="abs" style="left:103px;top:348px" width="18" height="18" viewBox="0 0 18 18"><defs><linearGradient id="bg19" x1="0" x2="1"><stop offset="0" stop-color="#fff"/><stop offset="1" stop-color="#c9ccd6"/></linearGradient></defs><rect x="1" y="1" width="16" height="16" rx="4.500" fill="#fff" stroke="#444" stroke-width="1.100"/><path d="M4 6.500c3 1 7 1 10 0v7c0 1.500-1 2.500-2.500 2.500h-5c-1.500 0-2.500-1-2.500-2.500z" fill="url(#bg19)"/></svg>
<div class="abs" style="left:133px;top:350.9px;font-size:10.5px;line-height:1.16;color:#222;white-space:nowrap;transform-origin:0 0;transform:scaleX(0.810)">キーボード・キー</div>
<div class="abs" style="left:76px;top:371px;width:87px;height:20px;background:rgba(240,240,240,.94)"></div>
<svg class="abs" style="left:78px;top:375px" width="18" height="12" viewBox="0 0 18 12"><path d="M1 6c2-3.300 5-5 8-5s6 1.700 8 5c-2 3.300-5 5-8 5s-6-1.700-8-5z" fill="#a8a8a8"/><circle cx="9" cy="6" r="3.200" fill="#f0f0f0"/><circle cx="9" cy="6" r="1.700" fill="#a8a8a8"/></svg>
<svg class="abs" style="left:103px;top:372px" width="18" height="18" viewBox="0 0 18 18"><defs><linearGradient id="bg21" x1="0" x2="1"><stop offset="0" stop-color="#fff"/><stop offset="1" stop-color="#c9ccd6"/></linearGradient></defs><rect x="1" y="1" width="16" height="16" rx="4.500" fill="#fff" stroke="#444" stroke-width="1.100"/><path d="M4 6.500c3 1 7 1 10 0v7c0 1.500-1 2.500-2.500 2.500h-5c-1.500 0-2.500-1-2.500-2.500z" fill="url(#bg21)"/></svg>
<div class="abs" style="left:134px;top:374.9px;font-size:10.5px;line-height:1.16;color:#222;white-space:nowrap;transform-origin:0 0;transform:scaleX(0.930)">LED</div>
<div class="abs" style="left:76px;top:395px;width:143px;height:20px;background:rgba(240,240,240,.94)"></div>
<svg class="abs" style="left:78px;top:399px" width="18" height="12" viewBox="0 0 18 12"><path d="M1 6c2-3.300 5-5 8-5s6 1.700 8 5c-2 3.300-5 5-8 5s-6-1.700-8-5z" fill="#a8a8a8"/><circle cx="9" cy="6" r="3.200" fill="#f0f0f0"/><circle cx="9" cy="6" r="1.700" fill="#a8a8a8"/></svg>
<svg class="abs" style="left:103px;top:396px" width="18" height="18" viewBox="0 0 18 18"><defs><linearGradient id="bg23" x1="0" x2="1"><stop offset="0" stop-color="#fff"/><stop offset="1" stop-color="#c9ccd6"/></linearGradient></defs><rect x="1" y="1" width="16" height="16" rx="4.500" fill="#fff" stroke="#444" stroke-width="1.100"/><path d="M4 6.500c3 1 7 1 10 0v7c0 1.500-1 2.500-2.500 2.500h-5c-1.500 0-2.500-1-2.500-2.500z" fill="url(#bg23)"/></svg>
<div class="abs" style="left:133px;top:398.9px;font-size:10.5px;line-height:1.16;color:#222;white-space:nowrap;transform-origin:0 0;transform:scaleX(0.821)">ボディ・上面ライン</div>
<div class="abs" style="left:76px;top:419px;width:119px;height:20px;background:rgba(240,240,240,.94)"></div>
<svg class="abs" style="left:78px;top:423px" width="18" height="12" viewBox="0 0 18 12"><path d="M1 6c2-3.300 5-5 8-5s6 1.700 8 5c-2 3.300-5 5-8 5s-6-1.700-8-5z" fill="#a8a8a8"/><circle cx="9" cy="6" r="3.200" fill="#f0f0f0"/><circle cx="9" cy="6" r="1.700" fill="#a8a8a8"/></svg>
<svg class="abs" style="left:103px;top:420px" width="18" height="18" viewBox="0 0 18 18"><defs><linearGradient id="bg25" x1="0" x2="1"><stop offset="0" stop-color="#fff"/><stop offset="1" stop-color="#c9ccd6"/></linearGradient></defs><rect x="1" y="1" width="16" height="16" rx="4.500" fill="#fff" stroke="#444" stroke-width="1.100"/><path d="M4 6.500c3 1 7 1 10 0v7c0 1.500-1 2.500-2.500 2.500h-5c-1.500 0-2.500-1-2.500-2.500z" fill="url(#bg25)"/></svg>
<div class="abs" style="left:133px;top:422.9px;font-size:10.5px;line-height:1.16;color:#222;white-space:nowrap;transform-origin:0 0;transform:scaleX(0.825)">電源スイッチ</div>
<div class="abs" style="left:76px;top:443px;width:131px;height:20px;background:rgba(240,240,240,.94)"></div>
<svg class="abs" style="left:78px;top:447px" width="18" height="12" viewBox="0 0 18 12"><path d="M1 6c2-3.300 5-5 8-5s6 1.700 8 5c-2 3.300-5 5-8 5s-6-1.700-8-5z" fill="#a8a8a8"/><circle cx="9" cy="6" r="3.200" fill="#f0f0f0"/><circle cx="9" cy="6" r="1.700" fill="#a8a8a8"/></svg>
<svg class="abs" style="left:103px;top:444px" width="18" height="18" viewBox="0 0 18 18"><defs><linearGradient id="bg27" x1="0" x2="1"><stop offset="0" stop-color="#fff"/><stop offset="1" stop-color="#c9ccd6"/></linearGradient></defs><rect x="1" y="1" width="16" height="16" rx="4.500" fill="#fff" stroke="#444" stroke-width="1.100"/><path d="M4 6.500c3 1 7 1 10 0v7c0 1.500-1 2.500-2.500 2.500h-5c-1.500 0-2.500-1-2.500-2.500z" fill="url(#bg27)"/></svg>
<div class="abs" style="left:133px;top:446.9px;font-size:10.5px;line-height:1.16;color:#222;white-space:nowrap;transform-origin:0 0;transform:scaleX(0.857)">電源スイッチ枠</div>
<div class="abs" style="left:76px;top:467px;width:151px;height:20px;background:rgba(240,240,240,.94)"></div>
<svg class="abs" style="left:78px;top:471px" width="18" height="12" viewBox="0 0 18 12"><path d="M1 6c2-3.300 5-5 8-5s6 1.700 8 5c-2 3.300-5 5-8 5s-6-1.700-8-5z" fill="#a8a8a8"/><circle cx="9" cy="6" r="3.200" fill="#f0f0f0"/><circle cx="9" cy="6" r="1.700" fill="#a8a8a8"/></svg>
<svg class="abs" style="left:103px;top:468px" width="18" height="18" viewBox="0 0 18 18"><defs><linearGradient id="bg29" x1="0" x2="1"><stop offset="0" stop-color="#fff"/><stop offset="1" stop-color="#c9ccd6"/></linearGradient></defs><rect x="1" y="1" width="16" height="16" rx="4.500" fill="#fff" stroke="#444" stroke-width="1.100"/><path d="M4 6.500c3 1 7 1 10 0v7c0 1.500-1 2.500-2.500 2.500h-5c-1.500 0-2.500-1-2.500-2.500z" fill="url(#bg29)"/></svg>
<div class="abs" style="left:133px;top:470.9px;font-size:10.5px;line-height:1.16;color:#222;white-space:nowrap;transform-origin:0 0;transform:scaleX(0.733)">ジョイスティックポート</div>
<div class="abs" style="left:76px;top:491px;width:119px;height:20px;background:rgba(240,240,240,.94)"></div>
<svg class="abs" style="left:78px;top:495px" width="18" height="12" viewBox="0 0 18 12"><path d="M1 6c2-3.300 5-5 8-5s6 1.700 8 5c-2 3.300-5 5-8 5s-6-1.700-8-5z" fill="#a8a8a8"/><circle cx="9" cy="6" r="3.200" fill="#f0f0f0"/><circle cx="9" cy="6" r="1.700" fill="#a8a8a8"/></svg>
<svg class="abs" style="left:103px;top:492px" width="18" height="18" viewBox="0 0 18 18"><defs><linearGradient id="bg31" x1="0" x2="1"><stop offset="0" stop-color="#fff"/><stop offset="1" stop-color="#c9ccd6"/></linearGradient></defs><rect x="1" y="1" width="16" height="16" rx="4.500" fill="#fff" stroke="#444" stroke-width="1.100"/><path d="M4 6.500c3 1 7 1 10 0v7c0 1.500-1 2.500-2.500 2.500h-5c-1.500 0-2.500-1-2.500-2.500z" fill="url(#bg31)"/></svg>
<div class="abs" style="left:133px;top:494.9px;font-size:10.5px;line-height:1.16;color:#222;white-space:nowrap;transform-origin:0 0;transform:scaleX(0.819)">ボディ・下面</div>
<div class="abs" style="left:76px;top:515px;width:119px;height:20px;background:rgba(240,240,240,.94)"></div>
<svg class="abs" style="left:78px;top:519px" width="18" height="12" viewBox="0 0 18 12"><path d="M1 6c2-3.300 5-5 8-5s6 1.700 8 5c-2 3.300-5 5-8 5s-6-1.700-8-5z" fill="#a8a8a8"/><circle cx="9" cy="6" r="3.200" fill="#f0f0f0"/><circle cx="9" cy="6" r="1.700" fill="#a8a8a8"/></svg>
<svg class="abs" style="left:103px;top:516px" width="18" height="18" viewBox="0 0 18 18"><defs><linearGradient id="bg33" x1="0" x2="1"><stop offset="0" stop-color="#fff"/><stop offset="1" stop-color="#c9ccd6"/></linearGradient></defs><rect x="1" y="1" width="16" height="16" rx="4.500" fill="#fff" stroke="#444" stroke-width="1.100"/><path d="M4 6.500c3 1 7 1 10 0v7c0 1.500-1 2.500-2.500 2.500h-5c-1.500 0-2.500-1-2.500-2.500z" fill="url(#bg33)"/></svg>
<div class="abs" style="left:133px;top:518.9px;font-size:10.5px;line-height:1.16;color:#222;white-space:nowrap;transform-origin:0 0;transform:scaleX(0.819)">ボディ・上面</div>
<div class="abs" style="left:76px;top:539px;width:123px;height:20px;background:rgba(240,240,240,.94)"></div>
<svg class="abs" style="left:78px;top:543px" width="18" height="12" viewBox="0 0 18 12"><path d="M1 6c2-3.300 5-5 8-5s6 1.700 8 5c-2 3.300-5 5-8 5s-6-1.700-8-5z" fill="#a8a8a8"/><circle cx="9" cy="6" r="3.200" fill="#f0f0f0"/><circle cx="9" cy="6" r="1.700" fill="#a8a8a8"/></svg>
<svg class="abs" style="left:103px;top:540px" width="18" height="18" viewBox="0 0 18 18"><defs><linearGradient id="bg35" x1="0" x2="1"><stop offset="0" stop-color="#fff"/><stop offset="1" stop-color="#c9ccd6"/></linearGradient></defs><rect x="1" y="1" width="16" height="16" rx="4.500" fill="#fff" stroke="#444" stroke-width="1.100"/><path d="M4 6.500c3 1 7 1 10 0v7c0 1.500-1 2.500-2.500 2.500h-5c-1.500 0-2.500-1-2.500-2.500z" fill="url(#bg35)"/></svg>
<div class="abs" style="left:133px;top:542.9px;font-size:10.5px;line-height:1.16;color:#222;white-space:nowrap;transform-origin:0 0;transform:scaleX(0.861)">内部フレーム</div>
<div class="abs" style="left:58px;top:563px;width:111px;height:20px;background:rgba(240,240,240,.94)"></div>
<svg class="abs" style="left:39px;top:566px" width="11" height="14" viewBox="0 0 11 14"><path d="M1.500 1.500l8 5.500-8 5.500z" fill="#fff" stroke="#333" stroke-width="1.300" stroke-linejoin="round"/></svg>
<svg class="abs" style="left:60px;top:567px" width="18" height="12" viewBox="0 0 18 12"><path d="M1 6c2-3.300 5-5 8-5s6 1.700 8 5c-2 3.300-5 5-8 5s-6-1.700-8-5z" fill="#a8a8a8"/><circle cx="9" cy="6" r="3.200" fill="#f0f0f0"/><circle cx="9" cy="6" r="1.700" fill="#a8a8a8"/></svg>
<svg class="abs" style="left:85.5px;top:566px" width="17" height="14" viewBox="0 0 17 14"><path d="M0 1.500h6.500l1.500 2h9v10.500h-17z" fill="#999"/><path d="M0 1.500h6.500l1.500 2h-8z" fill="#8a8a8a"/></svg>
<div class="abs" style="left:115px;top:566.9px;font-size:10.5px;line-height:1.16;color:#222;white-space:nowrap;transform-origin:0 0;transform:scaleX(0.781)">キャンバス</div>
<div class="abs" style="left:58px;top:587px;width:139px;height:20px;background:rgba(240,240,240,.94)"></div>
<svg class="abs" style="left:39px;top:590px" width="11" height="14" viewBox="0 0 11 14"><path d="M1.500 1.500l8 5.500-8 5.500z" fill="#fff" stroke="#333" stroke-width="1.300" stroke-linejoin="round"/></svg>
<svg class="abs" style="left:60px;top:591px" width="18" height="12" viewBox="0 0 18 12"><path d="M1 6c2-3.300 5-5 8-5s6 1.700 8 5c-2 3.300-5 5-8 5s-6-1.700-8-5z" fill="#a8a8a8"/><circle cx="9" cy="6" r="3.200" fill="#f0f0f0"/><circle cx="9" cy="6" r="1.700" fill="#a8a8a8"/></svg>
<svg class="abs" style="left:85.5px;top:590px" width="17" height="14" viewBox="0 0 17 14"><path d="M0 1.500h6.500l1.500 2h9v10.500h-17z" fill="#999"/><path d="M0 1.500h6.500l1.500 2h-8z" fill="#8a8a8a"/></svg>
<div class="abs" style="left:115px;top:590.9px;font-size:10.5px;line-height:1.16;color:#222;white-space:nowrap;transform-origin:0 0;transform:scaleX(0.753)">コンストラクション</div>
<div class="abs" style="left:58px;top:611px;width:106px;height:20px;background:rgba(240,240,240,.94)"></div>
<svg class="abs" style="left:60px;top:612px" width="18" height="18" viewBox="0 0 18 18"><path d="M1 15l2 2h8l3-2.500v-2h-13z" fill="#c9c9c9"/><rect x="1" y="3.500" width="10" height="11" fill="#5fa6df"/><path d="M1 3.500l3-2.500h10l-3 2.500z" fill="#8ecbf7"/><path d="M11 3.500l3-2.500v11.500l-3 2z" fill="#3f8ccb"/><path d="M16 3v11" stroke="#333" stroke-width="1"/><path d="M14.500 4.500l1.500-3 1.500 3z" fill="#333"/></svg>
<div class="abs" style="left:91px;top:614.9px;font-size:10.5px;line-height:1.16;color:#222;white-space:nowrap;transform-origin:0 0;transform:scaleX(0.949)">押し出し2889</div>
<div class="abs" style="left:58px;top:635px;width:106px;height:20px;background:rgba(240,240,240,.94)"></div>
<svg class="abs" style="left:60px;top:636px" width="18" height="18" viewBox="0 0 18 18"><path d="M1 15l2 2h8l3-2.500v-2h-13z" fill="#c9c9c9"/><rect x="1" y="3.500" width="10" height="11" fill="#5fa6df"/><path d="M1 3.500l3-2.500h10l-3 2.500z" fill="#8ecbf7"/><path d="M11 3.500l3-2.500v11.500l-3 2z" fill="#3f8ccb"/><path d="M16 3v11" stroke="#333" stroke-width="1"/><path d="M14.500 4.500l1.500-3 1.500 3z" fill="#333"/></svg>
<div class="abs" style="left:91px;top:638.9px;font-size:10.5px;line-height:1.16;color:#222;white-space:nowrap;transform-origin:0 0;transform:scaleX(0.949)">押し出し2890</div>
<div class="abs" style="left:58px;top:659px;width:106px;height:20px;background:rgba(240,240,240,.94)"></div>
<svg class="abs" style="left:60px;top:660px" width="18" height="18" viewBox="0 0 18 18"><path d="M1 15l2 2h8l3-2.500v-2h-13z" fill="#c9c9c9"/><rect x="1" y="3.500" width="10" height="11" fill="#5fa6df"/><path d="M1 3.500l3-2.500h10l-3 2.500z" fill="#8ecbf7"/><path d="M11 3.500l3-2.500v11.500l-3 2z" fill="#3f8ccb"/><path d="M16 3v11" stroke="#333" stroke-width="1"/><path d="M14.500 4.500l1.500-3 1.500 3z" fill="#333"/></svg>
<div class="abs" style="left:91px;top:662.9px;font-size:10.5px;line-height:1.16;color:#222;white-space:nowrap;transform-origin:0 0;transform:scaleX(0.949)">押し出し2914</div>
<div class="abs" style="left:58px;top:683px;width:106px;height:20px;background:rgba(240,240,240,.94)"></div>
<svg class="abs" style="left:60px;top:684px" width="18" height="18" viewBox="0 0 18 18"><path d="M1 15l2 2h8l3-2.500v-2h-13z" fill="#c9c9c9"/><rect x="1" y="3.500" width="10" height="11" fill="#5fa6df"/><path d="M1 3.500l3-2.500h10l-3 2.500z" fill="#8ecbf7"/><path d="M11 3.500l3-2.500v11.500l-3 2z" fill="#3f8ccb"/><path d="M16 3v11" stroke="#333" stroke-width="1"/><path d="M14.500 4.500l1.500-3 1.500 3z" fill="#333"/></svg>
<div class="abs" style="left:91px;top:686.9px;font-size:10.5px;line-height:1.16;color:#222;white-space:nowrap;transform-origin:0 0;transform:scaleX(0.949)">押し出し2922</div>
<div class="abs" style="left:58px;top:707px;width:90px;height:20px;background:rgba(240,240,240,.94)"></div>
<svg class="abs" style="left:60px;top:708px" width="18" height="18" viewBox="0 0 18 18"><path d="M1.500 15.500v-8c0-3 2-5 5-5.500l3 2.500 1 11z" fill="#e0e0e0" stroke="#666" stroke-width="1"/><path d="M8 5l4.500-3.500 3.500 9-4 3.500z" fill="#3f8ccb"/><path d="M13.500 1.500l2.500 5" stroke="#333" stroke-width="1"/></svg>
<div class="abs" style="left:91px;top:710.9px;font-size:10.5px;line-height:1.16;color:#222;white-space:nowrap;transform-origin:0 0;transform:scaleX(1.037)">勾配2923</div>
<div class="abs" style="left:58px;top:731px;width:90px;height:20px;background:rgba(240,240,240,.94)"></div>
<svg class="abs" style="left:60px;top:732px" width="18" height="18" viewBox="0 0 18 18"><path d="M1.500 15.500v-8c0-3 2-5 5-5.500l3 2.500 1 11z" fill="#e0e0e0" stroke="#666" stroke-width="1"/><path d="M8 5l4.500-3.500 3.500 9-4 3.500z" fill="#3f8ccb"/><path d="M13.500 1.500l2.500 5" stroke="#333" stroke-width="1"/></svg>
<div class="abs" style="left:91px;top:734.9px;font-size:10.5px;line-height:1.16;color:#222;white-space:nowrap;transform-origin:0 0;transform:scaleX(1.037)">勾配2924</div>
<div class="abs" style="left:58px;top:755px;width:106px;height:20px;background:rgba(240,240,240,.94)"></div>
<svg class="abs" style="left:60px;top:756px" width="18" height="18" viewBox="0 0 18 18"><path d="M1 15l2 2h8l3-2.500v-2h-13z" fill="#c9c9c9"/><rect x="1" y="3.500" width="10" height="11" fill="#5fa6df"/><path d="M1 3.500l3-2.500h10l-3 2.500z" fill="#8ecbf7"/><path d="M11 3.500l3-2.500v11.500l-3 2z" fill="#3f8ccb"/><path d="M16 3v11" stroke="#333" stroke-width="1"/><path d="M14.500 4.500l1.500-3 1.500 3z" fill="#333"/></svg>
<div class="abs" style="left:91px;top:758.9px;font-size:10.5px;line-height:1.16;color:#222;white-space:nowrap;transform-origin:0 0;transform:scaleX(0.949)">押し出し2925</div>
<div class="abs" style="left:58px;top:779px;width:106px;height:20px;background:rgba(240,240,240,.94)"></div>
<svg class="abs" style="left:60px;top:780px" width="18" height="18" viewBox="0 0 18 18"><path d="M1 15l2 2h8l3-2.500v-2h-13z" fill="#c9c9c9"/><rect x="1" y="3.500" width="10" height="11" fill="#5fa6df"/><path d="M1 3.500l3-2.500h10l-3 2.500z" fill="#8ecbf7"/><path d="M11 3.500l3-2.500v11.500l-3 2z" fill="#3f8ccb"/><path d="M16 3v11" stroke="#333" stroke-width="1"/><path d="M14.500 4.500l1.500-3 1.500 3z" fill="#333"/></svg>
<div class="abs" style="left:91px;top:782.9px;font-size:10.5px;line-height:1.16;color:#222;white-space:nowrap;transform-origin:0 0;transform:scaleX(0.949)">押し出し2926</div>
<div class="abs" style="left:58px;top:803px;width:102px;height:20px;background:rgba(240,240,240,.94)"></div>
<svg class="abs" style="left:60px;top:804px" width="18" height="18" viewBox="0 0 18 18"><path d="M1.500 16v-9.500c0-3 2-5 5-5h3c4 0 7 3 7 7v4l-3 3.500z" fill="#dcdcdc" stroke="#666" stroke-width="1"/><path d="M8 1.500h1.500c4 0 7 3 7 7l-3.500 2.500c0-4-2-7-5-7z" fill="#3f8ccb"/></svg>
<div class="abs" style="left:91px;top:806.9px;font-size:10.5px;line-height:1.16;color:#222;white-space:nowrap;transform-origin:0 0;transform:scaleX(0.780)">フィレット2927</div>
<div class="abs" style="left:58px;top:827px;width:102px;height:20px;background:rgba(240,240,240,.94)"></div>
<svg class="abs" style="left:60px;top:828px" width="18" height="18" viewBox="0 0 18 18"><path d="M1.500 16v-9.500c0-3 2-5 5-5h3c4 0 7 3 7 7v4l-3 3.500z" fill="#dcdcdc" stroke="#666" stroke-width="1"/><path d="M8 1.500h1.500c4 0 7 3 7 7l-3.500 2.500c0-4-2-7-5-7z" fill="#3f8ccb"/></svg>
<div class="abs" style="left:91px;top:830.9px;font-size:10.5px;line-height:1.16;color:#222;white-space:nowrap;transform-origin:0 0;transform:scaleX(0.780)">フィレット2928</div>
<div class="abs" style="left:58px;top:851px;width:90px;height:20px;background:rgba(240,240,240,.94)"></div>
<svg class="abs" style="left:60px;top:852px" width="18" height="18" viewBox="0 0 18 18"><path d="M1.500 15.500v-8c0-3 2-5 5-5.500l3 2.500 1 11z" fill="#e0e0e0" stroke="#666" stroke-width="1"/><path d="M8 5l4.500-3.500 3.500 9-4 3.500z" fill="#3f8ccb"/><path d="M13.500 1.500l2.500 5" stroke="#333" stroke-width="1"/></svg>
<div class="abs" style="left:91px;top:854.9px;font-size:10.5px;line-height:1.16;color:#222;white-space:nowrap;transform-origin:0 0;transform:scaleX(1.037)">勾配2929</div>
<div class="abs" style="left:58px;top:875px;width:106px;height:20px;background:rgba(240,240,240,.94)"></div>
<svg class="abs" style="left:60px;top:876px" width="18" height="18" viewBox="0 0 18 18"><path d="M1 15l2 2h8l3-2.500v-2h-13z" fill="#c9c9c9"/><rect x="1" y="3.500" width="10" height="11" fill="#5fa6df"/><path d="M1 3.500l3-2.500h10l-3 2.500z" fill="#8ecbf7"/><path d="M11 3.500l3-2.500v11.500l-3 2z" fill="#3f8ccb"/><path d="M16 3v11" stroke="#333" stroke-width="1"/><path d="M14.500 4.500l1.500-3 1.500 3z" fill="#333"/></svg>
<div class="abs" style="left:91px;top:878.9px;font-size:10.5px;line-height:1.16;color:#222;white-space:nowrap;transform-origin:0 0;transform:scaleX(0.949)">押し出し2932</div>
<div class="abs" style="left:58px;top:899px;width:106px;height:20px;background:rgba(240,240,240,.94)"></div>
<svg class="abs" style="left:60px;top:900px" width="18" height="18" viewBox="0 0 18 18"><path d="M1 15l2 2h8l3-2.500v-2h-13z" fill="#c9c9c9"/><rect x="1" y="3.500" width="10" height="11" fill="#5fa6df"/><path d="M1 3.500l3-2.500h10l-3 2.500z" fill="#8ecbf7"/><path d="M11 3.500l3-2.500v11.500l-3 2z" fill="#3f8ccb"/><path d="M16 3v11" stroke="#333" stroke-width="1"/><path d="M14.500 4.500l1.500-3 1.500 3z" fill="#333"/></svg>
<div class="abs" style="left:91px;top:902.9px;font-size:10.5px;line-height:1.16;color:#222;white-space:nowrap;transform-origin:0 0;transform:scaleX(0.949)">押し出し2933</div>
<div class="abs" style="left:58px;top:923px;width:106px;height:20px;background:rgba(240,240,240,.94)"></div>
<svg class="abs" style="left:60px;top:924px" width="18" height="18" viewBox="0 0 18 18"><path d="M1 15l2 2h8l3-2.500v-2h-13z" fill="#c9c9c9"/><rect x="1" y="3.500" width="10" height="11" fill="#5fa6df"/><path d="M1 3.500l3-2.500h10l-3 2.500z" fill="#8ecbf7"/><path d="M11 3.500l3-2.500v11.500l-3 2z" fill="#3f8ccb"/><path d="M16 3v11" stroke="#333" stroke-width="1"/><path d="M14.500 4.500l1.500-3 1.500 3z" fill="#333"/></svg>
<div class="abs" style="left:91px;top:926.9px;font-size:10.5px;line-height:1.16;color:#222;white-space:nowrap;transform-origin:0 0;transform:scaleX(0.949)">押し出し2934</div>
<div class="abs" style="left:58px;top:947px;width:106px;height:20px;background:rgba(240,240,240,.94)"></div>
<svg class="abs" style="left:60px;top:948px" width="18" height="18" viewBox="0 0 18 18"><path d="M1 15l2 2h8l3-2.500v-2h-13z" fill="#c9c9c9"/><rect x="1" y="3.500" width="10" height="11" fill="#5fa6df"/><path d="M1 3.500l3-2.500h10l-3 2.500z" fill="#8ecbf7"/><path d="M11 3.500l3-2.500v11.500l-3 2z" fill="#3f8ccb"/><path d="M16 3v11" stroke="#333" stroke-width="1"/><path d="M14.500 4.500l1.500-3 1.500 3z" fill="#333"/></svg>
<div class="abs" style="left:91px;top:950.9px;font-size:10.5px;line-height:1.16;color:#222;white-space:nowrap;transform-origin:0 0;transform:scaleX(0.949)">押し出し2938</div>
<div class="abs" style="left:58px;top:971px;width:106px;height:20px;background:rgba(240,240,240,.94)"></div>
<svg class="abs" style="left:60px;top:972px" width="18" height="18" viewBox="0 0 18 18"><path d="M1 15l2 2h8l3-2.500v-2h-13z" fill="#c9c9c9"/><rect x="1" y="3.500" width="10" height="11" fill="#5fa6df"/><path d="M1 3.500l3-2.500h10l-3 2.500z" fill="#8ecbf7"/><path d="M11 3.500l3-2.500v11.500l-3 2z" fill="#3f8ccb"/><path d="M16 3v11" stroke="#333" stroke-width="1"/><path d="M14.500 4.500l1.500-3 1.500 3z" fill="#333"/></svg>
<div class="abs" style="left:91px;top:974.9px;font-size:10.5px;line-height:1.16;color:#222;white-space:nowrap;transform-origin:0 0;transform:scaleX(0.949)">押し出し2943</div>
<div class="abs" style="left:4px;top:1019px;width:300px;height:24px;background:#f1f1f1;border:1px solid #cfcfcf"></div>
<div class="abs" style="left:28px;top:1024.4px;font-size:10.5px;line-height:1.16;color:#444;white-space:nowrap;transform-origin:0 0;transform:scaleX(0.762)">コメント</div>
<svg class="abs" style="left:282px;top:1025px" width="22" height="11" viewBox="0 0 22 11"><circle cx="5" cy="5.500" r="4.500" fill="#222"/><path d="M2.500 5.500h5M5 3v5" stroke="#fff" stroke-width="1.400"/><path d="M17.500 0v11" stroke="#666" stroke-width="1.200"/><path d="M19.500 1v9" stroke="#aaa" stroke-width="1"/></svg>
<div class="abs" style="left:841px;top:1019px;width:237px;height:24px;background:#f0f0f0"></div>
<svg class="abs" style="left:841px;top:1019px" width="237" height="24" viewBox="841 1019 237 24">
<g fill="#333"><path d="M865.500 1029h5.500l-2.750 3.500zM976.500 1029h5.500l-2.750 3.500zM1006.500 1029h5.500l-2.750 3.500zM1037.500 1029h5.500l-2.750 3.500zM1068.500 1029h5.500l-2.750 3.500z"/></g>
<!-- orbit -->
<path d="M852 1024v15" stroke="#222" stroke-width="1.300" fill="none"/><path d="M849.500 1026.500l2.500-3.500 2.500 3.500M850.200 1025v13.500h3.600v-13.500" fill="#fff" stroke="#222" stroke-width=".9"/>
<ellipse cx="852.500" cy="1032.500" rx="7.500" ry="2.800" fill="none" stroke="#222" stroke-width="1.200"/><path d="M845 1031.500l.5 4.500 3.500-2.500z" fill="#222"/>
<!-- look at -->
<path d="M879 1028l2-3.500h4l1 1.500 4-2 1 4" fill="#ccc" stroke="#333" stroke-width="1"/><rect x="878" y="1028" width="14.500" height="10" fill="#f4f4f4" stroke="#333" stroke-width="1.100"/><rect x="880.500" y="1031" width="9.500" height="3.500" fill="#9aa" stroke="#556" stroke-width=".7"/>
<!-- pan -->
<path d="M907 1031c-1.500-1.500-3-.5-2 1l3.500 5c1 1.500 2 2 4 2h2.500c2 0 3-1.500 3-3.500v-7c0-1.500-2-1.500-2 0v-3c0-1.500-2-1.500-2 0v-1.500c0-1.500-2.200-1.500-2.200 0v1c0-1.500-2.200-1.500-2.200 0v8z" fill="#fff" stroke="#334" stroke-width="1"/><path d="M909 1026v5M911.300 1024.500v6M913.500 1025.500v5" stroke="#334" stroke-width=".8"/>
<!-- zoom -->
<circle cx="934.500" cy="1029.500" r="4.800" fill="#dfeaf3" stroke="#334" stroke-width="1.200"/><path d="M938 1033l4.500 4.500" stroke="#334" stroke-width="2.200"/><path d="M941 1026h4M943 1024v4M941 1030h4" stroke="#222" stroke-width="1"/>
<!-- zoom window -->
<rect x="955.500" y="1023.500" width="14" height="14" fill="none" stroke="#333" stroke-width="1" stroke-dasharray="2 1.500"/><circle cx="962" cy="1029.500" r="5.500" fill="#e6eef5" stroke="#334" stroke-width="1.200"/><path d="M966 1034l4.500 4.500" stroke="#334" stroke-width="2.300"/>
<!-- display -->
<rect x="988.500" y="1023.500" width="15" height="11.500" rx="1" fill="#e8e8e8" stroke="#333" stroke-width="1.100"/><rect x="990.500" y="1025.500" width="11" height="7.500" fill="#7d9fd6"/><path d="M993 1038.500h6l-1-3h-4z" fill="#bbb" stroke="#444" stroke-width=".8"/>
<!-- grid -->
<rect x="1019.500" y="1023.500" width="15" height="15" fill="#e6e6ee" stroke="#334" stroke-width="1"/><path d="M1023.200 1023.500v15M1027 1023.500v15M1030.800 1023.500v15M1019.500 1027.200h15M1019.500 1031h15M1019.500 1034.800h15" stroke="#556" stroke-width=".9"/>
<!-- viewports -->
<rect x="1050" y="1024" width="15" height="13" rx="1" fill="#3d5fa8"/><g fill="#a9c3ee"><rect x="1051.500" y="1025.500" width="5.300" height="4.300"/><rect x="1058.200" y="1025.500" width="5.300" height="4.300"/><rect x="1051.500" y="1031.200" width="5.300" height="4.300"/><rect x="1058.200" y="1031.200" width="5.300" height="4.300"/></g>
</svg>

<div class="abs" style="left:0;top:0;width:1928px;height:8px;background:#000"></div>
<div class="abs" style="left:1920px;top:0;width:8px;height:27px;background:#2b2b2b"></div>
<div class="abs" style="left:1920px;top:27px;width:8px;height:919px;background:#000"></div>
<div class="abs" style="left:1920px;top:946px;width:8px;height:110px;background:#f8f8f8"></div>
<div class="abs" style="left:0;top:1048px;width:1920px;height:8px;background:#111"></div>
<div class="abs" style="left:48px;top:1048px;width:344px;height:8px;background:#f0f0f0;border-top:1px solid #ccc"></div>
<div class="abs" style="left:932px;top:1048px;width:48px;height:8px;background:#333"></div>
<div class="abs" style="left:1915px;top:1048px;width:1px;height:8px;background:#555"></div>
<div class="abs" style="left:1817px;top:1051px;width:32px;height:5px;overflow:hidden"><div style="font-size:11px;color:#fff;line-height:11px;margin-top:1px">11:23</div></div>
</body></html>
